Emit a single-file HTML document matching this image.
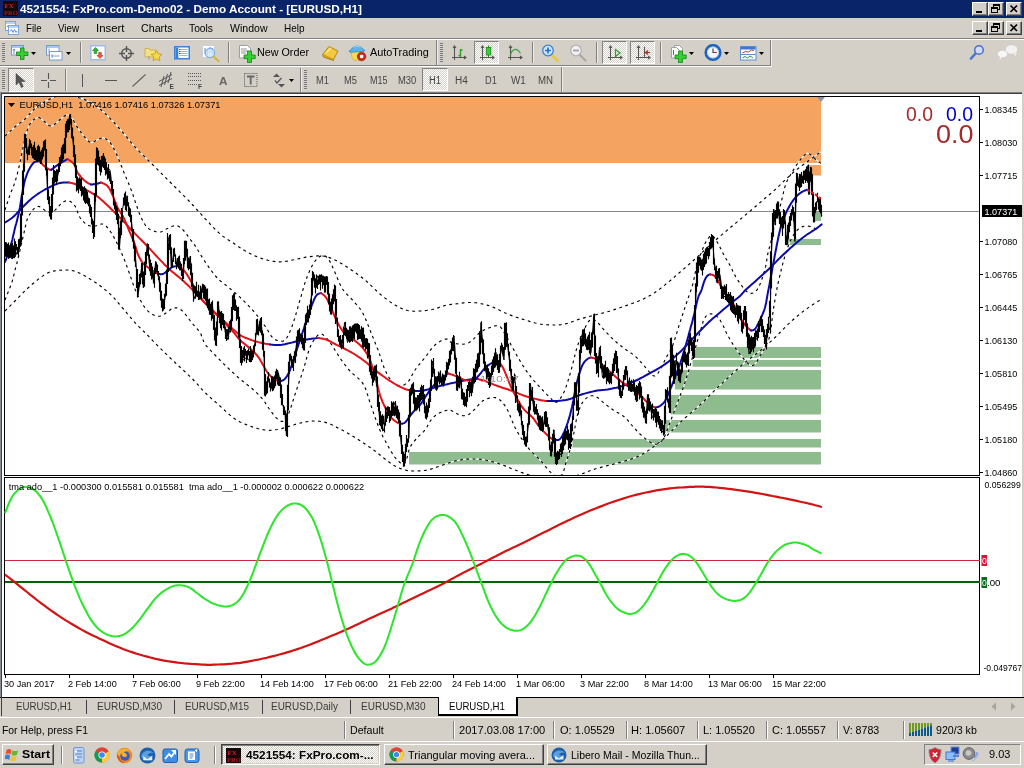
<!DOCTYPE html>
<html><head><meta charset="utf-8"><title>4521554: FxPro.com-Demo02 - Demo Account - [EURUSD,H1]</title>
<style>
html,body{margin:0;padding:0}
body{width:1024px;height:768px;overflow:hidden;background:#D4D0C8;position:relative;font-family:"Liberation Sans",sans-serif;font-size:11px}
.t{position:absolute;white-space:nowrap;line-height:1;transform-origin:0 0;display:block}
.chart{position:absolute;left:0;top:0}
.ax{font-family:"Liberation Sans",sans-serif;font-size:9.6px}
.abs{position:absolute}
#wrap{position:absolute;left:0;top:0;width:1024px;height:768px;will-change:transform}
</style></head>
<body>
<div id="wrap">
<svg class="chart" width="1024" height="768" viewBox="0 0 1024 768">
<defs><pattern id="chk" width="2" height="2" patternUnits="userSpaceOnUse"><rect width="2" height="2" fill="#D4D0C8"/><rect width="1" height="1" fill="#fff"/><rect x="1" y="1" width="1" height="1" fill="#fff"/></pattern></defs>
<rect x="0" y="92" width="1024" height="602" fill="#fff"/>
<rect x="0" y="92" width="1024" height="1" fill="#808080"/>
<rect x="0" y="93" width="1022" height="1" fill="#404040"/>
<rect x="0" y="92" width="1" height="602" fill="#8a8f96"/>
<rect x="1" y="93" width="1" height="601" fill="#404040"/>
<rect x="1022" y="92" width="2" height="602" fill="#d4d0c8"/>
<rect x="5" y="97" width="816" height="66" fill="#F4A460"/>
<rect x="809" y="165" width="12" height="10.5" fill="#F4A460"/>
<rect x="695" y="347" width="126" height="11" fill="#8FBC8F"/>
<rect x="692.5" y="360" width="128.5" height="6.75" fill="#8FBC8F"/>
<rect x="675" y="370" width="146" height="19.5" fill="#8FBC8F"/>
<rect x="671" y="395" width="150" height="19.5" fill="#8FBC8F"/>
<rect x="665" y="420" width="156" height="12.5" fill="#8FBC8F"/>
<rect x="572.5" y="439" width="248.5" height="8.5" fill="#8FBC8F"/>
<rect x="409" y="452" width="412" height="12.5" fill="#8FBC8F"/>
<rect x="787" y="239" width="34" height="6" fill="#8FBC8F"/>
<rect x="813" y="212" width="8" height="9" fill="#8FBC8F"/>
<path d="M817 97 L825 97 L821 102 Z" fill="#8a96a4"/>
<rect x="5" y="211" width="975" height="1" fill="#8a8a8a"/>
<clipPath id="c1"><rect x="5" y="97" width="974" height="378"/></clipPath>
<g clip-path="url(#c1)">
<clipPath id="cz"><rect x="695" y="347" width="126" height="11"/><rect x="692.5" y="360" width="128.5" height="6.75"/><rect x="675" y="370" width="146" height="19.5"/><rect x="671" y="395" width="150" height="19.5"/><rect x="665" y="420" width="156" height="12.5"/><rect x="572.5" y="439" width="248.5" height="8.5"/><rect x="409" y="452" width="412" height="12.5"/><rect x="787" y="239" width="34" height="6"/><rect x="813" y="212" width="8" height="9"/><rect x="5" y="97" width="816" height="66"/></clipPath><g clip-path="url(#cz)">
<polyline points="5.0,136.0 6.2,134.9 7.9,133.3 9.9,131.4 12.1,129.5 14.2,127.6 16.0,126.0 17.6,124.7 19.1,123.6 20.5,122.6 21.9,121.6 23.4,120.4 25.0,119.0 26.7,117.3 28.5,115.4 30.3,113.3 32.2,111.2 34.1,109.2 36.0,107.5 37.9,106.0 39.9,104.6 41.9,103.3 44.0,102.2 46.0,101.1 48.0,100.0 50.0,99.0 52.1,98.0 54.1,97.1 56.1,96.3 58.1,95.6 60.0,95.0 61.8,94.6 63.6,94.2 65.3,94.0 66.9,93.9 68.5,93.9 70.0,94.0 71.4,94.3 72.6,94.7 73.8,95.2 74.9,95.8 76.1,96.4 77.5,97.0 79.0,97.6 80.6,98.1 82.2,98.7 83.9,99.3 85.7,100.1 87.5,101.0 89.4,102.1 91.5,103.2 93.6,104.5 95.7,105.9 97.9,107.4 100.0,109.0 102.1,110.7 104.2,112.6 106.2,114.6 108.3,116.7 110.4,118.8 112.5,121.0 114.6,123.2 116.8,125.6 118.9,128.0 121.0,130.4 123.1,132.8 125.0,135.0 126.8,137.1 128.3,139.0 129.8,140.9 131.4,142.9 133.1,144.8 135.0,147.0 137.2,149.3 139.6,151.8 142.2,154.3 144.8,156.9 147.4,159.5 150.0,162.0 152.5,164.5 155.1,167.1 157.6,169.6 160.1,172.1 162.6,174.6 165.0,177.0 167.3,179.3 169.6,181.6 171.8,183.8 174.0,186.0 176.0,188.0 178.0,190.0 179.8,191.8 181.5,193.5 183.2,195.0 184.7,196.6 186.3,198.2 187.9,199.8 189.5,201.5 191.1,203.2 192.7,205.0 194.3,206.8 196.0,208.6 197.7,210.5 199.5,212.5 201.5,214.6 203.4,216.8 205.4,219.0 207.4,221.1 209.4,223.2 211.3,225.3 213.3,227.3 215.2,229.4 217.2,231.3 219.2,233.2 221.1,234.9 223.0,236.4 225.0,237.8 226.9,239.0 228.9,240.2 230.8,241.4 232.8,242.7 234.7,244.0 236.7,245.4 238.6,246.7 240.6,248.0 242.5,249.3 244.5,250.5 246.5,251.6 248.4,252.7 250.4,253.7 252.3,254.7 254.3,255.6 256.2,256.4 258.2,257.2 260.2,257.9 262.1,258.6 264.1,259.2 266.0,259.8 268.0,260.3 270.0,260.7 271.9,261.1 273.9,261.4 275.8,261.7 277.8,261.8 279.7,261.9 281.6,261.8 283.4,261.7 285.3,261.4 287.2,261.1 289.2,260.7 291.4,260.3 293.8,259.8 296.5,259.2 299.2,258.6 302.1,258.0 304.8,257.4 307.5,257.0 310.1,256.6 312.7,256.3 315.2,256.0 317.7,255.9 320.2,255.9 322.5,256.0 324.7,256.3 326.8,256.8 328.8,257.4 330.7,258.1 332.8,259.0 335.0,260.0 337.4,261.2 339.8,262.6 342.3,264.1 344.9,265.7 347.5,267.3 350.0,269.0 352.5,270.7 355.0,272.4 357.5,274.2 360.0,276.0 362.5,278.0 365.0,280.0 367.5,282.2 370.0,284.6 372.5,287.0 375.0,289.4 377.5,291.8 380.0,294.0 382.5,296.1 385.1,298.1 387.7,300.0 390.2,301.9 392.6,303.5 395.0,305.0 397.2,306.3 399.4,307.4 401.4,308.4 403.4,309.2 405.4,309.9 407.5,310.5 409.6,310.9 411.7,311.1 413.8,311.2 415.8,311.2 417.9,311.1 420.0,311.0 422.1,310.9 424.2,310.7 426.2,310.5 428.3,310.3 430.4,309.9 432.5,309.5 434.6,308.9 436.8,308.3 438.9,307.5 441.0,306.7 443.1,306.1 445.0,305.5 446.7,305.1 448.2,304.8 449.7,304.6 451.2,304.4 452.9,304.2 455.0,304.0 457.5,303.7 460.3,303.3 463.3,302.9 466.4,302.6 469.5,302.5 472.5,302.5 475.4,302.7 478.3,303.1 481.2,303.7 484.2,304.3 487.1,305.1 490.0,306.0 492.9,307.1 495.8,308.4 498.8,309.8 501.7,311.3 504.6,312.7 507.5,314.0 510.4,315.1 513.4,316.2 516.4,317.2 519.4,318.2 522.2,319.1 525.0,320.0 527.7,320.8 530.3,321.6 532.8,322.3 535.3,323.0 537.7,323.5 540.0,324.0 542.2,324.4 544.4,324.6 546.4,324.8 548.4,324.9 550.4,325.0 552.5,325.0 554.6,325.0 556.6,325.0 558.6,324.9 560.6,324.7 562.8,324.4 565.0,324.0 567.4,323.4 569.8,322.6 572.3,321.7 574.9,320.7 577.5,319.8 580.0,319.0 582.5,318.3 585.0,317.6 587.5,316.9 590.0,316.3 592.5,315.7 595.0,315.0 597.5,314.3 600.0,313.7 602.5,313.1 605.0,312.4 607.5,311.7 610.0,311.0 612.5,310.2 615.0,309.4 617.5,308.6 620.0,307.7 622.5,306.9 625.0,306.0 627.5,305.1 630.1,304.2 632.7,303.3 635.2,302.4 637.6,301.5 640.0,300.5 642.3,299.5 644.4,298.4 646.5,297.4 648.6,296.3 650.6,295.2 652.5,294.0 654.3,292.9 655.9,291.8 657.5,290.7 659.2,289.5 661.0,288.1 663.0,286.5 665.3,284.6 667.9,282.5 670.7,280.2 673.5,277.8 676.3,275.3 679.0,273.0 681.7,270.7 684.4,268.4 687.1,266.0 689.7,263.7 692.4,261.3 695.0,259.0 697.6,256.6 700.3,254.1 703.0,251.6 705.6,249.1 707.9,246.9 710.0,245.0 711.6,243.5 712.9,242.4 713.9,241.5 715.0,240.6 716.3,239.5 718.0,238.0 720.2,236.1 722.8,233.9 725.6,231.6 728.4,229.2 731.3,226.8 734.0,224.5 736.6,222.4 739.1,220.2 741.6,218.2 744.1,216.1 746.6,214.0 749.0,212.0 751.4,210.0 753.7,208.0 756.1,206.0 758.4,204.0 760.7,202.0 763.0,200.0 765.3,198.0 767.6,196.1 769.9,194.2 772.3,192.2 774.6,190.1 777.0,188.0 779.4,185.7 781.9,183.2 784.4,180.7 787.0,178.2 789.5,175.8 792.0,173.5 794.5,171.4 797.0,169.4 799.5,167.5 802.0,165.6 804.5,163.8 806.9,162.0 809.5,160.1 812.2,158.1 814.9,156.1 817.4,154.3 819.5,152.8 821.0,151.7" stroke="#fff" stroke-width="1.15" fill="none"/>
<polyline points="5.0,210.0 5.5,208.3 6.3,206.0 7.2,203.3 8.1,200.4 9.1,197.6 10.0,195.0 10.8,192.7 11.7,190.6 12.6,188.5 13.4,186.4 14.2,184.3 15.0,182.0 15.7,179.6 16.4,177.2 17.1,174.8 17.7,172.2 18.4,169.6 19.0,167.0 19.6,164.3 20.2,161.6 20.7,158.8 21.3,155.9 21.9,153.0 22.5,150.0 23.2,146.8 23.9,143.4 24.7,140.0 25.5,136.6 26.3,133.6 27.0,131.0 27.7,128.9 28.3,127.3 28.9,125.9 29.5,124.7 30.2,123.6 31.0,122.5 32.0,121.4 33.0,120.3 34.2,119.3 35.4,118.5 36.5,117.9 37.5,117.5 38.4,117.4 39.2,117.6 39.9,118.1 40.7,118.6 41.5,119.3 42.5,120.0 43.6,120.9 44.9,122.0 46.2,123.3 47.6,124.5 48.9,125.4 50.0,126.0 50.9,126.2 51.8,126.1 52.5,125.8 53.2,125.3 54.1,124.7 55.0,124.0 56.1,123.1 57.4,122.0 58.7,120.8 60.1,119.5 61.3,118.4 62.5,117.5 63.5,116.8 64.5,116.1 65.4,115.6 66.3,115.2 67.2,115.0 68.0,115.0 68.8,115.2 69.6,115.7 70.3,116.3 71.0,117.1 71.7,118.0 72.5,119.0 73.3,120.1 74.0,121.4 74.8,122.9 75.6,124.4 76.5,125.9 77.5,127.5 78.6,129.1 79.9,130.9 81.2,132.7 82.5,134.5 83.8,136.1 85.0,137.5 86.1,138.7 87.0,139.9 88.0,140.8 88.9,141.6 89.9,142.2 91.0,142.5 92.3,142.4 93.6,141.9 95.1,141.1 96.5,140.3 97.8,139.5 99.0,139.0 100.0,138.6 100.9,138.3 101.6,138.0 102.4,137.8 103.1,137.8 104.0,138.0 105.0,138.4 106.0,138.9 107.0,139.7 108.0,140.5 109.0,141.5 110.0,142.5 110.9,143.7 111.7,144.9 112.6,146.3 113.4,147.8 114.2,149.4 115.0,151.0 115.8,152.7 116.7,154.6 117.5,156.5 118.3,158.5 119.2,160.5 120.0,162.5 120.8,164.5 121.6,166.5 122.4,168.5 123.2,170.6 124.1,172.8 125.0,175.0 126.0,177.4 127.1,179.9 128.2,182.5 129.3,185.2 130.3,187.7 131.2,190.0 132.0,192.1 132.7,194.0 133.3,195.8 133.8,197.6 134.5,199.6 135.2,201.7 136.1,204.1 137.0,206.8 138.0,209.6 139.0,212.4 140.0,215.0 141.0,217.3 142.0,219.3 142.9,221.2 143.9,222.9 144.9,224.5 145.9,225.9 146.9,227.1 148.0,228.1 149.1,228.9 150.2,229.6 151.4,230.1 152.6,230.6 153.7,231.0 154.8,231.4 156.0,231.7 157.2,231.9 158.3,232.1 159.4,232.1 160.5,232.0 161.5,231.7 162.5,231.3 163.4,230.8 164.4,230.1 165.4,229.5 166.4,229.0 167.5,228.5 168.7,227.9 169.9,227.3 171.0,226.8 172.2,226.3 173.2,226.0 174.1,225.8 174.9,225.6 175.6,225.5 176.4,225.5 177.2,225.7 178.0,226.0 178.9,226.5 179.9,227.2 180.9,228.0 182.0,228.9 183.0,229.9 184.0,231.0 185.0,232.1 185.9,233.4 186.9,234.7 187.9,236.1 188.8,237.5 189.8,238.8 190.8,240.1 191.8,241.3 192.7,242.6 193.7,243.9 194.7,245.2 195.7,246.6 196.7,248.1 197.6,249.7 198.5,251.3 199.5,252.9 200.5,254.6 201.6,256.4 202.8,258.2 204.1,260.2 205.4,262.2 206.7,264.2 208.1,266.1 209.4,268.0 210.7,269.8 212.0,271.5 213.3,273.3 214.6,274.9 215.9,276.5 217.2,277.9 218.4,279.1 219.6,280.2 220.8,281.2 222.1,282.1 223.4,283.2 225.0,284.5 226.8,286.0 228.7,287.5 230.8,289.2 233.0,291.0 235.2,292.9 237.5,295.0 239.9,297.2 242.4,299.6 245.0,302.2 247.6,304.8 250.1,307.4 252.5,310.0 254.8,312.7 257.0,315.4 259.2,318.2 261.3,321.0 263.2,323.6 265.0,326.0 266.5,328.3 267.9,330.5 269.1,332.5 270.2,334.4 271.3,336.1 272.5,337.5 273.8,338.6 275.1,339.5 276.3,340.1 277.6,340.5 278.8,340.8 280.0,341.0 281.1,341.1 282.1,341.2 283.1,341.1 284.0,340.8 285.0,340.1 286.0,339.0 287.0,337.5 288.1,335.6 289.2,333.4 290.2,330.9 291.4,328.1 292.5,325.0 293.7,321.4 295.0,317.3 296.3,312.9 297.6,308.4 298.8,304.0 300.0,300.0 301.1,296.3 302.0,292.9 303.0,289.5 303.9,286.3 304.9,283.1 306.0,280.0 307.2,276.8 308.5,273.6 309.8,270.4 311.2,267.5 312.6,264.8 314.0,262.5 315.4,260.6 316.9,259.0 318.3,257.6 319.8,256.6 321.2,255.9 322.5,255.5 323.7,255.5 324.8,255.9 325.9,256.5 326.9,257.5 328.0,258.7 329.0,260.0 330.0,261.6 331.0,263.4 331.9,265.5 332.9,267.7 333.9,270.1 335.0,272.5 336.1,275.1 337.3,277.9 338.5,280.8 339.8,283.8 341.1,286.5 342.5,289.0 344.0,291.1 345.6,293.0 347.3,294.8 349.1,296.4 350.8,298.1 352.5,300.0 354.2,301.9 355.9,303.9 357.7,305.8 359.4,307.9 361.0,310.1 362.5,312.5 363.9,315.2 365.2,318.1 366.5,321.1 367.7,324.2 368.9,327.2 370.0,330.0 371.1,332.7 372.2,335.5 373.3,338.1 374.3,340.6 375.2,343.0 376.0,345.0 376.7,346.6 377.1,347.8 377.6,348.8 378.0,349.7 378.4,350.9 379.0,352.5 379.7,354.6 380.5,357.1 381.3,359.8 382.2,362.5 383.1,365.1 384.0,367.5 384.9,369.7 385.9,371.8 386.8,373.8 387.8,375.6 388.9,377.4 390.0,379.0 391.2,380.5 392.5,382.1 393.8,383.4 395.1,384.6 396.6,385.5 398.0,386.0 399.5,386.1 401.1,385.9 402.8,385.5 404.4,384.7 406.0,383.7 407.5,382.5 408.8,380.9 410.1,379.0 411.2,376.8 412.4,374.5 413.6,372.2 415.0,370.0 416.5,367.9 418.1,365.8 419.8,363.8 421.6,361.7 423.3,359.6 425.0,357.5 426.7,355.3 428.3,353.1 429.9,350.8 431.6,348.7 433.3,346.7 435.0,345.0 436.8,343.5 438.8,342.1 440.7,341.0 442.6,340.0 444.4,339.3 446.0,339.0 447.3,339.1 448.3,339.7 449.2,340.6 450.1,341.5 451.1,342.4 452.5,343.0 454.3,343.4 456.4,343.7 458.7,344.0 461.0,344.1 463.1,344.2 465.0,344.0 466.5,343.7 467.9,343.2 469.1,342.5 470.2,341.8 471.3,340.9 472.5,340.0 473.7,338.9 474.9,337.7 476.1,336.3 477.3,334.9 478.6,333.6 480.0,332.5 481.5,331.5 483.2,330.5 484.9,329.6 486.6,328.8 488.4,328.1 490.0,327.5 491.6,326.9 493.2,326.4 494.8,325.9 496.3,325.7 497.7,325.7 499.0,326.0 500.2,326.7 501.2,327.8 502.1,329.1 503.0,330.6 503.9,332.2 505.0,334.0 506.1,335.9 507.3,337.9 508.5,340.2 509.8,342.5 511.1,345.0 512.5,347.5 514.0,350.2 515.6,353.2 517.3,356.2 519.1,359.3 520.8,362.2 522.5,365.0 524.2,367.6 525.8,370.0 527.5,372.4 529.2,374.7 530.8,376.9 532.5,379.0 534.2,381.0 535.9,383.0 537.7,384.9 539.4,386.7 541.0,388.4 542.5,390.0 543.9,391.5 545.2,392.9 546.5,394.1 547.7,395.3 548.9,396.4 550.0,397.5 551.1,398.6 552.1,399.8 553.1,400.9 554.0,401.9 555.0,402.4 556.0,402.5 557.1,402.0 558.2,401.1 559.3,399.8 560.4,398.3 561.5,396.7 562.5,395.0 563.4,393.3 564.3,391.4 565.1,389.4 565.9,387.2 566.7,384.9 567.5,382.5 568.3,379.9 569.2,377.1 570.0,374.2 570.8,371.1 571.7,368.1 572.5,365.0 573.3,361.9 574.1,358.7 574.9,355.4 575.7,352.2 576.6,349.0 577.5,346.0 578.5,343.1 579.6,340.2 580.7,337.4 581.8,334.8 582.9,332.3 584.0,330.0 585.0,327.9 586.0,325.8 587.0,323.9 588.0,322.3 589.0,321.0 590.0,320.0 591.0,319.4 591.9,319.2 592.8,319.2 593.8,319.6 594.8,320.2 596.0,321.0 597.3,322.1 598.7,323.7 600.2,325.4 601.8,327.3 603.4,329.2 605.0,331.0 606.6,332.7 608.3,334.4 609.9,336.1 611.6,337.8 613.3,339.4 615.0,341.0 616.7,342.5 618.3,343.9 620.0,345.2 621.7,346.5 623.3,347.7 625.0,349.0 626.7,350.2 628.4,351.4 630.2,352.5 631.9,353.6 633.5,354.8 635.0,356.0 636.4,357.3 637.7,358.6 638.9,359.9 640.1,361.3 641.3,362.6 642.5,364.0 643.8,365.4 645.1,367.0 646.4,368.5 647.7,370.0 648.9,371.4 650.0,372.5 651.0,373.5 651.9,374.4 652.7,375.2 653.4,375.7 654.2,376.0 655.0,376.0 655.8,375.6 656.6,374.9 657.4,374.0 658.3,372.8 659.1,371.5 660.0,370.0 660.9,368.3 661.9,366.4 662.9,364.4 663.9,362.2 665.0,360.1 666.0,358.0 667.0,356.1 668.1,354.4 669.2,352.7 670.2,350.9 671.4,348.7 672.5,346.0 673.7,342.7 674.9,339.0 676.2,334.9 677.5,330.7 678.7,326.5 680.0,322.5 681.3,318.6 682.6,314.7 683.9,310.8 685.2,306.9 686.4,303.3 687.5,300.0 688.5,297.0 689.5,294.4 690.3,291.9 691.1,289.6 691.9,287.1 692.7,284.5 693.4,281.7 694.0,278.8 694.6,275.9 695.2,272.9 695.8,269.9 696.6,267.0 697.5,264.0 698.5,260.9 699.5,257.7 700.5,254.7 701.6,251.9 702.5,249.4 703.4,247.2 704.2,245.3 705.0,243.6 705.8,242.1 706.6,240.8 707.4,239.6 708.2,238.5 709.0,237.4 709.8,236.5 710.6,235.9 711.4,235.6 712.3,235.7 713.2,236.3 714.1,237.3 715.1,238.6 716.0,240.2 717.0,241.8 718.0,243.5 719.0,245.2 720.0,247.2 721.0,249.2 722.0,251.3 723.0,253.3 724.0,255.2 725.0,256.9 725.9,258.5 726.9,260.1 727.9,261.7 728.8,263.3 729.8,265.0 730.8,266.9 731.8,268.9 732.7,270.9 733.7,272.9 734.7,274.9 735.7,276.7 736.7,278.4 737.7,279.9 738.7,281.4 739.6,282.8 740.6,284.2 741.6,285.5 742.6,286.8 743.6,288.0 744.6,289.2 745.6,290.3 746.5,291.3 747.5,292.0 748.4,292.6 749.3,293.0 750.2,293.3 751.1,293.4 752.1,293.3 753.0,293.0 754.0,292.5 755.0,291.8 756.0,290.9 757.0,289.8 758.0,288.3 759.0,286.5 760.0,284.2 761.1,281.4 762.2,278.3 763.2,275.1 764.2,272.0 765.0,269.0 765.7,266.2 766.2,263.4 766.7,260.6 767.1,257.9 767.5,255.4 768.0,253.0 768.5,250.9 769.0,249.1 769.4,247.3 769.9,245.6 770.5,243.7 771.0,241.5 771.6,239.0 772.1,236.2 772.7,233.2 773.4,230.2 774.0,227.1 774.8,224.0 775.7,220.9 776.6,217.6 777.6,214.4 778.7,211.1 779.7,207.8 780.6,204.5 781.5,201.1 782.3,197.6 783.1,194.2 783.9,190.8 784.7,187.7 785.5,185.0 786.3,182.8 787.1,180.9 787.9,179.4 788.7,178.0 789.5,176.5 790.4,175.0 791.3,173.4 792.3,171.7 793.3,170.1 794.3,168.5 795.3,166.9 796.2,165.4 797.2,164.0 798.2,162.5 799.2,161.2 800.2,159.9 801.2,158.7 802.1,157.6 803.0,156.6 803.8,155.7 804.6,154.8 805.4,154.1 806.2,153.6 807.0,153.3 807.8,153.3 808.7,153.5 809.5,153.9 810.3,154.5 811.1,155.0 811.9,155.6 812.6,156.2 813.2,156.8 813.8,157.4 814.4,158.1 815.1,158.8 815.8,159.5 816.7,160.2 817.6,160.9 818.6,161.7 819.6,162.4 820.4,163.0 821.0,163.4" stroke="#fff" stroke-width="1.15" fill="none"/>
<polyline points="5.0,300.0 5.8,298.0 7.0,295.1 8.3,291.8 9.7,288.2 11.0,284.9 12.0,282.0 12.7,279.6 13.3,277.4 13.8,275.3 14.2,273.4 14.6,271.6 15.0,270.0 15.4,268.6 15.7,267.5 16.0,266.6 16.3,265.6 16.6,264.5 17.0,263.0 17.4,261.2 17.9,259.2 18.4,257.0 18.9,254.7 19.5,252.4 20.0,250.0 20.6,247.6 21.1,245.1 21.7,242.6 22.3,240.1 22.9,237.5 23.5,235.0 24.1,232.4 24.7,229.7 25.3,226.9 25.9,224.3 26.4,222.0 27.0,220.0 27.5,218.5 28.0,217.3 28.5,216.4 28.9,215.6 29.4,214.9 30.0,214.0 30.6,213.0 31.3,212.0 31.9,211.1 32.6,210.1 33.3,209.3 34.0,208.6 34.7,208.0 35.4,207.5 36.1,207.1 36.7,206.8 37.4,206.6 38.0,206.5 38.5,206.4 38.9,206.5 39.3,206.6 39.7,206.8 40.3,207.1 41.0,207.5 41.9,208.1 43.1,208.9 44.3,209.9 45.6,210.8 46.8,211.5 48.0,212.0 49.0,212.2 50.0,212.4 50.9,212.3 51.9,212.1 52.9,211.7 54.0,211.0 55.3,209.9 56.7,208.5 58.2,206.8 59.7,205.1 61.2,203.6 62.5,202.5 63.7,201.8 64.8,201.2 65.9,200.9 66.9,200.8 68.0,200.8 69.0,201.0 70.0,201.4 71.1,201.9 72.1,202.7 73.1,203.6 74.1,204.7 75.0,206.0 75.9,207.6 76.6,209.5 77.4,211.6 78.2,213.7 79.0,215.7 80.0,217.5 81.1,219.1 82.3,220.5 83.6,221.9 84.9,223.1 86.2,224.2 87.5,225.0 88.8,225.6 90.0,225.9 91.2,226.1 92.5,226.1 93.8,226.1 95.0,226.0 96.3,225.8 97.6,225.3 98.9,224.8 100.2,224.3 101.4,224.0 102.5,224.0 103.5,224.3 104.4,224.7 105.2,225.3 106.1,226.1 106.9,227.0 107.8,228.0 108.7,229.2 109.7,230.5 110.7,232.0 111.7,233.5 112.7,235.2 113.7,236.9 114.7,238.7 115.6,240.5 116.6,242.5 117.6,244.4 118.5,246.5 119.5,248.6 120.5,250.8 121.5,253.0 122.5,255.3 123.5,257.7 124.5,260.0 125.4,262.3 126.3,264.6 127.1,266.9 127.9,269.2 128.7,271.4 129.5,273.7 130.3,276.0 131.1,278.3 131.9,280.6 132.7,282.9 133.5,285.2 134.3,287.4 135.2,289.6 136.1,291.7 137.1,293.8 138.0,295.8 139.0,297.7 140.0,299.5 141.0,301.3 142.0,303.0 142.9,304.6 143.9,306.1 144.9,307.5 145.9,308.8 146.9,310.0 148.0,311.1 149.1,312.1 150.2,313.0 151.4,313.8 152.6,314.4 153.7,315.0 154.8,315.5 156.0,315.8 157.1,316.1 158.2,316.2 159.4,316.2 160.5,316.0 161.7,315.6 162.8,315.0 164.0,314.3 165.2,313.5 166.3,312.7 167.4,312.0 168.4,311.3 169.4,310.5 170.3,309.7 171.2,309.0 172.2,308.4 173.2,308.0 174.3,307.8 175.4,307.8 176.6,307.9 177.8,308.1 178.9,308.5 180.0,309.0 181.0,309.7 182.0,310.6 183.0,311.6 184.0,312.7 184.9,313.8 185.9,315.0 186.9,316.2 187.8,317.4 188.7,318.7 189.7,320.0 190.7,321.4 191.8,322.8 193.1,324.3 194.5,325.8 196.0,327.4 197.4,329.1 198.8,330.8 200.0,332.5 201.0,334.3 201.7,336.2 202.4,338.2 203.1,340.1 203.9,342.1 205.0,344.0 206.3,345.8 207.9,347.6 209.5,349.4 211.3,351.2 213.1,353.1 215.0,355.0 216.9,357.0 219.0,359.1 221.1,361.2 223.2,363.4 225.4,365.5 227.5,367.5 229.6,369.5 231.7,371.5 233.8,373.4 235.8,375.3 237.9,377.2 240.0,379.0 242.1,380.8 244.3,382.4 246.4,384.1 248.5,385.7 250.6,387.4 252.5,389.0 254.3,390.7 256.1,392.3 257.8,393.9 259.4,395.6 261.0,397.3 262.5,399.0 263.9,400.8 265.2,402.7 266.4,404.6 267.6,406.4 268.8,408.3 270.0,410.0 271.3,411.7 272.5,413.4 273.8,415.1 275.1,416.6 276.3,417.9 277.5,419.0 278.7,419.9 279.8,420.6 280.9,421.1 282.0,421.4 283.0,421.4 284.0,421.0 284.9,420.3 285.8,419.2 286.6,417.8 287.4,416.2 288.2,414.4 289.0,412.5 289.8,410.4 290.7,408.0 291.5,405.4 292.3,402.7 293.2,400.1 294.0,397.5 294.8,395.0 295.7,392.5 296.5,390.0 297.3,387.5 298.2,385.0 299.0,382.5 299.8,380.0 300.7,377.6 301.5,375.2 302.3,372.7 303.2,370.1 304.0,367.5 304.8,364.6 305.7,361.6 306.5,358.4 307.3,355.4 308.2,352.5 309.0,350.0 309.8,347.9 310.6,346.0 311.4,344.3 312.3,342.8 313.1,341.3 314.0,340.0 314.9,338.7 315.9,337.4 316.9,336.2 318.0,335.1 319.0,334.4 320.0,334.0 321.0,334.0 322.0,334.3 323.0,334.8 324.0,335.6 325.0,336.5 326.0,337.5 327.0,338.6 328.1,339.8 329.2,341.2 330.2,342.7 331.4,344.3 332.5,346.0 333.7,347.8 334.8,349.7 336.0,351.7 337.3,353.8 338.6,355.9 340.0,358.0 341.5,360.2 343.1,362.4 344.8,364.7 346.6,366.9 348.3,369.1 350.0,371.0 351.7,372.7 353.5,374.4 355.3,375.8 357.0,377.3 358.6,378.6 360.0,380.0 361.1,381.2 362.0,382.3 362.8,383.4 363.5,384.5 364.2,385.8 365.0,387.5 365.8,389.5 366.6,391.9 367.4,394.4 368.3,397.0 369.1,399.8 370.0,402.5 371.0,405.3 372.0,408.3 373.0,411.4 374.0,414.4 375.0,417.3 376.0,420.0 376.9,422.4 377.7,424.5 378.5,426.6 379.3,428.5 380.1,430.5 381.0,432.5 382.0,434.6 383.0,436.7 384.1,438.8 385.2,440.8 386.3,442.9 387.5,445.0 388.7,447.2 389.9,449.4 391.2,451.6 392.5,453.8 393.7,455.8 395.0,457.5 396.3,459.0 397.6,460.5 399.0,461.7 400.3,462.8 401.5,463.5 402.5,464.0 403.3,464.2 403.9,464.1 404.5,463.8 404.9,463.1 405.4,462.2 406.0,461.0 406.6,459.3 407.2,457.1 407.8,454.7 408.4,452.1 409.1,449.7 410.0,447.5 411.0,445.6 412.2,443.8 413.5,442.1 414.9,440.5 416.2,439.0 417.5,437.5 418.8,436.1 420.1,434.9 421.3,433.8 422.6,432.6 423.8,431.4 425.0,430.0 426.1,428.4 427.1,426.7 428.1,424.9 429.0,423.1 430.0,421.5 431.0,420.0 432.0,418.7 433.1,417.6 434.1,416.6 435.2,415.7 436.3,414.8 437.5,414.0 438.9,413.2 440.4,412.5 441.9,411.9 443.4,411.4 444.8,410.9 446.0,410.5 446.9,410.2 447.4,409.9 447.9,409.7 448.4,409.6 449.0,409.7 450.0,410.0 451.3,410.6 453.0,411.4 454.8,412.5 456.6,413.5 458.4,414.4 460.0,415.0 461.4,415.4 462.7,415.6 463.9,415.7 465.1,415.6 466.3,415.4 467.5,415.0 468.8,414.4 470.0,413.5 471.2,412.5 472.5,411.4 473.8,410.2 475.0,409.0 476.2,407.7 477.4,406.3 478.6,404.8 479.8,403.4 481.1,402.1 482.5,401.0 484.1,400.1 485.7,399.3 487.5,398.6 489.3,398.1 490.9,397.7 492.5,397.5 493.9,397.5 495.2,397.6 496.4,397.9 497.6,398.4 498.8,399.1 500.0,400.0 501.2,401.1 502.5,402.5 503.8,404.1 505.0,405.8 506.2,407.8 507.5,410.0 508.8,412.5 510.0,415.5 511.2,418.6 512.5,421.8 513.8,424.8 515.0,427.5 516.2,429.9 517.5,432.1 518.8,434.2 520.0,436.2 521.2,438.1 522.5,440.0 523.7,441.8 524.9,443.5 526.1,445.2 527.3,446.8 528.6,448.4 530.0,450.0 531.6,451.7 533.2,453.4 535.0,455.1 536.8,456.7 538.4,458.4 540.0,460.0 541.4,461.6 542.8,463.2 544.1,464.8 545.3,466.3 546.4,467.7 547.5,469.0 548.5,470.1 549.4,471.1 550.2,471.9 551.0,472.7 551.7,473.4 552.5,474.0 553.3,474.6 554.0,475.0 554.7,475.4 555.4,475.7 556.2,475.9 557.0,476.0 557.9,476.0 558.8,476.0 559.8,475.8 560.8,475.5 561.7,474.9 562.5,474.0 563.2,472.6 563.8,470.9 564.3,468.9 564.9,466.8 565.4,464.6 566.0,462.5 566.6,460.5 567.3,458.6 568.0,456.6 568.6,454.6 569.3,452.4 570.0,450.0 570.7,447.4 571.4,444.5 572.0,441.6 572.7,438.5 573.4,435.5 574.0,432.5 574.6,429.5 575.1,426.5 575.7,423.4 576.2,420.5 576.8,417.6 577.5,415.0 578.2,412.6 579.0,410.2 579.8,408.1 580.6,406.0 581.5,404.2 582.5,402.5 583.6,401.0 584.8,399.6 586.1,398.4 587.4,397.4 588.7,396.6 590.0,396.0 591.2,395.7 592.5,395.7 593.8,395.9 595.0,396.3 596.2,396.9 597.5,397.5 598.7,398.3 599.9,399.3 601.1,400.4 602.3,401.6 603.6,402.8 605.0,404.0 606.5,405.1 608.1,406.3 609.8,407.5 611.6,408.7 613.3,409.9 615.0,411.0 616.7,412.1 618.4,413.1 620.2,414.2 621.9,415.2 623.5,416.3 625.0,417.5 626.4,418.8 627.7,420.2 628.9,421.7 630.1,423.1 631.3,424.6 632.5,426.0 633.7,427.4 634.9,428.7 636.1,430.0 637.3,431.4 638.6,432.7 640.0,434.0 641.6,435.4 643.2,436.9 645.0,438.4 646.8,439.8 648.4,441.0 650.0,442.0 651.4,442.8 652.7,443.4 654.0,443.9 655.2,444.2 656.3,444.2 657.5,444.0 658.6,443.5 659.8,442.8 660.8,441.8 661.9,440.6 663.0,439.2 664.0,437.5 665.0,435.5 666.0,433.3 666.9,430.8 667.9,428.2 668.9,425.4 670.0,422.5 671.2,419.5 672.4,416.2 673.7,412.8 674.9,409.4 676.2,405.9 677.5,402.5 678.8,399.2 680.0,396.0 681.2,392.8 682.5,389.5 683.8,386.1 685.0,382.5 686.2,378.6 687.5,374.5 688.8,370.3 690.0,366.0 691.2,361.7 692.5,357.5 693.8,353.2 695.1,348.8 696.4,344.4 697.7,340.1 698.9,336.1 700.0,332.5 700.9,329.3 701.8,326.3 702.5,323.7 703.2,321.3 704.1,319.2 705.0,317.5 706.1,316.1 707.3,315.1 708.6,314.4 709.9,314.0 711.2,313.9 712.5,314.0 713.8,314.3 715.0,315.0 716.2,315.8 717.5,317.0 718.8,318.4 720.0,320.0 721.2,322.0 722.5,324.4 723.8,327.1 725.0,329.9 726.2,332.5 727.5,335.0 728.8,337.3 730.0,339.4 731.2,341.6 732.5,343.6 733.8,345.6 735.0,347.5 736.2,349.3 737.5,351.1 738.8,352.8 740.0,354.4 741.2,356.0 742.5,357.5 743.8,359.0 745.1,360.5 746.4,361.9 747.7,363.2 748.9,364.3 750.0,365.0 751.0,365.4 751.9,365.6 752.7,365.5 753.4,365.2 754.2,364.7 755.0,364.0 755.8,363.1 756.7,361.9 757.5,360.5 758.3,359.0 759.2,357.4 760.0,356.0 760.8,354.7 761.7,353.4 762.5,352.0 763.3,350.6 764.2,349.2 765.0,347.5 765.9,345.8 766.7,344.0 767.6,342.2 768.5,340.1 769.3,337.7 770.0,335.0 770.6,331.8 771.1,328.1 771.6,324.1 772.0,320.0 772.5,315.9 773.0,312.0 773.6,308.2 774.2,304.3 774.9,300.4 775.5,296.7 776.1,293.2 776.7,290.0 777.2,287.3 777.7,285.0 778.1,283.0 778.6,281.0 779.1,279.0 779.6,276.7 780.2,274.2 780.8,271.6 781.4,269.0 782.1,266.3 782.8,263.6 783.5,261.0 784.2,258.4 785.0,255.7 785.8,253.0 786.7,250.4 787.5,247.9 788.4,245.5 789.3,243.3 790.3,241.1 791.3,239.0 792.3,237.1 793.3,235.3 794.3,233.8 795.3,232.4 796.3,231.2 797.3,230.2 798.2,229.3 799.2,228.6 800.2,227.9 801.2,227.3 802.1,226.9 803.1,226.5 804.1,226.3 805.0,226.1 806.0,226.0 807.0,226.0 808.0,226.1 809.0,226.2 810.0,226.4 811.0,226.7 811.9,227.0 812.8,227.4 813.7,227.8 814.6,228.3 815.4,228.9 816.1,229.4 816.8,229.8 817.3,230.2 817.7,230.6 818.0,231.0 818.3,231.3 818.5,231.6 818.7,231.8" stroke="#fff" stroke-width="1.15" fill="none"/>
<polyline points="5.0,311.0 6.1,309.9 7.5,308.5 9.2,306.8 11.1,304.9 13.0,303.0 15.0,301.0 17.0,299.0 19.1,296.8 21.4,294.5 23.6,292.2 25.9,290.0 28.0,288.0 30.1,286.1 32.1,284.3 34.2,282.6 36.2,280.9 38.1,279.4 40.0,278.0 41.7,276.7 43.3,275.6 44.8,274.5 46.4,273.6 48.1,272.7 50.0,272.0 52.2,271.4 54.7,270.9 57.4,270.5 60.0,270.2 62.6,270.1 65.0,270.0 67.2,270.0 69.2,270.2 71.1,270.4 73.0,270.8 75.0,271.3 77.0,272.0 79.1,272.9 81.4,274.0 83.6,275.2 85.9,276.5 88.0,277.8 90.0,279.0 91.8,280.1 93.5,281.1 95.1,282.2 96.7,283.2 98.3,284.4 100.0,285.7 101.9,287.1 103.8,288.6 105.7,290.2 107.7,291.8 109.7,293.6 111.7,295.5 113.6,297.5 115.6,299.7 117.5,302.0 119.5,304.3 121.4,306.7 123.4,309.0 125.4,311.3 127.3,313.7 129.3,316.0 131.3,318.3 133.2,320.6 135.2,322.8 137.1,324.9 139.1,326.8 141.0,328.7 142.9,330.5 144.9,332.5 146.9,334.5 149.0,336.6 151.1,338.8 153.2,341.1 155.4,343.4 157.7,345.7 160.0,348.0 162.4,350.3 164.8,352.7 167.2,355.1 169.7,357.5 172.3,360.0 175.0,362.5 177.8,365.2 180.8,368.0 183.9,370.8 186.9,373.6 189.8,376.4 192.5,379.0 194.8,381.4 196.9,383.7 198.9,385.9 200.8,388.1 202.8,390.3 205.0,392.5 207.4,394.8 209.8,397.0 212.3,399.3 214.9,401.5 217.5,403.8 220.0,406.0 222.5,408.3 225.0,410.6 227.5,412.9 230.0,415.1 232.5,417.2 235.0,419.0 237.5,420.5 240.0,421.9 242.5,423.1 245.0,424.1 247.5,425.1 250.0,426.0 252.5,426.9 255.1,427.7 257.7,428.5 260.2,429.1 262.6,429.6 265.0,430.0 267.2,430.2 269.4,430.3 271.4,430.2 273.4,430.1 275.4,429.8 277.5,429.5 279.6,429.1 281.7,428.6 283.8,427.9 285.8,427.3 287.9,426.6 290.0,426.0 292.1,425.4 294.2,424.8 296.2,424.1 298.3,423.5 300.4,423.0 302.5,422.5 304.6,422.1 306.7,421.7 308.8,421.4 310.8,421.2 312.9,421.0 315.0,421.0 317.1,421.1 319.2,421.3 321.2,421.5 323.3,421.9 325.4,422.4 327.5,423.0 329.6,423.8 331.7,424.7 333.8,425.7 335.8,426.8 337.9,427.9 340.0,429.0 342.1,430.1 344.2,431.2 346.2,432.4 348.3,433.6 350.4,434.8 352.5,436.0 354.6,437.3 356.8,438.6 358.9,440.0 361.0,441.4 363.1,442.7 365.0,444.0 366.8,445.2 368.5,446.4 370.2,447.5 371.8,448.6 373.4,449.8 375.0,451.0 376.7,452.3 378.3,453.6 380.0,455.0 381.7,456.4 383.3,457.7 385.0,459.0 386.7,460.3 388.3,461.5 390.0,462.8 391.7,463.9 393.3,465.0 395.0,466.0 396.7,466.9 398.3,467.7 400.0,468.4 401.7,469.0 403.3,469.5 405.0,470.0 406.6,470.4 408.2,470.6 409.8,470.8 411.5,470.9 413.2,471.0 415.0,471.0 416.9,471.0 419.0,470.9 421.1,470.8 423.2,470.6 425.4,470.4 427.5,470.0 429.6,469.5 431.6,468.9 433.6,468.2 435.6,467.5 437.8,466.8 440.0,466.0 442.4,465.2 444.8,464.3 447.3,463.4 449.9,462.5 452.5,461.7 455.0,461.0 457.5,460.5 460.0,460.0 462.5,459.6 465.0,459.3 467.5,459.1 470.0,459.0 472.5,459.0 475.0,459.0 477.5,459.1 480.0,459.3 482.5,459.6 485.0,460.0 487.5,460.5 490.0,461.0 492.5,461.7 495.0,462.4 497.5,463.2 500.0,464.0 502.5,464.9 505.1,465.9 507.7,467.0 510.2,468.0 512.6,469.1 515.0,470.0 517.2,470.8 519.4,471.6 521.4,472.4 523.4,473.1 525.4,473.8 527.5,474.5 529.6,475.2 531.6,475.8 533.6,476.4 535.6,477.0 537.8,477.5 540.0,478.0 542.4,478.5 544.9,478.9 547.5,479.3 550.1,479.7 552.6,479.9 555.0,480.0 557.3,479.9 559.5,479.7 561.7,479.3 563.8,478.9 565.9,478.5 568.0,478.0 570.0,477.5 572.0,477.0 573.9,476.5 575.8,475.9 577.8,475.2 580.0,474.5 582.3,473.7 584.8,472.8 587.3,471.8 589.9,470.8 592.5,469.9 595.0,469.0 597.5,468.2 600.0,467.6 602.5,466.9 605.0,466.3 607.5,465.6 610.0,465.0 612.5,464.4 615.0,463.7 617.5,463.1 620.0,462.4 622.5,461.8 625.0,461.0 627.5,460.2 630.1,459.4 632.7,458.5 635.2,457.6 637.6,456.6 640.0,455.5 642.2,454.3 644.4,453.1 646.4,451.8 648.4,450.4 650.4,449.0 652.5,447.5 654.6,445.9 656.8,444.3 658.9,442.6 661.0,440.9 663.1,439.2 665.0,437.5 666.8,435.8 668.5,434.1 670.2,432.5 671.8,430.8 673.4,429.1 675.0,427.5 676.6,425.9 678.1,424.4 679.7,422.9 681.3,421.4 683.0,419.8 685.0,418.0 687.2,416.1 689.6,414.0 692.2,411.8 694.8,409.6 697.4,407.3 700.0,405.0 702.5,402.6 705.0,400.1 707.5,397.6 710.0,395.0 712.5,392.5 715.0,390.0 717.5,387.6 720.0,385.2 722.5,382.9 725.0,380.6 727.5,378.3 730.0,376.0 732.5,373.7 735.0,371.4 737.5,369.1 740.0,366.8 742.5,364.6 745.0,362.5 747.5,360.5 750.0,358.6 752.5,356.8 755.0,354.9 757.5,353.0 760.0,351.0 762.5,348.9 765.0,346.7 767.5,344.5 770.0,342.2 772.5,339.9 775.0,337.5 777.5,335.1 780.0,332.5 782.5,329.9 785.0,327.4 787.5,324.9 790.0,322.5 792.5,320.2 795.0,318.1 797.5,315.9 800.0,313.9 802.5,311.9 805.0,310.0 807.7,308.1 810.6,306.1 813.4,304.2 816.1,302.5 818.4,301.1 820.0,300.0" stroke="#fff" stroke-width="1.15" fill="none"/>
</g>
<polyline points="5.0,136.0 6.2,134.9 7.9,133.3 9.9,131.4 12.1,129.5 14.2,127.6 16.0,126.0 17.6,124.7 19.1,123.6 20.5,122.6 21.9,121.6 23.4,120.4 25.0,119.0 26.7,117.3 28.5,115.4 30.3,113.3 32.2,111.2 34.1,109.2 36.0,107.5 37.9,106.0 39.9,104.6 41.9,103.3 44.0,102.2 46.0,101.1 48.0,100.0 50.0,99.0 52.1,98.0 54.1,97.1 56.1,96.3 58.1,95.6 60.0,95.0 61.8,94.6 63.6,94.2 65.3,94.0 66.9,93.9 68.5,93.9 70.0,94.0 71.4,94.3 72.6,94.7 73.8,95.2 74.9,95.8 76.1,96.4 77.5,97.0 79.0,97.6 80.6,98.1 82.2,98.7 83.9,99.3 85.7,100.1 87.5,101.0 89.4,102.1 91.5,103.2 93.6,104.5 95.7,105.9 97.9,107.4 100.0,109.0 102.1,110.7 104.2,112.6 106.2,114.6 108.3,116.7 110.4,118.8 112.5,121.0 114.6,123.2 116.8,125.6 118.9,128.0 121.0,130.4 123.1,132.8 125.0,135.0 126.8,137.1 128.3,139.0 129.8,140.9 131.4,142.9 133.1,144.8 135.0,147.0 137.2,149.3 139.6,151.8 142.2,154.3 144.8,156.9 147.4,159.5 150.0,162.0 152.5,164.5 155.1,167.1 157.6,169.6 160.1,172.1 162.6,174.6 165.0,177.0 167.3,179.3 169.6,181.6 171.8,183.8 174.0,186.0 176.0,188.0 178.0,190.0 179.8,191.8 181.5,193.5 183.2,195.0 184.7,196.6 186.3,198.2 187.9,199.8 189.5,201.5 191.1,203.2 192.7,205.0 194.3,206.8 196.0,208.6 197.7,210.5 199.5,212.5 201.5,214.6 203.4,216.8 205.4,219.0 207.4,221.1 209.4,223.2 211.3,225.3 213.3,227.3 215.2,229.4 217.2,231.3 219.2,233.2 221.1,234.9 223.0,236.4 225.0,237.8 226.9,239.0 228.9,240.2 230.8,241.4 232.8,242.7 234.7,244.0 236.7,245.4 238.6,246.7 240.6,248.0 242.5,249.3 244.5,250.5 246.5,251.6 248.4,252.7 250.4,253.7 252.3,254.7 254.3,255.6 256.2,256.4 258.2,257.2 260.2,257.9 262.1,258.6 264.1,259.2 266.0,259.8 268.0,260.3 270.0,260.7 271.9,261.1 273.9,261.4 275.8,261.7 277.8,261.8 279.7,261.9 281.6,261.8 283.4,261.7 285.3,261.4 287.2,261.1 289.2,260.7 291.4,260.3 293.8,259.8 296.5,259.2 299.2,258.6 302.1,258.0 304.8,257.4 307.5,257.0 310.1,256.6 312.7,256.3 315.2,256.0 317.7,255.9 320.2,255.9 322.5,256.0 324.7,256.3 326.8,256.8 328.8,257.4 330.7,258.1 332.8,259.0 335.0,260.0 337.4,261.2 339.8,262.6 342.3,264.1 344.9,265.7 347.5,267.3 350.0,269.0 352.5,270.7 355.0,272.4 357.5,274.2 360.0,276.0 362.5,278.0 365.0,280.0 367.5,282.2 370.0,284.6 372.5,287.0 375.0,289.4 377.5,291.8 380.0,294.0 382.5,296.1 385.1,298.1 387.7,300.0 390.2,301.9 392.6,303.5 395.0,305.0 397.2,306.3 399.4,307.4 401.4,308.4 403.4,309.2 405.4,309.9 407.5,310.5 409.6,310.9 411.7,311.1 413.8,311.2 415.8,311.2 417.9,311.1 420.0,311.0 422.1,310.9 424.2,310.7 426.2,310.5 428.3,310.3 430.4,309.9 432.5,309.5 434.6,308.9 436.8,308.3 438.9,307.5 441.0,306.7 443.1,306.1 445.0,305.5 446.7,305.1 448.2,304.8 449.7,304.6 451.2,304.4 452.9,304.2 455.0,304.0 457.5,303.7 460.3,303.3 463.3,302.9 466.4,302.6 469.5,302.5 472.5,302.5 475.4,302.7 478.3,303.1 481.2,303.7 484.2,304.3 487.1,305.1 490.0,306.0 492.9,307.1 495.8,308.4 498.8,309.8 501.7,311.3 504.6,312.7 507.5,314.0 510.4,315.1 513.4,316.2 516.4,317.2 519.4,318.2 522.2,319.1 525.0,320.0 527.7,320.8 530.3,321.6 532.8,322.3 535.3,323.0 537.7,323.5 540.0,324.0 542.2,324.4 544.4,324.6 546.4,324.8 548.4,324.9 550.4,325.0 552.5,325.0 554.6,325.0 556.6,325.0 558.6,324.9 560.6,324.7 562.8,324.4 565.0,324.0 567.4,323.4 569.8,322.6 572.3,321.7 574.9,320.7 577.5,319.8 580.0,319.0 582.5,318.3 585.0,317.6 587.5,316.9 590.0,316.3 592.5,315.7 595.0,315.0 597.5,314.3 600.0,313.7 602.5,313.1 605.0,312.4 607.5,311.7 610.0,311.0 612.5,310.2 615.0,309.4 617.5,308.6 620.0,307.7 622.5,306.9 625.0,306.0 627.5,305.1 630.1,304.2 632.7,303.3 635.2,302.4 637.6,301.5 640.0,300.5 642.3,299.5 644.4,298.4 646.5,297.4 648.6,296.3 650.6,295.2 652.5,294.0 654.3,292.9 655.9,291.8 657.5,290.7 659.2,289.5 661.0,288.1 663.0,286.5 665.3,284.6 667.9,282.5 670.7,280.2 673.5,277.8 676.3,275.3 679.0,273.0 681.7,270.7 684.4,268.4 687.1,266.0 689.7,263.7 692.4,261.3 695.0,259.0 697.6,256.6 700.3,254.1 703.0,251.6 705.6,249.1 707.9,246.9 710.0,245.0 711.6,243.5 712.9,242.4 713.9,241.5 715.0,240.6 716.3,239.5 718.0,238.0 720.2,236.1 722.8,233.9 725.6,231.6 728.4,229.2 731.3,226.8 734.0,224.5 736.6,222.4 739.1,220.2 741.6,218.2 744.1,216.1 746.6,214.0 749.0,212.0 751.4,210.0 753.7,208.0 756.1,206.0 758.4,204.0 760.7,202.0 763.0,200.0 765.3,198.0 767.6,196.1 769.9,194.2 772.3,192.2 774.6,190.1 777.0,188.0 779.4,185.7 781.9,183.2 784.4,180.7 787.0,178.2 789.5,175.8 792.0,173.5 794.5,171.4 797.0,169.4 799.5,167.5 802.0,165.6 804.5,163.8 806.9,162.0 809.5,160.1 812.2,158.1 814.9,156.1 817.4,154.3 819.5,152.8 821.0,151.7" stroke="#000" stroke-width="1.15" fill="none" stroke-dasharray="2.8 3.5"/>
<polyline points="5.0,210.0 5.5,208.3 6.3,206.0 7.2,203.3 8.1,200.4 9.1,197.6 10.0,195.0 10.8,192.7 11.7,190.6 12.6,188.5 13.4,186.4 14.2,184.3 15.0,182.0 15.7,179.6 16.4,177.2 17.1,174.8 17.7,172.2 18.4,169.6 19.0,167.0 19.6,164.3 20.2,161.6 20.7,158.8 21.3,155.9 21.9,153.0 22.5,150.0 23.2,146.8 23.9,143.4 24.7,140.0 25.5,136.6 26.3,133.6 27.0,131.0 27.7,128.9 28.3,127.3 28.9,125.9 29.5,124.7 30.2,123.6 31.0,122.5 32.0,121.4 33.0,120.3 34.2,119.3 35.4,118.5 36.5,117.9 37.5,117.5 38.4,117.4 39.2,117.6 39.9,118.1 40.7,118.6 41.5,119.3 42.5,120.0 43.6,120.9 44.9,122.0 46.2,123.3 47.6,124.5 48.9,125.4 50.0,126.0 50.9,126.2 51.8,126.1 52.5,125.8 53.2,125.3 54.1,124.7 55.0,124.0 56.1,123.1 57.4,122.0 58.7,120.8 60.1,119.5 61.3,118.4 62.5,117.5 63.5,116.8 64.5,116.1 65.4,115.6 66.3,115.2 67.2,115.0 68.0,115.0 68.8,115.2 69.6,115.7 70.3,116.3 71.0,117.1 71.7,118.0 72.5,119.0 73.3,120.1 74.0,121.4 74.8,122.9 75.6,124.4 76.5,125.9 77.5,127.5 78.6,129.1 79.9,130.9 81.2,132.7 82.5,134.5 83.8,136.1 85.0,137.5 86.1,138.7 87.0,139.9 88.0,140.8 88.9,141.6 89.9,142.2 91.0,142.5 92.3,142.4 93.6,141.9 95.1,141.1 96.5,140.3 97.8,139.5 99.0,139.0 100.0,138.6 100.9,138.3 101.6,138.0 102.4,137.8 103.1,137.8 104.0,138.0 105.0,138.4 106.0,138.9 107.0,139.7 108.0,140.5 109.0,141.5 110.0,142.5 110.9,143.7 111.7,144.9 112.6,146.3 113.4,147.8 114.2,149.4 115.0,151.0 115.8,152.7 116.7,154.6 117.5,156.5 118.3,158.5 119.2,160.5 120.0,162.5 120.8,164.5 121.6,166.5 122.4,168.5 123.2,170.6 124.1,172.8 125.0,175.0 126.0,177.4 127.1,179.9 128.2,182.5 129.3,185.2 130.3,187.7 131.2,190.0 132.0,192.1 132.7,194.0 133.3,195.8 133.8,197.6 134.5,199.6 135.2,201.7 136.1,204.1 137.0,206.8 138.0,209.6 139.0,212.4 140.0,215.0 141.0,217.3 142.0,219.3 142.9,221.2 143.9,222.9 144.9,224.5 145.9,225.9 146.9,227.1 148.0,228.1 149.1,228.9 150.2,229.6 151.4,230.1 152.6,230.6 153.7,231.0 154.8,231.4 156.0,231.7 157.2,231.9 158.3,232.1 159.4,232.1 160.5,232.0 161.5,231.7 162.5,231.3 163.4,230.8 164.4,230.1 165.4,229.5 166.4,229.0 167.5,228.5 168.7,227.9 169.9,227.3 171.0,226.8 172.2,226.3 173.2,226.0 174.1,225.8 174.9,225.6 175.6,225.5 176.4,225.5 177.2,225.7 178.0,226.0 178.9,226.5 179.9,227.2 180.9,228.0 182.0,228.9 183.0,229.9 184.0,231.0 185.0,232.1 185.9,233.4 186.9,234.7 187.9,236.1 188.8,237.5 189.8,238.8 190.8,240.1 191.8,241.3 192.7,242.6 193.7,243.9 194.7,245.2 195.7,246.6 196.7,248.1 197.6,249.7 198.5,251.3 199.5,252.9 200.5,254.6 201.6,256.4 202.8,258.2 204.1,260.2 205.4,262.2 206.7,264.2 208.1,266.1 209.4,268.0 210.7,269.8 212.0,271.5 213.3,273.3 214.6,274.9 215.9,276.5 217.2,277.9 218.4,279.1 219.6,280.2 220.8,281.2 222.1,282.1 223.4,283.2 225.0,284.5 226.8,286.0 228.7,287.5 230.8,289.2 233.0,291.0 235.2,292.9 237.5,295.0 239.9,297.2 242.4,299.6 245.0,302.2 247.6,304.8 250.1,307.4 252.5,310.0 254.8,312.7 257.0,315.4 259.2,318.2 261.3,321.0 263.2,323.6 265.0,326.0 266.5,328.3 267.9,330.5 269.1,332.5 270.2,334.4 271.3,336.1 272.5,337.5 273.8,338.6 275.1,339.5 276.3,340.1 277.6,340.5 278.8,340.8 280.0,341.0 281.1,341.1 282.1,341.2 283.1,341.1 284.0,340.8 285.0,340.1 286.0,339.0 287.0,337.5 288.1,335.6 289.2,333.4 290.2,330.9 291.4,328.1 292.5,325.0 293.7,321.4 295.0,317.3 296.3,312.9 297.6,308.4 298.8,304.0 300.0,300.0 301.1,296.3 302.0,292.9 303.0,289.5 303.9,286.3 304.9,283.1 306.0,280.0 307.2,276.8 308.5,273.6 309.8,270.4 311.2,267.5 312.6,264.8 314.0,262.5 315.4,260.6 316.9,259.0 318.3,257.6 319.8,256.6 321.2,255.9 322.5,255.5 323.7,255.5 324.8,255.9 325.9,256.5 326.9,257.5 328.0,258.7 329.0,260.0 330.0,261.6 331.0,263.4 331.9,265.5 332.9,267.7 333.9,270.1 335.0,272.5 336.1,275.1 337.3,277.9 338.5,280.8 339.8,283.8 341.1,286.5 342.5,289.0 344.0,291.1 345.6,293.0 347.3,294.8 349.1,296.4 350.8,298.1 352.5,300.0 354.2,301.9 355.9,303.9 357.7,305.8 359.4,307.9 361.0,310.1 362.5,312.5 363.9,315.2 365.2,318.1 366.5,321.1 367.7,324.2 368.9,327.2 370.0,330.0 371.1,332.7 372.2,335.5 373.3,338.1 374.3,340.6 375.2,343.0 376.0,345.0 376.7,346.6 377.1,347.8 377.6,348.8 378.0,349.7 378.4,350.9 379.0,352.5 379.7,354.6 380.5,357.1 381.3,359.8 382.2,362.5 383.1,365.1 384.0,367.5 384.9,369.7 385.9,371.8 386.8,373.8 387.8,375.6 388.9,377.4 390.0,379.0 391.2,380.5 392.5,382.1 393.8,383.4 395.1,384.6 396.6,385.5 398.0,386.0 399.5,386.1 401.1,385.9 402.8,385.5 404.4,384.7 406.0,383.7 407.5,382.5 408.8,380.9 410.1,379.0 411.2,376.8 412.4,374.5 413.6,372.2 415.0,370.0 416.5,367.9 418.1,365.8 419.8,363.8 421.6,361.7 423.3,359.6 425.0,357.5 426.7,355.3 428.3,353.1 429.9,350.8 431.6,348.7 433.3,346.7 435.0,345.0 436.8,343.5 438.8,342.1 440.7,341.0 442.6,340.0 444.4,339.3 446.0,339.0 447.3,339.1 448.3,339.7 449.2,340.6 450.1,341.5 451.1,342.4 452.5,343.0 454.3,343.4 456.4,343.7 458.7,344.0 461.0,344.1 463.1,344.2 465.0,344.0 466.5,343.7 467.9,343.2 469.1,342.5 470.2,341.8 471.3,340.9 472.5,340.0 473.7,338.9 474.9,337.7 476.1,336.3 477.3,334.9 478.6,333.6 480.0,332.5 481.5,331.5 483.2,330.5 484.9,329.6 486.6,328.8 488.4,328.1 490.0,327.5 491.6,326.9 493.2,326.4 494.8,325.9 496.3,325.7 497.7,325.7 499.0,326.0 500.2,326.7 501.2,327.8 502.1,329.1 503.0,330.6 503.9,332.2 505.0,334.0 506.1,335.9 507.3,337.9 508.5,340.2 509.8,342.5 511.1,345.0 512.5,347.5 514.0,350.2 515.6,353.2 517.3,356.2 519.1,359.3 520.8,362.2 522.5,365.0 524.2,367.6 525.8,370.0 527.5,372.4 529.2,374.7 530.8,376.9 532.5,379.0 534.2,381.0 535.9,383.0 537.7,384.9 539.4,386.7 541.0,388.4 542.5,390.0 543.9,391.5 545.2,392.9 546.5,394.1 547.7,395.3 548.9,396.4 550.0,397.5 551.1,398.6 552.1,399.8 553.1,400.9 554.0,401.9 555.0,402.4 556.0,402.5 557.1,402.0 558.2,401.1 559.3,399.8 560.4,398.3 561.5,396.7 562.5,395.0 563.4,393.3 564.3,391.4 565.1,389.4 565.9,387.2 566.7,384.9 567.5,382.5 568.3,379.9 569.2,377.1 570.0,374.2 570.8,371.1 571.7,368.1 572.5,365.0 573.3,361.9 574.1,358.7 574.9,355.4 575.7,352.2 576.6,349.0 577.5,346.0 578.5,343.1 579.6,340.2 580.7,337.4 581.8,334.8 582.9,332.3 584.0,330.0 585.0,327.9 586.0,325.8 587.0,323.9 588.0,322.3 589.0,321.0 590.0,320.0 591.0,319.4 591.9,319.2 592.8,319.2 593.8,319.6 594.8,320.2 596.0,321.0 597.3,322.1 598.7,323.7 600.2,325.4 601.8,327.3 603.4,329.2 605.0,331.0 606.6,332.7 608.3,334.4 609.9,336.1 611.6,337.8 613.3,339.4 615.0,341.0 616.7,342.5 618.3,343.9 620.0,345.2 621.7,346.5 623.3,347.7 625.0,349.0 626.7,350.2 628.4,351.4 630.2,352.5 631.9,353.6 633.5,354.8 635.0,356.0 636.4,357.3 637.7,358.6 638.9,359.9 640.1,361.3 641.3,362.6 642.5,364.0 643.8,365.4 645.1,367.0 646.4,368.5 647.7,370.0 648.9,371.4 650.0,372.5 651.0,373.5 651.9,374.4 652.7,375.2 653.4,375.7 654.2,376.0 655.0,376.0 655.8,375.6 656.6,374.9 657.4,374.0 658.3,372.8 659.1,371.5 660.0,370.0 660.9,368.3 661.9,366.4 662.9,364.4 663.9,362.2 665.0,360.1 666.0,358.0 667.0,356.1 668.1,354.4 669.2,352.7 670.2,350.9 671.4,348.7 672.5,346.0 673.7,342.7 674.9,339.0 676.2,334.9 677.5,330.7 678.7,326.5 680.0,322.5 681.3,318.6 682.6,314.7 683.9,310.8 685.2,306.9 686.4,303.3 687.5,300.0 688.5,297.0 689.5,294.4 690.3,291.9 691.1,289.6 691.9,287.1 692.7,284.5 693.4,281.7 694.0,278.8 694.6,275.9 695.2,272.9 695.8,269.9 696.6,267.0 697.5,264.0 698.5,260.9 699.5,257.7 700.5,254.7 701.6,251.9 702.5,249.4 703.4,247.2 704.2,245.3 705.0,243.6 705.8,242.1 706.6,240.8 707.4,239.6 708.2,238.5 709.0,237.4 709.8,236.5 710.6,235.9 711.4,235.6 712.3,235.7 713.2,236.3 714.1,237.3 715.1,238.6 716.0,240.2 717.0,241.8 718.0,243.5 719.0,245.2 720.0,247.2 721.0,249.2 722.0,251.3 723.0,253.3 724.0,255.2 725.0,256.9 725.9,258.5 726.9,260.1 727.9,261.7 728.8,263.3 729.8,265.0 730.8,266.9 731.8,268.9 732.7,270.9 733.7,272.9 734.7,274.9 735.7,276.7 736.7,278.4 737.7,279.9 738.7,281.4 739.6,282.8 740.6,284.2 741.6,285.5 742.6,286.8 743.6,288.0 744.6,289.2 745.6,290.3 746.5,291.3 747.5,292.0 748.4,292.6 749.3,293.0 750.2,293.3 751.1,293.4 752.1,293.3 753.0,293.0 754.0,292.5 755.0,291.8 756.0,290.9 757.0,289.8 758.0,288.3 759.0,286.5 760.0,284.2 761.1,281.4 762.2,278.3 763.2,275.1 764.2,272.0 765.0,269.0 765.7,266.2 766.2,263.4 766.7,260.6 767.1,257.9 767.5,255.4 768.0,253.0 768.5,250.9 769.0,249.1 769.4,247.3 769.9,245.6 770.5,243.7 771.0,241.5 771.6,239.0 772.1,236.2 772.7,233.2 773.4,230.2 774.0,227.1 774.8,224.0 775.7,220.9 776.6,217.6 777.6,214.4 778.7,211.1 779.7,207.8 780.6,204.5 781.5,201.1 782.3,197.6 783.1,194.2 783.9,190.8 784.7,187.7 785.5,185.0 786.3,182.8 787.1,180.9 787.9,179.4 788.7,178.0 789.5,176.5 790.4,175.0 791.3,173.4 792.3,171.7 793.3,170.1 794.3,168.5 795.3,166.9 796.2,165.4 797.2,164.0 798.2,162.5 799.2,161.2 800.2,159.9 801.2,158.7 802.1,157.6 803.0,156.6 803.8,155.7 804.6,154.8 805.4,154.1 806.2,153.6 807.0,153.3 807.8,153.3 808.7,153.5 809.5,153.9 810.3,154.5 811.1,155.0 811.9,155.6 812.6,156.2 813.2,156.8 813.8,157.4 814.4,158.1 815.1,158.8 815.8,159.5 816.7,160.2 817.6,160.9 818.6,161.7 819.6,162.4 820.4,163.0 821.0,163.4" stroke="#000" stroke-width="1.15" fill="none" stroke-dasharray="2.8 3.5"/>
<polyline points="5.0,300.0 5.8,298.0 7.0,295.1 8.3,291.8 9.7,288.2 11.0,284.9 12.0,282.0 12.7,279.6 13.3,277.4 13.8,275.3 14.2,273.4 14.6,271.6 15.0,270.0 15.4,268.6 15.7,267.5 16.0,266.6 16.3,265.6 16.6,264.5 17.0,263.0 17.4,261.2 17.9,259.2 18.4,257.0 18.9,254.7 19.5,252.4 20.0,250.0 20.6,247.6 21.1,245.1 21.7,242.6 22.3,240.1 22.9,237.5 23.5,235.0 24.1,232.4 24.7,229.7 25.3,226.9 25.9,224.3 26.4,222.0 27.0,220.0 27.5,218.5 28.0,217.3 28.5,216.4 28.9,215.6 29.4,214.9 30.0,214.0 30.6,213.0 31.3,212.0 31.9,211.1 32.6,210.1 33.3,209.3 34.0,208.6 34.7,208.0 35.4,207.5 36.1,207.1 36.7,206.8 37.4,206.6 38.0,206.5 38.5,206.4 38.9,206.5 39.3,206.6 39.7,206.8 40.3,207.1 41.0,207.5 41.9,208.1 43.1,208.9 44.3,209.9 45.6,210.8 46.8,211.5 48.0,212.0 49.0,212.2 50.0,212.4 50.9,212.3 51.9,212.1 52.9,211.7 54.0,211.0 55.3,209.9 56.7,208.5 58.2,206.8 59.7,205.1 61.2,203.6 62.5,202.5 63.7,201.8 64.8,201.2 65.9,200.9 66.9,200.8 68.0,200.8 69.0,201.0 70.0,201.4 71.1,201.9 72.1,202.7 73.1,203.6 74.1,204.7 75.0,206.0 75.9,207.6 76.6,209.5 77.4,211.6 78.2,213.7 79.0,215.7 80.0,217.5 81.1,219.1 82.3,220.5 83.6,221.9 84.9,223.1 86.2,224.2 87.5,225.0 88.8,225.6 90.0,225.9 91.2,226.1 92.5,226.1 93.8,226.1 95.0,226.0 96.3,225.8 97.6,225.3 98.9,224.8 100.2,224.3 101.4,224.0 102.5,224.0 103.5,224.3 104.4,224.7 105.2,225.3 106.1,226.1 106.9,227.0 107.8,228.0 108.7,229.2 109.7,230.5 110.7,232.0 111.7,233.5 112.7,235.2 113.7,236.9 114.7,238.7 115.6,240.5 116.6,242.5 117.6,244.4 118.5,246.5 119.5,248.6 120.5,250.8 121.5,253.0 122.5,255.3 123.5,257.7 124.5,260.0 125.4,262.3 126.3,264.6 127.1,266.9 127.9,269.2 128.7,271.4 129.5,273.7 130.3,276.0 131.1,278.3 131.9,280.6 132.7,282.9 133.5,285.2 134.3,287.4 135.2,289.6 136.1,291.7 137.1,293.8 138.0,295.8 139.0,297.7 140.0,299.5 141.0,301.3 142.0,303.0 142.9,304.6 143.9,306.1 144.9,307.5 145.9,308.8 146.9,310.0 148.0,311.1 149.1,312.1 150.2,313.0 151.4,313.8 152.6,314.4 153.7,315.0 154.8,315.5 156.0,315.8 157.1,316.1 158.2,316.2 159.4,316.2 160.5,316.0 161.7,315.6 162.8,315.0 164.0,314.3 165.2,313.5 166.3,312.7 167.4,312.0 168.4,311.3 169.4,310.5 170.3,309.7 171.2,309.0 172.2,308.4 173.2,308.0 174.3,307.8 175.4,307.8 176.6,307.9 177.8,308.1 178.9,308.5 180.0,309.0 181.0,309.7 182.0,310.6 183.0,311.6 184.0,312.7 184.9,313.8 185.9,315.0 186.9,316.2 187.8,317.4 188.7,318.7 189.7,320.0 190.7,321.4 191.8,322.8 193.1,324.3 194.5,325.8 196.0,327.4 197.4,329.1 198.8,330.8 200.0,332.5 201.0,334.3 201.7,336.2 202.4,338.2 203.1,340.1 203.9,342.1 205.0,344.0 206.3,345.8 207.9,347.6 209.5,349.4 211.3,351.2 213.1,353.1 215.0,355.0 216.9,357.0 219.0,359.1 221.1,361.2 223.2,363.4 225.4,365.5 227.5,367.5 229.6,369.5 231.7,371.5 233.8,373.4 235.8,375.3 237.9,377.2 240.0,379.0 242.1,380.8 244.3,382.4 246.4,384.1 248.5,385.7 250.6,387.4 252.5,389.0 254.3,390.7 256.1,392.3 257.8,393.9 259.4,395.6 261.0,397.3 262.5,399.0 263.9,400.8 265.2,402.7 266.4,404.6 267.6,406.4 268.8,408.3 270.0,410.0 271.3,411.7 272.5,413.4 273.8,415.1 275.1,416.6 276.3,417.9 277.5,419.0 278.7,419.9 279.8,420.6 280.9,421.1 282.0,421.4 283.0,421.4 284.0,421.0 284.9,420.3 285.8,419.2 286.6,417.8 287.4,416.2 288.2,414.4 289.0,412.5 289.8,410.4 290.7,408.0 291.5,405.4 292.3,402.7 293.2,400.1 294.0,397.5 294.8,395.0 295.7,392.5 296.5,390.0 297.3,387.5 298.2,385.0 299.0,382.5 299.8,380.0 300.7,377.6 301.5,375.2 302.3,372.7 303.2,370.1 304.0,367.5 304.8,364.6 305.7,361.6 306.5,358.4 307.3,355.4 308.2,352.5 309.0,350.0 309.8,347.9 310.6,346.0 311.4,344.3 312.3,342.8 313.1,341.3 314.0,340.0 314.9,338.7 315.9,337.4 316.9,336.2 318.0,335.1 319.0,334.4 320.0,334.0 321.0,334.0 322.0,334.3 323.0,334.8 324.0,335.6 325.0,336.5 326.0,337.5 327.0,338.6 328.1,339.8 329.2,341.2 330.2,342.7 331.4,344.3 332.5,346.0 333.7,347.8 334.8,349.7 336.0,351.7 337.3,353.8 338.6,355.9 340.0,358.0 341.5,360.2 343.1,362.4 344.8,364.7 346.6,366.9 348.3,369.1 350.0,371.0 351.7,372.7 353.5,374.4 355.3,375.8 357.0,377.3 358.6,378.6 360.0,380.0 361.1,381.2 362.0,382.3 362.8,383.4 363.5,384.5 364.2,385.8 365.0,387.5 365.8,389.5 366.6,391.9 367.4,394.4 368.3,397.0 369.1,399.8 370.0,402.5 371.0,405.3 372.0,408.3 373.0,411.4 374.0,414.4 375.0,417.3 376.0,420.0 376.9,422.4 377.7,424.5 378.5,426.6 379.3,428.5 380.1,430.5 381.0,432.5 382.0,434.6 383.0,436.7 384.1,438.8 385.2,440.8 386.3,442.9 387.5,445.0 388.7,447.2 389.9,449.4 391.2,451.6 392.5,453.8 393.7,455.8 395.0,457.5 396.3,459.0 397.6,460.5 399.0,461.7 400.3,462.8 401.5,463.5 402.5,464.0 403.3,464.2 403.9,464.1 404.5,463.8 404.9,463.1 405.4,462.2 406.0,461.0 406.6,459.3 407.2,457.1 407.8,454.7 408.4,452.1 409.1,449.7 410.0,447.5 411.0,445.6 412.2,443.8 413.5,442.1 414.9,440.5 416.2,439.0 417.5,437.5 418.8,436.1 420.1,434.9 421.3,433.8 422.6,432.6 423.8,431.4 425.0,430.0 426.1,428.4 427.1,426.7 428.1,424.9 429.0,423.1 430.0,421.5 431.0,420.0 432.0,418.7 433.1,417.6 434.1,416.6 435.2,415.7 436.3,414.8 437.5,414.0 438.9,413.2 440.4,412.5 441.9,411.9 443.4,411.4 444.8,410.9 446.0,410.5 446.9,410.2 447.4,409.9 447.9,409.7 448.4,409.6 449.0,409.7 450.0,410.0 451.3,410.6 453.0,411.4 454.8,412.5 456.6,413.5 458.4,414.4 460.0,415.0 461.4,415.4 462.7,415.6 463.9,415.7 465.1,415.6 466.3,415.4 467.5,415.0 468.8,414.4 470.0,413.5 471.2,412.5 472.5,411.4 473.8,410.2 475.0,409.0 476.2,407.7 477.4,406.3 478.6,404.8 479.8,403.4 481.1,402.1 482.5,401.0 484.1,400.1 485.7,399.3 487.5,398.6 489.3,398.1 490.9,397.7 492.5,397.5 493.9,397.5 495.2,397.6 496.4,397.9 497.6,398.4 498.8,399.1 500.0,400.0 501.2,401.1 502.5,402.5 503.8,404.1 505.0,405.8 506.2,407.8 507.5,410.0 508.8,412.5 510.0,415.5 511.2,418.6 512.5,421.8 513.8,424.8 515.0,427.5 516.2,429.9 517.5,432.1 518.8,434.2 520.0,436.2 521.2,438.1 522.5,440.0 523.7,441.8 524.9,443.5 526.1,445.2 527.3,446.8 528.6,448.4 530.0,450.0 531.6,451.7 533.2,453.4 535.0,455.1 536.8,456.7 538.4,458.4 540.0,460.0 541.4,461.6 542.8,463.2 544.1,464.8 545.3,466.3 546.4,467.7 547.5,469.0 548.5,470.1 549.4,471.1 550.2,471.9 551.0,472.7 551.7,473.4 552.5,474.0 553.3,474.6 554.0,475.0 554.7,475.4 555.4,475.7 556.2,475.9 557.0,476.0 557.9,476.0 558.8,476.0 559.8,475.8 560.8,475.5 561.7,474.9 562.5,474.0 563.2,472.6 563.8,470.9 564.3,468.9 564.9,466.8 565.4,464.6 566.0,462.5 566.6,460.5 567.3,458.6 568.0,456.6 568.6,454.6 569.3,452.4 570.0,450.0 570.7,447.4 571.4,444.5 572.0,441.6 572.7,438.5 573.4,435.5 574.0,432.5 574.6,429.5 575.1,426.5 575.7,423.4 576.2,420.5 576.8,417.6 577.5,415.0 578.2,412.6 579.0,410.2 579.8,408.1 580.6,406.0 581.5,404.2 582.5,402.5 583.6,401.0 584.8,399.6 586.1,398.4 587.4,397.4 588.7,396.6 590.0,396.0 591.2,395.7 592.5,395.7 593.8,395.9 595.0,396.3 596.2,396.9 597.5,397.5 598.7,398.3 599.9,399.3 601.1,400.4 602.3,401.6 603.6,402.8 605.0,404.0 606.5,405.1 608.1,406.3 609.8,407.5 611.6,408.7 613.3,409.9 615.0,411.0 616.7,412.1 618.4,413.1 620.2,414.2 621.9,415.2 623.5,416.3 625.0,417.5 626.4,418.8 627.7,420.2 628.9,421.7 630.1,423.1 631.3,424.6 632.5,426.0 633.7,427.4 634.9,428.7 636.1,430.0 637.3,431.4 638.6,432.7 640.0,434.0 641.6,435.4 643.2,436.9 645.0,438.4 646.8,439.8 648.4,441.0 650.0,442.0 651.4,442.8 652.7,443.4 654.0,443.9 655.2,444.2 656.3,444.2 657.5,444.0 658.6,443.5 659.8,442.8 660.8,441.8 661.9,440.6 663.0,439.2 664.0,437.5 665.0,435.5 666.0,433.3 666.9,430.8 667.9,428.2 668.9,425.4 670.0,422.5 671.2,419.5 672.4,416.2 673.7,412.8 674.9,409.4 676.2,405.9 677.5,402.5 678.8,399.2 680.0,396.0 681.2,392.8 682.5,389.5 683.8,386.1 685.0,382.5 686.2,378.6 687.5,374.5 688.8,370.3 690.0,366.0 691.2,361.7 692.5,357.5 693.8,353.2 695.1,348.8 696.4,344.4 697.7,340.1 698.9,336.1 700.0,332.5 700.9,329.3 701.8,326.3 702.5,323.7 703.2,321.3 704.1,319.2 705.0,317.5 706.1,316.1 707.3,315.1 708.6,314.4 709.9,314.0 711.2,313.9 712.5,314.0 713.8,314.3 715.0,315.0 716.2,315.8 717.5,317.0 718.8,318.4 720.0,320.0 721.2,322.0 722.5,324.4 723.8,327.1 725.0,329.9 726.2,332.5 727.5,335.0 728.8,337.3 730.0,339.4 731.2,341.6 732.5,343.6 733.8,345.6 735.0,347.5 736.2,349.3 737.5,351.1 738.8,352.8 740.0,354.4 741.2,356.0 742.5,357.5 743.8,359.0 745.1,360.5 746.4,361.9 747.7,363.2 748.9,364.3 750.0,365.0 751.0,365.4 751.9,365.6 752.7,365.5 753.4,365.2 754.2,364.7 755.0,364.0 755.8,363.1 756.7,361.9 757.5,360.5 758.3,359.0 759.2,357.4 760.0,356.0 760.8,354.7 761.7,353.4 762.5,352.0 763.3,350.6 764.2,349.2 765.0,347.5 765.9,345.8 766.7,344.0 767.6,342.2 768.5,340.1 769.3,337.7 770.0,335.0 770.6,331.8 771.1,328.1 771.6,324.1 772.0,320.0 772.5,315.9 773.0,312.0 773.6,308.2 774.2,304.3 774.9,300.4 775.5,296.7 776.1,293.2 776.7,290.0 777.2,287.3 777.7,285.0 778.1,283.0 778.6,281.0 779.1,279.0 779.6,276.7 780.2,274.2 780.8,271.6 781.4,269.0 782.1,266.3 782.8,263.6 783.5,261.0 784.2,258.4 785.0,255.7 785.8,253.0 786.7,250.4 787.5,247.9 788.4,245.5 789.3,243.3 790.3,241.1 791.3,239.0 792.3,237.1 793.3,235.3 794.3,233.8 795.3,232.4 796.3,231.2 797.3,230.2 798.2,229.3 799.2,228.6 800.2,227.9 801.2,227.3 802.1,226.9 803.1,226.5 804.1,226.3 805.0,226.1 806.0,226.0 807.0,226.0 808.0,226.1 809.0,226.2 810.0,226.4 811.0,226.7 811.9,227.0 812.8,227.4 813.7,227.8 814.6,228.3 815.4,228.9 816.1,229.4 816.8,229.8 817.3,230.2 817.7,230.6 818.0,231.0 818.3,231.3 818.5,231.6 818.7,231.8" stroke="#000" stroke-width="1.15" fill="none" stroke-dasharray="2.8 3.5"/>
<polyline points="5.0,311.0 6.1,309.9 7.5,308.5 9.2,306.8 11.1,304.9 13.0,303.0 15.0,301.0 17.0,299.0 19.1,296.8 21.4,294.5 23.6,292.2 25.9,290.0 28.0,288.0 30.1,286.1 32.1,284.3 34.2,282.6 36.2,280.9 38.1,279.4 40.0,278.0 41.7,276.7 43.3,275.6 44.8,274.5 46.4,273.6 48.1,272.7 50.0,272.0 52.2,271.4 54.7,270.9 57.4,270.5 60.0,270.2 62.6,270.1 65.0,270.0 67.2,270.0 69.2,270.2 71.1,270.4 73.0,270.8 75.0,271.3 77.0,272.0 79.1,272.9 81.4,274.0 83.6,275.2 85.9,276.5 88.0,277.8 90.0,279.0 91.8,280.1 93.5,281.1 95.1,282.2 96.7,283.2 98.3,284.4 100.0,285.7 101.9,287.1 103.8,288.6 105.7,290.2 107.7,291.8 109.7,293.6 111.7,295.5 113.6,297.5 115.6,299.7 117.5,302.0 119.5,304.3 121.4,306.7 123.4,309.0 125.4,311.3 127.3,313.7 129.3,316.0 131.3,318.3 133.2,320.6 135.2,322.8 137.1,324.9 139.1,326.8 141.0,328.7 142.9,330.5 144.9,332.5 146.9,334.5 149.0,336.6 151.1,338.8 153.2,341.1 155.4,343.4 157.7,345.7 160.0,348.0 162.4,350.3 164.8,352.7 167.2,355.1 169.7,357.5 172.3,360.0 175.0,362.5 177.8,365.2 180.8,368.0 183.9,370.8 186.9,373.6 189.8,376.4 192.5,379.0 194.8,381.4 196.9,383.7 198.9,385.9 200.8,388.1 202.8,390.3 205.0,392.5 207.4,394.8 209.8,397.0 212.3,399.3 214.9,401.5 217.5,403.8 220.0,406.0 222.5,408.3 225.0,410.6 227.5,412.9 230.0,415.1 232.5,417.2 235.0,419.0 237.5,420.5 240.0,421.9 242.5,423.1 245.0,424.1 247.5,425.1 250.0,426.0 252.5,426.9 255.1,427.7 257.7,428.5 260.2,429.1 262.6,429.6 265.0,430.0 267.2,430.2 269.4,430.3 271.4,430.2 273.4,430.1 275.4,429.8 277.5,429.5 279.6,429.1 281.7,428.6 283.8,427.9 285.8,427.3 287.9,426.6 290.0,426.0 292.1,425.4 294.2,424.8 296.2,424.1 298.3,423.5 300.4,423.0 302.5,422.5 304.6,422.1 306.7,421.7 308.8,421.4 310.8,421.2 312.9,421.0 315.0,421.0 317.1,421.1 319.2,421.3 321.2,421.5 323.3,421.9 325.4,422.4 327.5,423.0 329.6,423.8 331.7,424.7 333.8,425.7 335.8,426.8 337.9,427.9 340.0,429.0 342.1,430.1 344.2,431.2 346.2,432.4 348.3,433.6 350.4,434.8 352.5,436.0 354.6,437.3 356.8,438.6 358.9,440.0 361.0,441.4 363.1,442.7 365.0,444.0 366.8,445.2 368.5,446.4 370.2,447.5 371.8,448.6 373.4,449.8 375.0,451.0 376.7,452.3 378.3,453.6 380.0,455.0 381.7,456.4 383.3,457.7 385.0,459.0 386.7,460.3 388.3,461.5 390.0,462.8 391.7,463.9 393.3,465.0 395.0,466.0 396.7,466.9 398.3,467.7 400.0,468.4 401.7,469.0 403.3,469.5 405.0,470.0 406.6,470.4 408.2,470.6 409.8,470.8 411.5,470.9 413.2,471.0 415.0,471.0 416.9,471.0 419.0,470.9 421.1,470.8 423.2,470.6 425.4,470.4 427.5,470.0 429.6,469.5 431.6,468.9 433.6,468.2 435.6,467.5 437.8,466.8 440.0,466.0 442.4,465.2 444.8,464.3 447.3,463.4 449.9,462.5 452.5,461.7 455.0,461.0 457.5,460.5 460.0,460.0 462.5,459.6 465.0,459.3 467.5,459.1 470.0,459.0 472.5,459.0 475.0,459.0 477.5,459.1 480.0,459.3 482.5,459.6 485.0,460.0 487.5,460.5 490.0,461.0 492.5,461.7 495.0,462.4 497.5,463.2 500.0,464.0 502.5,464.9 505.1,465.9 507.7,467.0 510.2,468.0 512.6,469.1 515.0,470.0 517.2,470.8 519.4,471.6 521.4,472.4 523.4,473.1 525.4,473.8 527.5,474.5 529.6,475.2 531.6,475.8 533.6,476.4 535.6,477.0 537.8,477.5 540.0,478.0 542.4,478.5 544.9,478.9 547.5,479.3 550.1,479.7 552.6,479.9 555.0,480.0 557.3,479.9 559.5,479.7 561.7,479.3 563.8,478.9 565.9,478.5 568.0,478.0 570.0,477.5 572.0,477.0 573.9,476.5 575.8,475.9 577.8,475.2 580.0,474.5 582.3,473.7 584.8,472.8 587.3,471.8 589.9,470.8 592.5,469.9 595.0,469.0 597.5,468.2 600.0,467.6 602.5,466.9 605.0,466.3 607.5,465.6 610.0,465.0 612.5,464.4 615.0,463.7 617.5,463.1 620.0,462.4 622.5,461.8 625.0,461.0 627.5,460.2 630.1,459.4 632.7,458.5 635.2,457.6 637.6,456.6 640.0,455.5 642.2,454.3 644.4,453.1 646.4,451.8 648.4,450.4 650.4,449.0 652.5,447.5 654.6,445.9 656.8,444.3 658.9,442.6 661.0,440.9 663.1,439.2 665.0,437.5 666.8,435.8 668.5,434.1 670.2,432.5 671.8,430.8 673.4,429.1 675.0,427.5 676.6,425.9 678.1,424.4 679.7,422.9 681.3,421.4 683.0,419.8 685.0,418.0 687.2,416.1 689.6,414.0 692.2,411.8 694.8,409.6 697.4,407.3 700.0,405.0 702.5,402.6 705.0,400.1 707.5,397.6 710.0,395.0 712.5,392.5 715.0,390.0 717.5,387.6 720.0,385.2 722.5,382.9 725.0,380.6 727.5,378.3 730.0,376.0 732.5,373.7 735.0,371.4 737.5,369.1 740.0,366.8 742.5,364.6 745.0,362.5 747.5,360.5 750.0,358.6 752.5,356.8 755.0,354.9 757.5,353.0 760.0,351.0 762.5,348.9 765.0,346.7 767.5,344.5 770.0,342.2 772.5,339.9 775.0,337.5 777.5,335.1 780.0,332.5 782.5,329.9 785.0,327.4 787.5,324.9 790.0,322.5 792.5,320.2 795.0,318.1 797.5,315.9 800.0,313.9 802.5,311.9 805.0,310.0 807.7,308.1 810.6,306.1 813.4,304.2 816.1,302.5 818.4,301.1 820.0,300.0" stroke="#000" stroke-width="1.15" fill="none" stroke-dasharray="2.8 3.5"/>
<polyline points="5.0,222.5 5.8,222.0 6.9,221.3 8.3,220.5 9.7,219.5 11.2,218.5 12.5,217.5 13.7,216.4 14.9,215.3 16.1,214.1 17.3,212.8 18.6,211.4 20.0,210.0 21.5,208.4 23.1,206.8 24.8,205.0 26.6,203.2 28.3,201.6 30.0,200.0 31.7,198.6 33.3,197.2 35.0,196.0 36.7,194.8 38.3,193.6 40.0,192.5 41.7,191.5 43.3,190.5 45.0,189.5 46.7,188.6 48.3,187.8 50.0,187.0 51.7,186.2 53.4,185.4 55.1,184.7 56.7,184.0 58.4,183.4 60.0,183.0 61.7,182.7 63.4,182.6 65.1,182.5 66.7,182.5 68.0,182.5 69.0,182.5" stroke="#0A0AA8" stroke-width="2.0" fill="none" stroke-linejoin="round" stroke-linecap="round"/>
<polyline points="69.0,182.5 69.6,182.6 70.4,182.8 71.4,182.9 72.5,183.2 73.7,183.5 75.0,184.0 76.4,184.6 78.0,185.4 79.8,186.2 81.5,187.1 83.3,188.1 85.0,189.0 86.7,190.0 88.5,191.0 90.3,192.1 92.0,193.1 93.6,194.1 95.0,195.0 96.0,195.6 96.8,196.1 97.4,196.4 98.0,196.9 98.8,197.5 100.0,198.5 101.6,199.9 103.4,201.6 105.4,203.5 107.6,205.5 109.7,207.5 111.7,209.5 113.6,211.4 115.6,213.3 117.5,215.3 119.5,217.2 121.4,219.2 123.4,221.2 125.4,223.3 127.3,225.4 129.3,227.6 131.3,229.7 133.2,231.8 135.2,233.9 137.2,235.9 139.1,237.9 141.1,239.8 143.0,241.7 145.0,243.7 146.9,245.7 148.8,247.8 150.8,249.9 152.8,252.1 154.7,254.2 156.7,256.3 158.6,258.4 160.5,260.4 162.5,262.4 164.4,264.4 166.4,266.3 168.3,268.2 170.3,270.0 172.2,271.7 174.2,273.3 176.1,274.9 178.1,276.5 180.0,278.1 182.0,279.8 184.0,281.6 185.9,283.4 187.9,285.2 189.8,287.1 191.8,289.0 193.8,291.0 195.7,293.0 197.7,295.1 199.6,297.2 201.6,299.4 203.5,301.5 205.5,303.5 207.5,305.5 209.4,307.4 211.4,309.4 213.3,311.3 215.3,313.2 217.2,315.0 219.2,316.8 221.1,318.6 223.1,320.4 225.0,322.1 227.0,323.8 228.9,325.5 230.8,327.2 232.7,328.9 234.6,330.6 236.4,332.2 238.2,333.7 240.0,335.0 241.7,336.1 243.4,336.9 245.1,337.7 246.7,338.3 248.3,338.9 250.0,339.5 251.7,340.1 253.3,340.6 255.0,341.2 256.7,341.6 258.3,342.1 260.0,342.5 261.8,342.9 263.7,343.3 265.6,343.7 267.4,344.0 268.9,344.3 270.0,344.5" stroke="#E3121A" stroke-width="2.0" fill="none" stroke-linejoin="round" stroke-linecap="round"/>
<polyline points="270.0,344.5 271.1,344.6 272.6,344.7 274.4,344.9 276.3,345.0 278.2,345.1 280.0,345.0 281.7,344.8 283.3,344.5 285.0,344.2 286.7,343.8 288.3,343.4 290.0,343.0 291.7,342.6 293.3,342.2 295.0,341.7 296.7,341.3 298.3,340.9 300.0,340.5 301.7,340.2 303.4,339.9 305.1,339.7 306.8,339.4 308.4,339.2 310.0,339.0 311.5,338.8 313.1,338.6 314.6,338.4 316.0,338.2 317.2,338.1 318.0,338.0" stroke="#0A0AA8" stroke-width="2.0" fill="none" stroke-linejoin="round" stroke-linecap="round"/>
<polyline points="318.0,338.0 318.9,338.1 320.0,338.3 321.4,338.5 323.0,338.7 324.5,339.1 326.0,339.5 327.4,340.1 328.9,340.8 330.4,341.5 331.9,342.4 333.4,343.2 335.0,344.0 336.6,344.8 338.3,345.6 339.9,346.4 341.6,347.3 343.3,348.1 345.0,349.0 346.7,349.9 348.3,350.7 350.0,351.6 351.7,352.5 353.3,353.5 355.0,354.5 356.7,355.6 358.3,356.7 360.0,357.8 361.7,359.0 363.3,360.2 365.0,361.5 366.7,362.8 368.3,364.3 370.0,365.7 371.7,367.2 373.3,368.6 375.0,370.0 376.7,371.3 378.3,372.6 380.0,373.9 381.7,375.1 383.3,376.3 385.0,377.5 386.7,378.7 388.3,379.8 390.0,380.9 391.7,382.0 393.3,383.0 395.0,384.0 396.7,385.0 398.5,385.9 400.2,386.8 402.0,387.6 403.6,388.4 405.0,389.0 406.3,389.5 407.5,389.8 408.6,390.1 409.6,390.2 410.4,390.4 411.0,390.5" stroke="#E3121A" stroke-width="2.0" fill="none" stroke-linejoin="round" stroke-linecap="round"/>
<polyline points="411.0,390.5 412.0,390.6 413.3,390.7 414.9,390.9 416.6,391.0 418.3,391.1 420.0,391.0 421.6,390.8 423.3,390.6 424.9,390.2 426.6,389.8 428.3,389.4 430.0,389.0 431.6,388.6 433.1,388.1 434.7,387.6 436.3,387.1 438.0,386.5 440.0,386.0 442.2,385.4 444.6,384.9 447.2,384.2 449.8,383.6 452.4,383.1 455.0,382.5 457.6,381.9 460.3,381.4 462.9,380.8 465.5,380.3 467.9,379.8 470.0,379.5 471.8,379.3 473.5,379.1 474.9,379.1 476.2,379.0 477.2,379.0 478.0,379.0" stroke="#0A0AA8" stroke-width="2.0" fill="none" stroke-linejoin="round" stroke-linecap="round"/>
<polyline points="478.0,379.0 478.7,379.2 479.6,379.4 480.7,379.7 482.0,380.0 483.4,380.5 485.0,381.0 486.7,381.7 488.7,382.4 490.8,383.3 492.9,384.2 495.2,385.1 497.5,386.0 499.9,386.8 502.4,387.7 505.0,388.5 507.6,389.3 510.1,390.2 512.5,391.0 514.7,391.8 516.8,392.7 518.8,393.6 520.7,394.4 522.8,395.2 525.0,396.0 527.4,396.8 530.1,397.5 532.8,398.2 535.5,398.9 537.9,399.5 540.0,400.0 541.8,400.4 543.3,400.6 544.7,400.8 545.8,400.9 546.8,400.9 547.5,401.0" stroke="#E3121A" stroke-width="2.0" fill="none" stroke-linejoin="round" stroke-linecap="round"/>
<polyline points="547.5,401.0 548.6,401.0 550.0,401.1 551.7,401.1 553.6,401.1 555.6,401.1 557.5,401.0 559.5,400.8 561.6,400.6 563.8,400.2 565.9,399.9 568.0,399.5 570.0,399.0 571.8,398.4 573.3,397.8 574.8,397.1 576.4,396.4 578.1,395.7 580.0,395.0 582.2,394.3 584.6,393.6 587.2,392.9 589.8,392.2 592.4,391.6 595.0,391.0 597.5,390.6 600.1,390.2 602.7,389.9 605.2,389.7 607.6,389.4 610.0,389.0 612.2,388.6 614.4,388.1 616.4,387.7 618.4,387.2 620.4,386.6 622.5,386.0 624.6,385.3 626.7,384.5 628.8,383.7 630.8,382.9 632.9,381.9 635.0,381.0 637.1,380.0 639.2,379.0 641.2,377.9 643.3,376.8 645.4,375.6 647.5,374.5 649.6,373.4 651.8,372.2 653.9,371.0 656.0,369.9 658.1,368.7 660.0,367.5 661.8,366.4 663.5,365.2 665.2,364.1 666.8,362.9 668.4,361.8 670.0,360.5 671.7,359.2 673.3,357.9 675.0,356.5 676.7,355.0 678.3,353.5 680.0,352.0 681.7,350.4 683.3,348.6 685.0,346.9 686.7,345.1 688.3,343.3 690.0,341.5 691.7,339.7 693.3,338.0 695.0,336.2 696.7,334.5 698.3,332.7 700.0,331.0 701.7,329.3 703.3,327.6 705.0,325.9 706.7,324.2 708.3,322.6 710.0,321.0 711.7,319.5 713.3,318.1 715.0,316.7 716.7,315.3 718.3,313.9 720.0,312.5 721.7,311.1 723.3,309.6 725.0,308.2 726.7,306.8 728.3,305.4 730.0,304.0 731.7,302.6 733.5,301.2 735.3,299.8 737.0,298.5 738.6,297.2 740.0,296.0 741.1,294.9 741.9,294.0 742.6,293.2 743.4,292.3 744.3,291.2 745.5,290.0 747.1,288.5 748.9,286.9 751.0,285.1 753.1,283.3 755.2,281.4 757.2,279.6 759.2,277.8 761.1,276.1 763.1,274.3 765.0,272.6 767.0,270.7 768.9,268.9 770.9,267.0 772.8,265.0 774.8,263.1 776.7,261.1 778.6,259.1 780.6,257.2 782.6,255.3 784.5,253.5 786.5,251.7 788.4,249.9 790.4,248.1 792.3,246.4 794.2,244.7 796.2,243.0 798.1,241.4 800.1,239.8 802.0,238.2 804.0,236.7 806.0,235.3 808.1,233.8 810.3,232.5 812.3,231.2 814.2,230.0 815.8,228.9 817.2,227.9 818.4,227.0 819.4,226.2 820.3,225.4 821.0,224.9 821.6,224.4" stroke="#0A0AA8" stroke-width="2.0" fill="none" stroke-linejoin="round" stroke-linecap="round"/>
<polyline points="5.0,262.0 5.3,261.1 5.8,260.0 6.3,258.6 6.9,257.0 7.5,255.5 8.0,254.0 8.5,252.7 9.0,251.4 9.4,250.1 9.9,248.6 10.4,247.0 11.0,245.0 11.6,242.6 12.3,239.9 12.9,236.9 13.6,233.9 14.3,230.9 15.0,228.0 15.6,225.5 16.3,223.2 16.9,220.9 17.5,218.5 18.2,215.6 19.0,212.0 19.9,207.4 20.8,201.9 21.8,196.0 22.8,190.1 23.9,184.6 25.0,180.0 26.2,176.3 27.4,173.0 28.7,170.2 30.0,167.8 31.3,165.7 32.5,164.0 33.7,162.7 35.0,161.9 36.2,161.5 37.4,161.3 38.3,161.2 39.0,161.0" stroke="#0A0AA8" stroke-width="2.0" fill="none" stroke-linejoin="round" stroke-linecap="round"/>
<polyline points="39.0,161.0 39.8,161.8 40.9,162.8 42.2,164.1 43.6,165.4 44.9,166.6 46.0,167.5 47.0,168.2 48.0,168.7 48.9,169.2 49.8,169.5 50.5,169.8 51.0,170.0" stroke="#E3121A" stroke-width="2.0" fill="none" stroke-linejoin="round" stroke-linecap="round"/>
<polyline points="51.0,170.0 51.9,169.3 53.1,168.4 54.5,167.3 56.0,166.1 57.5,165.0 59.0,164.0 60.5,163.1 62.1,162.1 63.8,161.1 65.3,160.3 66.6,159.5 67.5,159.0" stroke="#0A0AA8" stroke-width="2.0" fill="none" stroke-linejoin="round" stroke-linecap="round"/>
<polyline points="67.5,159.0 68.2,159.5 69.3,160.2 70.5,161.0 71.8,161.9 73.0,162.9 74.0,164.0 74.7,165.2 75.2,166.6 75.7,168.0 76.1,169.5 76.7,171.0 77.5,172.5 78.5,174.0 79.8,175.5 81.1,177.1 82.5,178.5 83.8,179.9 85.0,181.0 86.2,181.9 87.3,182.7 88.5,183.3 89.5,183.8 90.4,184.2 91.0,184.5" stroke="#E3121A" stroke-width="2.0" fill="none" stroke-linejoin="round" stroke-linecap="round"/>
<polyline points="91.0,184.5 91.5,184.5 92.3,184.4 93.2,184.3 94.1,184.3 95.1,184.1 96.0,184.0 96.9,183.8 97.9,183.5 98.8,183.2 99.7,182.9 100.5,182.7 101.0,182.5" stroke="#0A0AA8" stroke-width="2.0" fill="none" stroke-linejoin="round" stroke-linecap="round"/>
<polyline points="101.0,182.5 101.7,182.8 102.7,183.2 103.9,183.7 105.2,184.3 106.4,185.1 107.5,186.0 108.4,187.1 109.3,188.5 110.1,189.9 110.9,191.5 111.7,193.2 112.5,195.0 113.3,196.9 114.1,199.0 114.9,201.2 115.8,203.4 116.6,205.5 117.5,207.5 118.4,209.2 119.4,210.8 120.4,212.3 121.4,213.8 122.4,215.5 123.4,217.3 124.4,219.4 125.4,221.7 126.4,224.0 127.4,226.4 128.4,228.8 129.3,231.0 130.2,233.1 131.0,235.0 131.9,237.0 132.7,238.9 133.5,240.8 134.2,242.7 134.9,244.7 135.5,246.7 136.1,248.8 136.7,250.8 137.3,252.7 138.0,254.5 138.8,256.2 139.5,257.8 140.4,259.3 141.2,260.7 142.1,262.0 143.0,263.2 143.9,264.2 144.9,265.1 145.8,265.9 146.8,266.6 147.8,267.3 148.8,268.0 149.8,268.7 150.8,269.5 151.9,270.2 152.9,270.8 153.8,271.5 154.7,272.0 155.5,272.5 156.3,272.9 157.0,273.2 157.7,273.6 158.2,273.8 158.6,274.0" stroke="#E3121A" stroke-width="2.0" fill="none" stroke-linejoin="round" stroke-linecap="round"/>
<polyline points="158.6,274.0 159.0,274.0 159.6,274.1 160.2,274.2 161.0,274.2 161.7,274.2 162.5,274.0 163.3,273.7 164.1,273.3 164.9,272.8 165.7,272.2 166.6,271.6 167.4,271.0 168.2,270.4 169.1,269.6 169.9,268.9 170.7,268.1 171.5,267.5 172.3,267.0 173.1,266.7 173.8,266.5 174.6,266.4 175.2,266.3 175.8,266.3 176.2,266.2" stroke="#0A0AA8" stroke-width="2.0" fill="none" stroke-linejoin="round" stroke-linecap="round"/>
<polyline points="176.2,266.2 176.6,266.2 177.1,266.2 177.7,266.2 178.4,266.3 179.2,266.6 180.0,267.0 180.9,267.7 181.8,268.5 182.8,269.4 183.9,270.5 184.9,271.7 185.9,273.0 186.9,274.4 187.9,276.0 188.9,277.6 189.8,279.3 190.8,281.1 191.8,282.8 192.8,284.6 193.8,286.4 194.8,288.3 195.7,290.1 196.7,291.9 197.7,293.5 198.7,295.0 199.6,296.4 200.6,297.7 201.6,298.9 202.5,300.1 203.5,301.3 204.5,302.4 205.4,303.3 206.3,304.3 207.3,305.2 208.3,306.1 209.4,307.2 210.6,308.4 211.9,309.6 213.2,310.9 214.5,312.3 215.9,313.6 217.2,315.0 218.5,316.4 219.8,317.8 221.1,319.3 222.4,320.7 223.7,322.1 225.0,323.5 226.3,324.8 227.5,326.0 228.8,327.2 230.0,328.4 231.3,329.7 232.5,331.0 233.7,332.4 234.9,333.9 236.1,335.4 237.3,337.0 238.6,338.5 240.0,340.0 241.6,341.5 243.2,342.9 245.0,344.3 246.8,345.8 248.4,347.1 250.0,348.5 251.4,349.8 252.8,351.1 254.1,352.3 255.3,353.5 256.4,354.7 257.5,356.0 258.5,357.3 259.4,358.6 260.2,359.9 260.9,361.3 261.7,362.6 262.5,364.0 263.3,365.4 264.1,366.9 264.9,368.3 265.7,369.8 266.6,371.2 267.5,372.5 268.5,373.8 269.6,375.0 270.8,376.2 271.9,377.2 273.0,378.2 274.0,379.0 275.0,379.6 276.0,380.1 276.9,380.4 277.8,380.6 278.5,380.8 279.0,381.0" stroke="#E3121A" stroke-width="2.0" fill="none" stroke-linejoin="round" stroke-linecap="round"/>
<polyline points="279.0,381.0 279.4,381.0 279.9,381.0 280.5,380.9 281.2,380.9 281.9,380.7 282.5,380.5 283.1,380.2 283.6,379.9 284.2,379.4 284.8,378.9 285.4,378.3 286.0,377.5 286.6,376.6 287.3,375.6 287.9,374.5 288.6,373.2 289.3,371.7 290.0,370.0 290.7,368.0 291.5,365.8 292.3,363.4 293.1,360.8 294.0,358.0 295.0,355.0 296.1,351.7 297.3,348.1 298.6,344.2 299.9,340.3 301.2,336.3 302.5,332.5 303.8,328.7 305.1,324.7 306.3,320.7 307.6,316.9 308.8,313.3 310.0,310.0 311.1,307.0 312.1,304.3 313.2,301.8 314.1,299.5 315.1,297.6 316.0,296.0 316.9,294.8 317.9,294.1 318.9,293.6 319.7,293.4 320.5,293.2 321.0,293.0" stroke="#0A0AA8" stroke-width="2.0" fill="none" stroke-linejoin="round" stroke-linecap="round"/>
<polyline points="321.0,293.0 321.5,293.4 322.3,294.0 323.2,294.6 324.1,295.4 325.1,296.4 326.0,297.5 326.8,298.8 327.6,300.2 328.4,301.8 329.2,303.6 330.1,305.5 331.0,307.5 332.0,309.8 333.0,312.3 334.1,314.9 335.2,317.6 336.3,320.1 337.5,322.5 338.7,324.7 339.9,326.8 341.2,328.9 342.5,330.8 343.7,332.5 345.0,334.0 346.2,335.2 347.5,336.1 348.8,336.8 350.0,337.5 351.2,338.2 352.5,339.0 353.8,339.9 355.1,340.9 356.4,341.9 357.7,343.0 358.9,344.0 360.0,345.0 361.0,346.0 361.9,347.0 362.7,348.0 363.5,349.0 364.3,350.0 365.0,351.0 365.7,352.0 366.4,353.0 367.1,354.0 367.7,355.1 368.4,356.2 369.0,357.5 369.6,358.9 370.2,360.5 370.8,362.1 371.4,363.9 371.9,365.6 372.5,367.5 373.1,369.4 373.6,371.4 374.2,373.4 374.8,375.6 375.4,377.7 376.0,380.0 376.6,382.4 377.3,385.0 378.0,387.7 378.6,390.3 379.3,392.8 380.0,395.0 380.6,396.9 381.3,398.7 381.9,400.2 382.5,401.8 383.2,403.3 384.0,405.0 384.9,406.8 385.9,408.8 386.9,410.8 388.0,412.7 389.0,414.5 390.0,416.0 390.9,417.2 391.7,418.2 392.6,419.0 393.4,419.7 394.2,420.4 395.0,421.0 395.9,421.7 396.9,422.3 397.8,422.8 398.7,423.3 399.5,423.7 400.0,424.0" stroke="#E3121A" stroke-width="2.0" fill="none" stroke-linejoin="round" stroke-linecap="round"/>
<polyline points="400.0,424.0 400.5,423.9 401.3,423.8 402.2,423.7 403.1,423.4 404.1,423.1 405.0,422.5 405.8,421.7 406.7,420.7 407.5,419.5 408.3,418.3 409.2,417.1 410.0,416.0 410.8,415.0 411.7,413.9 412.5,412.9 413.3,411.9 414.2,410.9 415.0,410.0 415.8,409.1 416.7,408.4 417.5,407.6 418.3,406.8 419.2,406.0 420.0,405.0 420.8,403.9 421.7,402.7 422.5,401.4 423.3,400.1 424.2,398.8 425.0,397.5 425.8,396.2 426.7,394.9 427.5,393.7 428.3,392.4 429.2,391.2 430.0,390.0 430.8,388.9 431.7,387.9 432.5,386.8 433.3,385.9 434.2,384.9 435.0,384.0 435.8,383.1 436.6,382.2 437.4,381.4 438.3,380.6 439.1,379.8 440.0,379.0 441.0,378.2 442.1,377.5 443.2,376.8 444.3,376.1 445.2,375.5 446.0,375.0 446.6,374.6 447.0,374.3 447.4,374.0 447.6,373.8 447.8,373.6 448.0,373.5" stroke="#0A0AA8" stroke-width="2.0" fill="none" stroke-linejoin="round" stroke-linecap="round"/>
<polyline points="448.0,373.5 448.1,373.5 448.3,373.5 448.5,373.6 448.8,373.6 449.3,373.8 450.0,374.0 451.0,374.4 452.3,374.8 453.7,375.3 455.2,375.9 456.7,376.5 458.0,377.0 459.2,377.5 460.4,378.1 461.6,378.7 462.7,379.2 463.8,379.6 465.0,380.0 466.2,380.2 467.6,380.4 468.9,380.4 470.2,380.5 471.2,380.5 472.0,380.5" stroke="#E3121A" stroke-width="2.0" fill="none" stroke-linejoin="round" stroke-linecap="round"/>
<polyline points="472.0,380.5 472.4,380.3 473.0,380.1 473.8,379.8 474.5,379.4 475.3,379.0 476.0,378.5 476.7,377.9 477.3,377.2 477.9,376.5 478.6,375.7 479.3,374.9 480.0,374.0 480.8,373.1 481.6,372.0 482.4,371.0 483.3,369.9 484.2,368.9 485.0,368.0 485.9,367.2 486.7,366.4 487.6,365.7 488.5,365.1 489.3,364.5 490.0,364.0 490.7,363.6 491.3,363.3 491.8,363.0 492.3,362.8 492.7,362.6 493.0,362.5" stroke="#0A0AA8" stroke-width="2.0" fill="none" stroke-linejoin="round" stroke-linecap="round"/>
<polyline points="493.0,362.5 493.5,362.5 494.2,362.4 495.0,362.3 495.8,362.2 496.7,362.3 497.5,362.5 498.2,362.8 499.0,363.1 499.7,363.6 500.5,364.1 501.2,364.9 502.0,366.0 502.8,367.4 503.6,369.0 504.4,370.9 505.3,372.9 506.1,375.0 507.0,377.0 507.8,379.0 508.6,381.0 509.4,383.1 510.3,385.3 511.3,387.5 512.5,390.0 513.9,392.7 515.5,395.8 517.2,398.9 519.0,402.1 520.8,405.0 522.5,407.5 524.2,409.6 525.9,411.4 527.7,413.0 529.4,414.4 531.0,415.9 532.5,417.5 533.9,419.2 535.1,420.8 536.2,422.5 537.4,424.2 538.6,425.8 540.0,427.5 541.6,429.3 543.3,431.1 545.2,433.0 546.9,434.7 548.6,436.3 550.0,437.5 551.2,438.4 552.2,439.0 553.1,439.4 553.9,439.6 554.5,439.8 555.0,440.0" stroke="#E3121A" stroke-width="2.0" fill="none" stroke-linejoin="round" stroke-linecap="round"/>
<polyline points="555.0,440.0 555.5,440.0 556.3,440.0 557.2,440.1 558.1,440.0 559.1,439.6 560.0,439.0 560.8,438.0 561.7,436.8 562.5,435.4 563.3,433.7 564.2,431.9 565.0,430.0 565.8,427.9 566.7,425.5 567.6,423.0 568.4,420.4 569.2,417.7 570.0,415.0 570.7,412.2 571.4,409.4 572.1,406.4 572.7,403.4 573.4,400.4 574.0,397.5 574.6,394.6 575.1,391.6 575.7,388.6 576.2,385.6 576.8,382.8 577.5,380.0 578.2,377.3 579.1,374.5 579.9,371.8 580.8,369.2 581.6,367.0 582.5,365.0 583.4,363.4 584.2,362.2 585.1,361.2 585.9,360.3 586.8,359.6 587.5,359.0 588.2,358.5 588.9,358.1 589.6,357.9 590.1,357.7 590.6,357.6 591.0,357.5" stroke="#0A0AA8" stroke-width="2.0" fill="none" stroke-linejoin="round" stroke-linecap="round"/>
<polyline points="591.0,357.5 591.5,357.6 592.2,357.7 593.1,357.9 594.0,358.1 595.0,358.5 596.0,359.0 597.0,359.7 597.9,360.6 598.9,361.5 600.0,362.6 601.2,363.8 602.5,365.0 604.0,366.3 605.6,367.8 607.3,369.3 609.0,370.9 610.8,372.5 612.5,374.0 614.2,375.5 615.8,376.9 617.5,378.4 619.2,379.8 620.8,381.2 622.5,382.5 624.2,383.7 625.9,384.8 627.7,385.9 629.4,386.9 631.0,388.0 632.5,389.0 633.9,390.0 635.2,391.0 636.4,391.9 637.6,392.9 638.8,393.9 640.0,395.0 641.3,396.2 642.6,397.5 643.9,398.9 645.1,400.2 646.4,401.4 647.5,402.5 648.6,403.4 649.6,404.2 650.5,404.9 651.4,405.5 652.3,406.0 653.0,406.5 653.7,406.9 654.3,407.1 654.8,407.2 655.3,407.4 655.7,407.4 656.0,407.5" stroke="#E3121A" stroke-width="2.0" fill="none" stroke-linejoin="round" stroke-linecap="round"/>
<polyline points="656.0,407.5 656.4,407.4 657.0,407.2 657.7,407.1 658.4,406.8 659.2,406.5 660.0,406.0 660.8,405.4 661.6,404.8 662.4,404.1 663.3,403.2 664.2,402.2 665.0,401.0 665.8,399.5 666.7,397.8 667.5,396.0 668.3,394.0 669.2,392.0 670.0,390.0 670.8,388.0 671.7,386.0 672.5,383.9 673.3,381.8 674.2,379.7 675.0,377.5 675.8,375.3 676.7,373.2 677.5,371.0 678.3,368.7 679.2,366.4 680.0,364.0 680.8,361.5 681.7,358.9 682.5,356.3 683.3,353.6 684.2,350.8 685.0,348.0 685.8,345.1 686.7,342.0 687.6,338.9 688.4,335.9 689.2,332.8 690.0,330.0 690.7,327.3 691.4,324.9 692.1,322.4 692.7,320.0 693.3,317.6 694.0,315.0 694.7,312.2 695.4,309.1 696.0,306.1 696.7,303.1 697.4,300.3 698.0,298.0 698.6,296.2 699.2,294.7 699.8,293.5 700.4,292.4 701.0,291.3 701.5,290.0 702.0,288.5 702.5,286.8 703.0,285.1 703.5,283.5 704.0,281.9 704.5,280.6 705.0,279.5 705.5,278.5 706.0,277.6 706.4,276.9 706.9,276.3 707.4,275.7 707.9,275.3 708.5,275.0 709.0,274.7 709.5,274.6 710.0,274.5 710.3,274.4" stroke="#0A0AA8" stroke-width="2.0" fill="none" stroke-linejoin="round" stroke-linecap="round"/>
<polyline points="710.3,274.4 710.7,274.5 711.3,274.6 712.0,274.7 712.8,275.0 713.5,275.3 714.2,275.7 714.8,276.3 715.4,276.9 716.0,277.6 716.6,278.5 717.3,279.5 718.0,280.6 718.7,281.9 719.4,283.3 720.1,284.8 721.0,286.5 721.9,288.2 723.0,290.0 724.3,291.9 725.9,293.8 727.6,295.9 729.3,298.0 731.0,300.2 732.5,302.5 733.9,304.9 735.2,307.6 736.5,310.2 737.7,312.9 738.9,315.3 740.0,317.5 741.1,319.3 742.1,321.0 743.2,322.4 744.1,323.7 745.1,324.9 746.0,326.0 746.9,327.0 747.9,328.0 748.9,328.8 749.7,329.5 750.5,330.1 751.0,330.5" stroke="#E3121A" stroke-width="2.0" fill="none" stroke-linejoin="round" stroke-linecap="round"/>
<polyline points="751.0,330.5 751.4,330.4 752.0,330.4 752.7,330.3 753.4,330.1 754.2,329.7 755.0,329.0 755.8,328.0 756.6,326.7 757.4,325.2 758.3,323.5 759.2,321.8 760.0,320.0 760.9,318.2 761.7,316.2 762.6,314.2 763.5,312.0 764.3,309.8 765.0,307.5 765.6,305.1 766.2,302.5 766.6,299.9 767.1,297.3 767.5,294.6 768.0,292.0 768.5,289.4 769.0,286.9 769.5,284.4 769.9,281.8 770.4,279.3 770.9,276.7 771.4,274.1 771.9,271.5 772.3,268.9 772.8,266.2 773.3,263.6 773.8,261.0 774.3,258.4 774.7,255.9 775.2,253.4 775.7,250.8 776.2,248.2 776.7,245.5 777.3,242.6 777.9,239.6 778.5,236.6 779.2,233.6 779.9,230.6 780.6,227.9 781.4,225.3 782.2,222.9 783.0,220.6 783.8,218.3 784.7,216.2 785.5,214.2 786.3,212.3 787.1,210.6 787.9,209.0 788.7,207.5 789.5,206.0 790.4,204.5 791.3,203.0 792.3,201.6 793.3,200.2 794.3,198.9 795.3,197.7 796.2,196.6 797.2,195.6 798.2,194.7 799.2,193.8 800.2,193.1 801.2,192.4 802.1,191.8 803.0,191.3 804.0,190.9 804.9,190.5 805.8,190.2 806.5,190.0 807.0,189.8" stroke="#0A0AA8" stroke-width="2.0" fill="none" stroke-linejoin="round" stroke-linecap="round"/>
<path d="M5.5 242.0V256.7M6.5 242.4V256.9M7.5 243.8V256.2M8.5 242.6V258.8M9.5 246.7V258.2M10.5 243.6V257.8M11.5 243.4V258.8M12.5 242.9V259.1M13.5 245.5V257.9M14.5 238.6V258.2M15.5 241.2V255.1M16.5 244.1V250.5M17.5 247.1V254.3M18.5 239.3V256.9M19.5 238.4V249.4M20.5 213.4V246.8M21.5 194.2V242.7M22.5 170.6V215.5M23.5 163.7V195.1M24.5 133.8V171.7M25.5 134.0V148.1M26.5 138.1V153.8M27.5 151.7V160.3M28.5 148.5V154.9M29.5 138.7V154.8M30.5 140.2V148.2M31.5 143.4V155.6M32.5 146.9V158.1M33.5 145.0V158.8M34.5 141.8V159.9M35.5 147.8V159.9M36.5 150.0V161.2M37.5 146.0V161.5M38.5 144.7V161.2M39.5 146.5V161.4M40.5 151.6V164.0M41.5 149.8V163.7M42.5 147.4V159.2M43.5 141.3V156.8M44.5 141.3V150.5M45.5 139.6V170.3M46.5 149.1V175.4M47.5 169.1V199.9M48.5 189.2V204.1M49.5 196.6V216.6M50.5 206.0V219.3M51.5 194.1V219.8M52.5 177.5V212.5M53.5 165.0V194.6M54.5 170.6V183.5M55.5 171.0V182.0M56.5 169.2V184.5M57.5 169.4V181.6M58.5 163.0V173.5M59.5 157.1V171.9M60.5 159.3V166.2M61.5 147.6V162.7M62.5 145.0V161.0M63.5 143.7V159.3M64.5 138.1V153.6M65.5 123.7V153.4M66.5 121.1V137.6M67.5 119.2V132.6M68.5 119.6V132.3M69.5 114.5V130.0M70.5 114.1V123.9M71.5 118.7V138.3M72.5 127.5V138.2M73.5 136.6V157.1M74.5 145.1V166.4M75.5 154.2V178.1M76.5 165.2V191.6M77.5 176.6V190.1M78.5 178.5V193.2M79.5 177.3V188.5M80.5 178.6V191.0M81.5 177.9V196.6M82.5 186.4V195.2M83.5 189.0V200.4M84.5 186.3V202.6M85.5 188.0V204.1M86.5 189.9V203.0M87.5 191.6V204.3M88.5 197.7V206.3M89.5 198.2V213.6M90.5 204.5V217.0M91.5 207.0V224.4M92.5 218.9V233.1M93.5 220.7V239.0M94.5 193.1V236.9M95.5 158.6V201.8M96.5 147.3V195.4M97.5 148.1V164.7M98.5 150.4V165.4M99.5 156.8V171.3M100.5 159.8V175.5M101.5 156.0V172.4M102.5 155.4V166.8M103.5 152.9V168.1M104.5 156.3V170.0M105.5 158.4V175.4M106.5 162.2V174.3M107.5 167.7V179.5M108.5 164.0V178.5M109.5 171.0V181.3M110.5 174.0V183.9M111.5 181.8V191.2M112.5 180.9V194.2M113.5 188.9V205.4M114.5 202.3V209.5M115.5 202.3V214.5M116.5 205.8V220.0M117.5 207.5V224.2M118.5 213.8V249.6M119.5 228.0V249.6M120.5 220.5V238.0M121.5 207.9V235.3M122.5 211.8V222.3M123.5 197.6V205.3M124.5 193.2V205.4M125.5 191.4V210.2M126.5 198.7V211.1M127.5 195.8V206.2M128.5 202.6V215.7M129.5 207.5V216.9M130.5 208.4V222.2M131.5 214.7V231.2M132.5 229.2V241.7M133.5 228.9V248.7M134.5 245.2V261.4M135.5 246.3V267.0M136.5 269.1V288.0M137.5 269.0V297.4M138.5 282.1V292.1M139.5 274.1V287.1M140.5 273.3V284.5M141.5 263.1V277.6M142.5 262.7V284.2M143.5 271.5V287.7M144.5 261.5V286.7M145.5 251.9V275.0M146.5 252.4V264.4M147.5 243.7V255.8M148.5 244.1V255.2M149.5 254.4V271.2M150.5 259.6V275.7M151.5 263.1V279.5M152.5 266.4V277.7M153.5 272.6V283.4M154.5 268.0V287.8M155.5 264.4V274.0M156.5 262.6V272.3M157.5 264.4V275.4M158.5 271.1V280.0M159.5 276.3V291.7M160.5 282.5V300.5M161.5 290.7V307.8M162.5 298.6V311.4M163.5 299.1V309.8M164.5 293.7V308.9M165.5 283.4V297.1M166.5 269.4V295.7M167.5 232.9V284.0M168.5 243.5V272.1M169.5 235.1V250.0M170.5 234.1V253.9M171.5 247.3V267.0M172.5 259.9V267.8M173.5 248.5V262.1M174.5 247.8V256.4M175.5 254.4V264.3M176.5 262.0V269.2M177.5 258.1V267.0M178.5 256.6V268.6M179.5 255.4V270.3M180.5 262.9V270.6M181.5 263.7V275.9M182.5 269.4V280.9M183.5 257.9V278.9M184.5 240.7V264.0M185.5 240.8V260.7M186.5 240.9V256.8M187.5 248.7V268.3M188.5 257.4V270.2M189.5 260.3V269.0M190.5 256.0V275.3M191.5 263.6V286.9M192.5 272.7V286.0M193.5 284.7V301.7M194.5 285.7V293.6M195.5 286.2V298.8M196.5 281.7V296.6M197.5 290.8V296.9M198.5 284.7V300.1M199.5 291.4V299.7M200.5 285.8V298.7M201.5 290.2V299.5M202.5 283.8V292.8M203.5 284.2V298.6M204.5 285.1V299.2M205.5 286.5V300.7M206.5 288.7V305.2M207.5 288.4V308.2M208.5 299.3V310.3M209.5 298.6V314.6M210.5 303.7V312.9M211.5 302.1V320.7M212.5 300.4V318.8M213.5 316.6V329.9M214.5 314.8V340.4M215.5 327.5V345.6M216.5 321.5V345.9M217.5 301.7V335.5M218.5 301.7V316.4M219.5 310.6V323.3M220.5 311.8V328.3M221.5 311.0V330.6M222.5 314.9V324.9M223.5 313.8V328.3M224.5 320.3V327.2M225.5 326.6V339.0M226.5 328.9V341.1M227.5 329.2V336.5M228.5 326.7V339.6M229.5 321.2V329.5M230.5 319.5V332.6M231.5 307.1V329.6M232.5 295.2V321.2M233.5 299.6V309.9M234.5 293.2V310.7M235.5 299.5V307.5M236.5 305.2V320.8M237.5 307.0V319.1M238.5 306.7V337.4M239.5 316.8V348.1M240.5 339.3V363.1M241.5 345.9V365.5M242.5 349.9V362.7M243.5 347.5V358.3M244.5 345.8V361.6M245.5 349.1V355.7M246.5 351.0V362.9M247.5 350.3V358.9M248.5 348.6V355.6M249.5 351.0V362.1M250.5 345.9V362.3M251.5 350.3V361.9M252.5 350.9V359.9M253.5 345.4V357.5M254.5 343.9V352.6M255.5 332.9V346.3M256.5 319.3V334.4M257.5 318.8V334.7M258.5 328.1V335.6M259.5 320.7V331.2M260.5 321.7V332.8M261.5 316.9V335.3M262.5 330.5V349.7M263.5 333.6V356.7M264.5 351.1V395.7M265.5 373.9V396.6M266.5 381.3V394.4M267.5 376.4V393.3M268.5 372.0V381.4M269.5 378.5V387.4M270.5 382.5V391.6M271.5 376.3V388.6M272.5 376.3V391.3M273.5 376.8V390.6M274.5 375.4V388.3M275.5 371.3V386.2M276.5 368.7V379.3M277.5 371.5V384.8M278.5 372.9V386.1M279.5 377.2V386.1M280.5 377.5V397.9M281.5 384.4V405.3M282.5 394.0V403.9M283.5 404.9V415.1M284.5 406.4V415.0M285.5 410.4V431.0M286.5 413.6V436.1M287.5 384.8V436.9M288.5 361.7V410.4M289.5 354.0V373.5M290.5 353.6V360.6M291.5 355.8V363.6M292.5 359.5V367.2M293.5 356.1V371.0M294.5 351.3V360.3M295.5 349.8V363.0M296.5 336.4V356.4M297.5 330.5V345.4M298.5 329.8V341.3M299.5 328.3V342.2M300.5 334.6V341.3M301.5 335.3V344.2M302.5 335.1V348.2M303.5 337.9V350.2M304.5 323.6V350.4M305.5 314.6V343.0M306.5 312.7V325.0M307.5 305.7V322.4M308.5 309.4V322.5M309.5 304.5V318.3M310.5 299.4V315.0M311.5 278.0V309.5M312.5 270.9V295.4M313.5 272.3V280.4M314.5 274.4V287.5M315.5 278.2V293.5M316.5 274.4V287.8M317.5 279.6V288.9M318.5 275.8V284.9M319.5 274.6V283.9M320.5 274.7V290.5M321.5 274.2V282.0M322.5 275.5V288.7M323.5 275.8V285.3M324.5 276.4V292.7M325.5 276.4V292.6M326.5 276.1V285.0M327.5 276.5V294.4M328.5 281.9V304.3M329.5 293.4V311.4M330.5 301.7V314.6M331.5 298.6V314.8M332.5 294.3V310.8M333.5 289.2V304.3M334.5 284.4V301.4M335.5 285.6V323.9M336.5 298.9V315.8M337.5 317.6V336.9M338.5 329.6V341.8M339.5 336.0V345.0M340.5 335.0V347.3M341.5 339.6V349.3M342.5 335.0V343.3M343.5 326.7V348.9M344.5 328.1V335.3M345.5 321.8V336.2M346.5 327.7V338.7M347.5 329.4V340.5M348.5 330.1V340.1M349.5 326.5V342.8M350.5 326.2V341.9M351.5 327.6V341.0M352.5 325.6V342.0M353.5 324.8V338.5M354.5 323.7V339.6M355.5 323.6V331.8M356.5 323.5V333.4M357.5 323.2V340.0M358.5 323.9V339.2M359.5 325.0V339.0M360.5 329.2V339.1M361.5 326.3V341.5M362.5 327.7V347.2M363.5 327.6V347.7M364.5 334.4V346.9M365.5 338.3V350.4M366.5 337.9V348.9M367.5 338.7V358.4M368.5 342.8V356.9M369.5 343.2V371.7M370.5 355.0V375.3M371.5 366.7V378.6M372.5 371.2V385.7M373.5 368.7V382.4M374.5 365.7V380.6M375.5 365.6V377.0M376.5 364.5V386.7M377.5 376.5V407.1M378.5 394.6V411.3M379.5 401.9V425.1M380.5 411.3V426.2M381.5 415.5V429.0M382.5 414.2V431.2M383.5 415.8V424.6M384.5 422.5V432.4M385.5 406.8V425.8M386.5 412.0V421.9M387.5 406.3V418.4M388.5 406.5V416.1M389.5 406.9V422.8M390.5 410.6V421.0M391.5 401.2V417.4M392.5 402.5V416.0M393.5 401.6V415.6M394.5 406.2V416.3M395.5 401.1V415.6M396.5 407.8V418.0M397.5 405.8V419.6M398.5 409.5V423.0M399.5 412.3V436.6M400.5 420.5V436.1M401.5 435.1V453.9M402.5 444.8V462.1M403.5 451.8V466.8M404.5 453.9V466.5M405.5 443.7V461.4M406.5 435.1V451.9M407.5 438.4V447.1M408.5 414.8V442.8M409.5 389.2V415.6M410.5 387.7V416.7M411.5 384.6V395.6M412.5 383.6V393.7M413.5 382.3V403.8M414.5 389.3V411.1M415.5 397.2V410.3M416.5 397.6V410.8M417.5 394.9V409.5M418.5 394.9V407.4M419.5 393.0V411.4M420.5 387.2V401.7M421.5 384.8V400.2M422.5 389.8V399.5M423.5 385.0V404.4M424.5 394.0V413.2M425.5 406.3V418.6M426.5 402.5V419.4M427.5 405.2V417.3M428.5 398.6V412.5M429.5 387.4V408.1M430.5 379.6V401.9M431.5 359.6V391.0M432.5 366.9V377.0M433.5 358.0V373.2M434.5 368.8V387.0M435.5 376.2V384.2M436.5 376.4V390.8M437.5 376.1V389.4M438.5 371.5V381.1M439.5 376.1V384.6M440.5 370.5V382.8M441.5 378.5V385.8M442.5 373.5V382.5M443.5 374.6V386.6M444.5 376.9V383.8M445.5 370.5V380.5M446.5 361.8V377.2M447.5 362.4V372.9M448.5 359.1V369.3M449.5 350.7V365.4M450.5 349.7V362.6M451.5 341.6V354.5M452.5 337.6V351.0M453.5 335.0V351.2M454.5 344.8V359.7M455.5 355.6V373.7M456.5 357.7V390.4M457.5 375.0V390.9M458.5 376.5V386.8M459.5 371.8V388.2M460.5 376.4V383.8M461.5 379.6V399.2M462.5 388.5V399.5M463.5 392.3V405.1M464.5 392.7V406.4M465.5 396.7V406.1M466.5 388.9V407.3M467.5 384.9V401.8M468.5 382.1V390.7M469.5 380.6V397.3M470.5 382.0V393.3M471.5 379.4V396.3M472.5 376.7V392.8M473.5 368.3V382.0M474.5 368.7V383.6M475.5 363.8V382.1M476.5 359.7V372.6M477.5 353.6V371.7M478.5 352.8V368.4M479.5 331.2V366.9M480.5 335.8V354.4M481.5 321.2V342.8M482.5 338.0V354.3M483.5 339.4V363.8M484.5 353.2V371.3M485.5 361.6V370.4M486.5 364.9V379.6M487.5 364.5V377.6M488.5 368.2V384.9M489.5 371.4V388.0M490.5 373.1V386.5M491.5 365.6V377.3M492.5 359.6V374.9M493.5 356.4V372.0M494.5 352.7V368.3M495.5 348.2V367.3M496.5 355.7V365.6M497.5 354.3V370.0M498.5 360.0V372.9M499.5 353.7V372.5M500.5 345.8V367.2M501.5 342.8V350.2M502.5 344.7V354.1M503.5 347.1V356.5M504.5 322.8V344.8M505.5 323.1V349.8M506.5 322.2V347.0M507.5 333.2V345.9M508.5 343.7V355.3M509.5 351.5V371.1M510.5 359.6V371.5M511.5 368.8V379.7M512.5 376.0V390.9M513.5 377.2V391.2M514.5 373.5V382.6M515.5 386.2V402.9M516.5 386.0V398.2M517.5 395.3V410.4M518.5 403.5V412.5M519.5 401.4V416.2M520.5 405.0V414.8M521.5 410.3V425.1M522.5 421.0V435.0M523.5 424.7V440.2M524.5 431.1V444.4M525.5 436.8V446.6M526.5 436.5V446.8M527.5 423.3V442.5M528.5 406.4V423.2M529.5 383.1V424.8M530.5 383.3V410.2M531.5 391.8V400.7M532.5 386.9V400.9M533.5 399.2V411.7M534.5 400.8V414.5M535.5 406.6V414.2M536.5 403.9V414.5M537.5 409.3V419.6M538.5 413.1V426.6M539.5 415.5V429.8M540.5 415.6V430.7M541.5 417.2V431.1M542.5 416.2V432.1M543.5 423.6V430.6M544.5 411.9V424.5M545.5 411.1V426.8M546.5 411.4V427.1M547.5 417.3V424.7M548.5 424.3V440.6M549.5 427.2V450.2M550.5 445.1V456.3M551.5 441.6V456.5M552.5 433.8V451.8M553.5 429.6V443.4M554.5 435.2V456.8M555.5 438.1V464.1M556.5 452.6V465.1M557.5 450.7V463.9M558.5 451.6V459.9M559.5 448.9V459.0M560.5 443.7V452.0M561.5 442.4V456.9M562.5 437.1V453.9M563.5 434.0V450.2M564.5 431.7V445.7M565.5 428.6V444.6M566.5 430.9V439.6M567.5 425.8V440.3M568.5 429.5V449.8M569.5 433.6V447.9M570.5 424.2V449.0M571.5 423.3V442.3M572.5 416.3V431.2M573.5 396.2V420.1M574.5 382.3V405.4M575.5 382.2V396.4M576.5 382.5V410.8M577.5 400.4V410.7M578.5 373.2V414.6M579.5 349.8V392.7M580.5 336.2V358.7M581.5 338.3V353.1M582.5 329.6V346.5M583.5 329.2V346.0M584.5 328.2V344.4M585.5 333.6V346.6M586.5 339.3V349.7M587.5 336.5V350.3M588.5 334.8V349.4M589.5 331.7V353.5M590.5 339.9V355.5M591.5 332.4V347.8M592.5 331.3V347.5M593.5 317.0V334.5M594.5 313.6V356.0M595.5 335.5V363.6M596.5 352.9V373.9M597.5 356.3V372.7M598.5 356.0V377.2M599.5 351.6V360.7M600.5 345.7V368.6M601.5 356.1V369.6M602.5 363.4V372.6M603.5 366.1V378.7M604.5 364.8V378.3M605.5 360.8V377.4M606.5 367.6V384.3M607.5 367.1V381.2M608.5 368.5V382.4M609.5 372.7V384.3M610.5 372.3V383.0M611.5 374.2V384.2M612.5 363.7V375.9M613.5 358.2V373.2M614.5 353.2V371.1M615.5 350.6V364.2M616.5 350.9V373.0M617.5 356.0V372.6M618.5 368.4V389.6M619.5 378.7V395.8M620.5 384.9V397.8M621.5 391.2V398.3M622.5 382.2V395.9M623.5 375.0V389.7M624.5 369.7V379.7M625.5 366.2V379.9M626.5 366.1V375.1M627.5 370.6V386.5M628.5 380.7V390.8M629.5 377.4V390.7M630.5 380.9V391.7M631.5 379.8V392.0M632.5 384.1V391.4M633.5 379.2V391.8M634.5 381.7V395.5M635.5 387.3V400.2M636.5 384.9V401.9M637.5 386.1V401.3M638.5 383.3V393.2M639.5 381.1V399.6M640.5 382.4V397.8M641.5 386.6V408.4M642.5 395.9V412.4M643.5 402.2V417.7M644.5 406.5V416.8M645.5 410.8V423.2M646.5 408.7V423.7M647.5 394.2V413.7M648.5 394.3V410.4M649.5 398.3V411.4M650.5 401.4V410.0M651.5 404.9V419.2M652.5 403.4V413.5M653.5 409.0V420.4M654.5 408.7V417.5M655.5 407.8V422.7M656.5 408.9V427.2M657.5 411.4V422.3M658.5 411.5V424.8M659.5 416.0V428.6M660.5 419.1V431.1M661.5 420.2V433.2M662.5 420.3V429.8M663.5 425.1V435.6M664.5 406.0V434.5M665.5 388.9V423.8M666.5 390.0V398.4M667.5 387.3V402.2M668.5 398.4V407.5M669.5 375.7V412.7M670.5 338.0V413.2M671.5 337.4V377.4M672.5 344.9V376.2M673.5 354.7V384.1M674.5 360.5V383.7M675.5 366.0V378.8M676.5 352.8V364.2M677.5 361.3V375.8M678.5 362.5V381.1M679.5 368.5V380.2M680.5 369.4V382.7M681.5 362.4V374.1M682.5 355.4V372.4M683.5 350.7V361.9M684.5 348.8V362.5M685.5 351.5V364.6M686.5 354.3V367.6M687.5 352.5V365.2M688.5 339.6V365.9M689.5 334.0V353.5M690.5 332.7V345.4M691.5 337.4V351.0M692.5 341.8V356.4M693.5 339.9V359.0M694.5 304.9V357.6M695.5 283.2V342.0M696.5 262.4V292.1M697.5 256.7V286.6M698.5 256.5V272.8M699.5 256.6V265.8M700.5 257.4V269.5M701.5 259.4V270.8M702.5 258.8V275.4M703.5 253.8V269.9M704.5 251.7V266.9M705.5 248.5V264.6M706.5 247.5V263.4M707.5 247.3V256.1M708.5 247.7V259.2M709.5 242.1V256.3M710.5 237.2V249.6M711.5 234.1V248.6M712.5 234.9V247.6M713.5 236.8V264.5M714.5 258.4V270.2M715.5 267.2V278.7M716.5 265.7V282.6M717.5 270.9V283.3M718.5 268.5V277.8M719.5 267.9V281.5M720.5 278.8V288.9M721.5 288.0V299.1M722.5 286.3V298.4M723.5 286.5V299.1M724.5 284.8V294.7M725.5 286.2V300.0M726.5 284.0V300.8M727.5 293.9V302.1M728.5 292.0V303.6M729.5 294.1V303.5M730.5 292.0V310.3M731.5 295.6V311.7M732.5 296.4V313.0M733.5 296.0V313.9M734.5 305.1V314.7M735.5 307.6V317.8M736.5 303.1V314.9M737.5 304.8V321.6M738.5 305.5V323.7M739.5 305.8V318.4M740.5 305.7V320.3M741.5 313.0V331.7M742.5 322.0V333.5M743.5 310.3V328.8M744.5 305.9V320.1M745.5 306.1V325.6M746.5 311.3V336.7M747.5 323.3V347.8M748.5 333.0V344.8M749.5 334.4V349.7M750.5 337.2V353.8M751.5 335.7V351.8M752.5 337.3V349.6M753.5 337.1V352.3M754.5 333.0V348.0M755.5 330.2V346.4M756.5 330.4V337.6M757.5 328.4V340.7M758.5 321.1V337.9M759.5 323.4V332.1M760.5 316.2V326.3M761.5 316.0V332.3M762.5 319.3V331.9M763.5 325.9V336.9M764.5 329.5V344.0M765.5 334.7V341.7M766.5 329.0V349.5M767.5 323.8V337.6M768.5 316.7V333.1M769.5 300.7V317.4M770.5 251.3V331.2M771.5 232.4V288.5M772.5 213.1V239.8M773.5 209.3V236.8M774.5 213.7V222.3M775.5 210.1V225.2M776.5 203.5V218.5M777.5 201.5V218.4M778.5 201.5V215.5M779.5 209.3V224.1M780.5 211.9V228.7M781.5 217.2V226.6M782.5 215.9V235.9M783.5 208.9V228.6M784.5 210.0V224.2M785.5 221.5V244.9M786.5 235.8V245.2M787.5 224.8V244.8M788.5 222.4V239.3M789.5 216.2V232.2M790.5 212.7V226.1M791.5 209.2V220.6M792.5 205.3V214.8M793.5 207.1V221.2M794.5 211.9V239.0M795.5 183.6V239.0M796.5 172.7V202.7M797.5 173.3V186.1M798.5 180.5V187.3M799.5 173.7V190.9M800.5 174.2V187.7M801.5 171.9V186.9M802.5 175.7V183.3M803.5 170.7V184.0M804.5 170.5V179.9M805.5 169.3V183.0M806.5 166.4V180.9M807.5 169.5V182.8M808.5 164.5V193.6M809.5 171.5V194.2M810.5 167.1V181.7M811.5 167.8V194.7M812.5 174.2V216.4M813.5 193.4V222.5M814.5 206.9V222.2M815.5 202.4V212.8M816.5 201.6V210.2M817.5 192.8V201.9M818.5 197.2V209.7M819.5 198.4V212.1M820.5 197.7V213.4M821.5 204.7V216.8" stroke="#000" stroke-width="1.15" fill="none"/>
<polyline points="5.0,255.0 10.0,245.0 15.0,257.0 20.0,245.0 22.5,195.0 25.0,135.0 27.5,152.0 30.0,142.0 32.5,155.0 37.5,157.0 41.0,160.0 45.0,140.0 47.5,190.0 51.0,219.0 54.0,170.0 57.5,177.0 61.0,155.0 65.0,152.0 66.0,127.0 70.0,116.0 72.5,137.0 75.0,160.0 77.5,190.0 82.5,187.0 87.5,195.0 91.0,212.0 94.0,236.0 95.5,195.0 97.0,149.0 100.0,167.0 103.0,157.0 106.0,167.0 110.0,170.0 112.5,190.0 114.6,205.6 118.5,219.3 119.5,246.6 122.5,209.5 125.4,194.0 128.3,203.7 131.2,219.3 134.2,244.7 136.1,264.2 138.0,295.5 140.0,279.8 142.0,264.2 143.4,287.7 145.9,258.4 147.3,243.7 149.8,268.0 151.8,274.0 153.7,281.8 155.7,261.3 157.6,272.0 159.6,283.8 161.5,299.4 162.9,311.0 165.4,295.5 167.4,274.0 168.4,238.8 169.9,234.9 171.3,268.0 174.2,250.5 177.1,266.2 180.0,261.3 183.0,277.9 185.9,240.8 187.9,268.0 190.2,256.4 191.8,277.9 193.8,299.4 196.7,291.6 199.6,297.4 202.5,285.7 206.4,291.6 208.4,307.2 210.4,315.0 212.3,303.3 214.2,326.7 215.2,336.5 216.0,345.0 218.2,301.3 220.1,322.8 222.1,313.0 225.0,330.6 227.0,340.0 230.9,326.7 233.8,293.5 235.7,311.0 237.7,307.2 239.6,332.6 240.5,347.0 241.0,362.5 245.0,358.0 251.0,361.0 254.0,350.0 256.0,335.0 257.2,320.9 259.2,330.6 260.5,318.0 262.5,335.0 264.0,355.0 265.0,395.0 267.0,385.0 269.0,380.0 272.5,390.0 275.0,380.0 277.5,370.0 280.0,380.0 282.0,402.5 285.0,412.5 286.5,436.0 288.0,395.0 290.0,355.0 292.5,367.5 294.0,362.5 297.5,337.0 298.0,330.6 301.0,335.0 304.0,350.0 306.0,315.0 310.0,315.0 313.0,272.5 315.0,287.5 317.5,276.0 322.5,280.0 327.0,277.5 329.0,300.0 331.0,312.5 335.0,286.0 336.0,315.0 339.0,340.0 342.5,347.5 344.5,322.5 347.5,342.5 352.5,332.5 355.0,325.0 360.0,330.0 365.0,340.0 369.0,345.0 370.0,365.0 371.0,375.0 374.0,375.0 376.0,367.5 377.5,395.0 380.0,422.5 384.0,431.0 386.0,407.5 390.0,416.0 395.0,402.5 399.0,415.0 401.0,442.5 404.0,465.0 406.0,445.0 409.0,437.5 410.0,392.5 413.0,384.0 415.0,410.0 419.0,401.0 422.5,386.0 426.0,417.5 429.0,405.0 431.0,385.0 432.5,361.0 436.0,390.0 440.0,372.5 442.5,385.0 447.5,367.5 450.0,355.0 454.0,336.0 456.0,365.0 457.5,390.0 460.0,377.5 462.5,397.5 465.0,405.0 467.5,390.0 472.5,390.0 475.0,370.0 479.0,365.0 481.0,322.5 484.0,360.0 486.0,372.5 490.0,385.0 492.5,367.5 496.0,352.5 499.0,372.5 501.0,347.5 504.0,360.0 505.5,324.0 507.5,345.0 510.0,365.0 512.5,390.0 515.0,375.0 516.0,400.0 520.0,407.5 522.5,430.0 526.0,445.0 529.0,420.0 530.5,385.0 534.0,410.0 536.0,407.5 539.0,425.0 542.5,430.0 545.5,412.5 549.0,435.0 551.0,455.0 554.0,430.0 556.0,464.0 559.0,452.5 561.0,455.0 564.0,437.5 567.5,430.0 570.0,447.5 572.5,420.0 575.0,382.5 577.5,410.0 580.0,365.0 581.0,337.5 584.0,330.0 587.5,347.5 591.0,352.5 594.0,314.0 595.0,350.0 597.5,372.5 599.5,347.5 602.5,377.5 606.0,370.0 610.0,382.5 614.0,362.5 616.0,352.5 619.0,385.0 621.0,397.5 626.0,367.5 629.0,390.0 634.0,385.0 637.5,395.0 640.0,382.5 642.5,407.5 646.0,422.5 647.5,395.0 652.5,417.5 657.5,412.5 661.0,429.0 664.0,434.0 666.0,390.0 670.0,412.5 671.0,339.0 674.0,382.5 676.0,360.0 680.0,382.5 684.0,352.5 687.5,365.0 690.0,335.0 694.0,357.5 695.5,305.0 697.0,275.0 698.6,257.0 702.5,267.0 706.4,257.0 709.3,249.4 712.3,235.7 714.2,261.0 717.0,280.6 720.0,274.8 722.0,290.0 722.5,297.5 727.5,295.0 732.5,302.5 736.0,315.0 740.0,307.5 742.5,327.5 745.0,307.5 747.5,335.0 749.0,354.0 752.5,344.0 757.5,337.5 761.0,317.5 764.0,332.5 766.0,347.5 768.0,325.0 770.0,330.0 771.2,257.0 772.8,227.9 773.8,209.3 775.7,218.0 777.7,202.5 779.6,222.0 782.6,227.9 784.5,210.3 786.5,243.5 788.4,226.0 791.4,218.0 793.3,208.4 794.9,241.6 796.2,188.8 797.2,174.2 799.2,183.0 801.1,174.2 803.1,179.0 806.0,175.0 808.0,165.4 808.9,194.7 810.9,167.3 811.9,182.0 812.9,202.5 813.8,222.0 815.8,204.5 818.7,198.6 819.7,210.3 821.2,207.4 821.6,216.0" stroke="#000" stroke-width="1.0" fill="none" stroke-linejoin="round"/>
<polyline points="807.0,189.8 810.9,191.8 815.8,194.7 820.7,198.6" stroke="#E3121A" stroke-width="2.2" fill="none" stroke-dasharray="3 1.6"/>
</g>
<text x="480" y="382" class="ax" fill="#9a9a9a" style="font-size:9.5px" textLength="39" lengthAdjust="spacingAndGlyphs">1:10:47</text>
<rect x="4.5" y="96.5" width="975" height="379" fill="none" stroke="#000" stroke-width="1"/>
<rect x="4.5" y="477.5" width="975" height="197" fill="none" stroke="#000" stroke-width="1"/>
<rect x="5" y="560" width="975" height="1" fill="#C8283C"/>
<rect x="5" y="581" width="975" height="2" fill="#006400"/>
<polyline points="5.0,574.5 6.6,575.8 8.8,577.5 11.5,579.6 14.4,581.9 17.4,584.4 20.5,586.8 23.6,589.3 27.0,592.0 30.4,594.9 34.0,597.7 37.5,600.5 41.0,603.2 44.4,605.7 47.8,608.2 51.2,610.7 54.7,613.0 58.1,615.3 61.5,617.6 64.9,619.8 68.3,621.9 71.8,624.0 75.2,626.0 78.6,628.0 82.0,629.9 85.4,631.7 88.8,633.5 92.2,635.2 95.7,636.8 99.1,638.4 102.5,640.0 105.9,641.6 109.3,643.2 112.7,644.7 116.2,646.2 119.6,647.6 123.0,649.0 126.4,650.3 129.9,651.5 133.3,652.6 136.7,653.7 140.2,654.7 143.6,655.7 147.0,656.6 150.4,657.5 153.8,658.4 157.2,659.2 160.6,659.9 164.0,660.6 167.4,661.2 170.9,661.7 174.3,662.2 177.7,662.7 181.2,663.0 184.6,663.4 188.2,663.7 191.9,664.0 195.6,664.2 199.1,664.4 202.3,664.6 205.0,664.7 207.0,664.8 208.4,664.8 209.4,664.8 210.4,664.8 211.6,664.8 213.3,664.7 215.6,664.6 218.2,664.5 221.0,664.4 223.9,664.3 226.9,664.1 229.7,663.9 232.4,663.7 235.0,663.4 237.6,663.1 240.3,662.8 243.0,662.4 246.0,661.9 249.2,661.3 252.6,660.7 256.0,660.0 259.6,659.3 263.1,658.5 266.6,657.8 270.0,656.9 273.4,656.1 276.9,655.2 280.3,654.3 283.7,653.4 287.1,652.4 290.5,651.4 293.9,650.3 297.4,649.1 300.8,648.0 304.2,646.7 307.6,645.5 311.0,644.2 314.4,642.9 317.9,641.5 321.3,640.1 324.7,638.7 328.1,637.2 331.5,635.8 334.9,634.4 338.4,633.0 341.8,631.5 345.2,630.0 348.6,628.5 352.0,626.9 355.4,625.3 358.9,623.7 362.3,622.0 365.7,620.4 369.1,618.8 372.6,617.2 376.3,615.5 380.0,613.8 383.5,612.2 386.8,610.7 389.6,609.4 391.8,608.4 393.4,607.6 394.8,606.9 396.2,606.3 397.8,605.5 400.0,604.4 402.8,603.0 406.1,601.5 409.6,599.7 413.3,598.0 417.0,596.2 420.5,594.5 423.9,592.9 427.3,591.3 430.8,589.7 434.2,588.1 437.6,586.4 441.0,584.8 444.4,583.0 447.8,581.1 451.2,579.3 454.7,577.4 458.1,575.5 461.5,573.7 464.9,571.9 468.3,570.2 471.8,568.5 475.2,566.8 478.6,565.1 482.0,563.4 485.4,561.6 488.8,559.8 492.2,558.0 495.7,556.3 499.1,554.5 502.5,552.8 505.9,551.1 509.3,549.4 512.7,547.8 516.2,546.2 519.6,544.6 523.0,542.9 526.4,541.2 529.9,539.5 533.3,537.8 536.7,536.0 540.2,534.3 543.6,532.6 547.0,530.9 550.4,529.2 553.8,527.4 557.2,525.7 560.6,524.1 564.0,522.4 567.4,520.8 570.9,519.2 574.3,517.6 577.7,516.0 581.2,514.5 584.6,513.0 588.0,511.6 591.4,510.1 594.8,508.8 598.2,507.4 601.6,506.1 605.0,504.8 608.4,503.5 611.9,502.3 615.3,501.1 618.7,500.0 622.2,498.9 625.6,497.8 629.0,496.8 632.4,495.8 635.8,494.9 639.2,494.1 642.6,493.3 646.0,492.5 649.4,491.8 652.9,491.1 656.3,490.4 659.7,489.8 663.2,489.3 666.6,488.8 670.1,488.4 673.7,488.0 677.4,487.7 680.9,487.5 684.2,487.3 687.1,487.1 689.6,486.9 691.8,486.8 693.8,486.8 695.6,486.7 697.4,486.7 699.4,486.7 701.4,486.7 703.3,486.7 705.3,486.8 707.3,486.8 709.4,486.9 711.7,487.1 714.1,487.3 716.7,487.5 719.4,487.8 722.2,488.1 725.1,488.4 728.1,488.8 731.3,489.2 734.6,489.6 738.1,490.1 741.6,490.6 745.1,491.1 748.6,491.6 752.0,492.2 755.4,492.8 758.9,493.4 762.3,494.0 765.7,494.6 769.1,495.3 772.5,496.0 775.9,496.6 779.3,497.3 782.8,498.0 786.2,498.7 789.6,499.4 793.1,500.1 796.8,500.9 800.4,501.7 804.0,502.5 807.3,503.2 810.2,503.9 812.8,504.5 815.2,505.2 817.4,505.7 819.3,506.2 820.8,506.7 822.0,507.0" stroke="#D21414" stroke-width="2.2" fill="none" stroke-linejoin="round"/>
<polyline points="5.0,513.0 5.8,511.1 6.9,508.4 8.1,505.3 9.5,502.0 10.9,499.0 12.3,496.5 13.6,494.6 15.0,492.9 16.5,491.5 17.9,490.3 19.2,489.3 20.5,488.4 21.6,487.7 22.6,487.3 23.6,487.0 24.6,486.9 25.6,486.9 26.7,487.0 28.0,487.2 29.3,487.5 30.7,488.0 32.1,488.6 33.5,489.4 34.9,490.4 36.3,491.6 37.6,493.0 38.9,494.6 40.3,496.4 41.6,498.4 43.0,500.7 44.4,503.2 45.8,506.0 47.1,509.1 48.5,512.3 49.9,515.6 51.3,519.0 52.7,522.5 54.0,526.2 55.4,530.0 56.8,533.8 58.1,537.8 59.5,541.7 60.9,545.7 62.2,549.8 63.6,554.0 65.0,558.2 66.3,562.3 67.7,566.3 69.1,570.2 70.4,574.1 71.8,577.9 73.2,581.7 74.5,585.3 75.9,588.8 77.3,592.2 78.6,595.4 79.9,598.6 81.3,601.6 82.6,604.5 84.0,607.3 85.4,610.0 86.8,612.6 88.1,615.1 89.5,617.5 90.9,619.7 92.3,621.7 93.7,623.6 95.0,625.3 96.4,626.8 97.8,628.2 99.1,629.5 100.5,630.7 101.9,631.7 103.3,632.7 104.7,633.4 106.1,634.1 107.4,634.7 108.7,635.2 109.9,635.6 111.1,635.9 112.3,636.2 113.4,636.3 114.5,636.4 115.7,636.4 116.9,636.3 118.1,636.2 119.3,636.0 120.5,635.7 121.7,635.3 123.0,634.8 124.3,634.1 125.7,633.3 127.1,632.4 128.5,631.4 129.9,630.2 131.2,629.0 132.6,627.7 134.0,626.2 135.4,624.6 136.8,623.0 138.1,621.3 139.5,619.6 140.9,617.8 142.2,616.0 143.6,614.1 145.0,612.2 146.3,610.3 147.7,608.5 149.1,606.7 150.4,604.8 151.8,602.9 153.2,601.1 154.5,599.5 155.9,597.9 157.3,596.5 158.6,595.2 159.9,594.0 161.3,592.9 162.6,591.9 164.0,590.9 165.4,590.0 166.8,589.1 168.2,588.3 169.6,587.6 171.0,586.9 172.3,586.4 173.6,586.0 174.8,585.6 176.0,585.4 177.1,585.2 178.4,585.2 179.7,585.2 181.1,585.3 182.6,585.5 184.1,585.8 185.7,586.1 187.2,586.6 188.7,587.2 190.1,587.9 191.5,588.8 192.9,589.9 194.2,590.9 195.5,592.0 196.9,593.0 198.3,594.0 199.6,595.0 200.9,596.1 202.3,597.1 203.6,598.1 205.0,599.0 206.4,599.9 207.8,600.7 209.1,601.5 210.5,602.3 211.9,603.0 213.3,603.6 214.7,604.1 216.1,604.6 217.5,605.1 218.9,605.4 220.3,605.7 221.5,606.0 222.6,606.2 223.7,606.4 224.7,606.5 225.6,606.6 226.6,606.6 227.6,606.5 228.6,606.3 229.7,606.1 230.7,605.8 231.7,605.4 232.8,605.0 233.8,604.4 234.8,603.7 235.9,603.0 236.9,602.2 237.9,601.3 239.0,600.2 240.0,599.0 241.0,597.6 242.0,596.1 243.0,594.5 244.0,592.7 245.0,590.8 246.0,588.8 247.0,586.7 248.1,584.4 249.1,582.0 250.2,579.6 251.2,577.1 252.2,574.5 253.3,571.9 254.3,569.2 255.3,566.4 256.3,563.6 257.4,560.8 258.4,558.0 259.4,555.2 260.5,552.5 261.5,549.7 262.5,547.0 263.6,544.3 264.6,541.7 265.6,539.2 266.6,536.6 267.6,534.2 268.7,531.8 269.7,529.5 270.7,527.3 271.7,525.2 272.8,523.2 273.8,521.3 274.8,519.5 275.9,517.8 276.9,516.2 277.9,514.8 278.9,513.4 279.9,512.1 281.0,511.0 282.0,509.9 283.0,508.9 284.0,508.0 285.1,507.2 286.1,506.5 287.1,505.8 288.2,505.3 289.2,504.8 290.2,504.4 291.2,504.0 292.2,503.8 293.3,503.6 294.3,503.5 295.3,503.5 296.3,503.6 297.4,503.7 298.4,503.9 299.4,504.2 300.5,504.7 301.5,505.2 302.5,505.9 303.5,506.6 304.6,507.5 305.6,508.5 306.6,509.6 307.6,510.9 308.6,512.3 309.7,513.8 310.7,515.4 311.7,517.1 312.8,519.1 313.8,521.2 314.8,523.5 315.9,526.1 316.9,528.8 317.9,531.6 319.0,534.6 320.0,537.6 321.0,540.7 322.0,543.9 323.0,547.3 324.0,550.7 325.0,554.3 326.0,558.0 327.0,561.9 328.1,565.9 329.1,570.1 330.2,574.3 331.2,578.5 332.2,582.7 333.3,586.9 334.3,591.1 335.3,595.3 336.4,599.4 337.4,603.4 338.4,607.3 339.4,611.0 340.4,614.6 341.4,618.1 342.5,621.4 343.5,624.7 344.5,627.8 345.5,630.8 346.6,633.8 347.6,636.6 348.6,639.2 349.7,641.8 350.7,644.2 351.7,646.5 352.8,648.6 353.8,650.5 354.8,652.4 355.9,654.1 356.9,655.7 357.9,657.2 359.0,658.6 360.0,659.8 361.0,660.9 362.0,661.9 363.0,662.7 363.9,663.4 364.8,663.9 365.7,664.3 366.5,664.5 367.4,664.7 368.3,664.7 369.2,664.6 370.2,664.5 371.1,664.2 372.1,663.8 373.1,663.3 374.0,662.7 374.9,662.0 375.8,661.2 376.7,660.2 377.6,659.2 378.5,657.9 379.4,656.5 380.4,654.9 381.4,653.1 382.5,651.1 383.5,649.0 384.6,646.7 385.6,644.2 386.6,641.5 387.6,638.6 388.6,635.5 389.7,632.3 390.7,629.1 391.7,625.8 392.7,622.5 393.8,619.1 394.8,615.7 395.8,612.2 396.9,608.7 397.9,605.2 398.9,601.8 399.9,598.4 400.8,595.0 401.8,591.6 402.9,588.2 404.0,584.8 405.3,581.3 406.7,577.8 408.1,574.3 409.6,570.9 411.0,567.5 412.3,564.2 413.5,561.0 414.5,557.8 415.5,554.6 416.5,551.6 417.5,548.6 418.5,545.8 419.5,543.1 420.5,540.5 421.5,538.1 422.6,535.7 423.6,533.5 424.6,531.4 425.6,529.4 426.7,527.5 427.7,525.7 428.7,524.1 429.8,522.5 430.8,521.2 431.8,520.0 432.8,519.0 433.8,518.2 434.8,517.4 435.8,516.8 436.9,516.2 438.0,515.8 439.2,515.4 440.3,515.1 441.5,514.9 442.7,514.9 443.9,515.0 445.1,515.2 446.4,515.6 447.7,516.1 448.9,516.8 450.1,517.5 451.3,518.3 452.4,519.2 453.4,520.2 454.4,521.2 455.4,522.4 456.4,523.8 457.4,525.3 458.4,527.0 459.5,528.9 460.5,531.0 461.5,533.2 462.6,535.4 463.6,537.6 464.6,539.8 465.6,542.1 466.6,544.5 467.7,546.9 468.7,549.4 469.7,551.9 470.7,554.5 471.8,557.2 472.8,560.0 473.8,562.8 474.9,565.5 475.9,568.3 476.9,571.0 477.9,573.8 478.9,576.5 480.0,579.3 481.0,582.0 482.0,584.8 483.0,587.5 484.1,590.4 485.1,593.2 486.1,596.0 487.2,598.7 488.2,601.2 489.2,603.5 490.2,605.7 491.2,607.8 492.3,609.8 493.3,611.7 494.3,613.5 495.3,615.2 496.4,616.9 497.4,618.4 498.4,619.9 499.5,621.3 500.5,622.5 501.5,623.6 502.5,624.6 503.6,625.6 504.6,626.4 505.6,627.1 506.6,627.8 507.6,628.4 508.7,628.9 509.8,629.4 510.8,629.7 511.8,630.0 512.8,630.3 513.7,630.5 514.5,630.7 515.3,630.8 516.1,630.8 516.9,630.8 517.7,630.7 518.5,630.6 519.4,630.4 520.3,630.2 521.2,629.9 522.1,629.5 523.0,629.0 524.0,628.4 525.0,627.6 526.0,626.8 527.1,625.9 528.2,624.8 529.2,623.7 530.2,622.4 531.3,621.1 532.3,619.6 533.3,618.0 534.4,616.4 535.4,614.7 536.4,612.9 537.4,611.1 538.4,609.2 539.5,607.3 540.5,605.2 541.5,603.2 542.5,601.1 543.6,598.9 544.6,596.6 545.6,594.4 546.7,592.2 547.7,590.0 548.7,587.9 549.7,585.8 550.8,583.7 551.8,581.7 552.8,579.7 553.8,577.8 554.8,575.9 555.9,574.1 556.9,572.4 557.9,570.7 559.0,569.0 560.0,567.5 561.0,566.0 562.0,564.6 563.0,563.3 564.0,562.1 565.0,561.0 566.0,560.0 567.0,559.1 568.1,558.4 569.2,557.8 570.3,557.2 571.3,556.8 572.3,556.4 573.2,556.1 574.0,555.8 574.8,555.7 575.6,555.6 576.4,555.6 577.2,555.6 578.0,555.7 578.9,555.8 579.8,556.0 580.7,556.3 581.6,556.7 582.5,557.3 583.5,558.0 584.5,558.9 585.6,559.8 586.6,560.9 587.7,562.1 588.7,563.4 589.7,564.9 590.7,566.5 591.8,568.2 592.8,570.1 593.8,571.9 594.8,573.7 595.8,575.5 596.9,577.3 597.9,579.2 598.9,581.0 600.0,582.9 601.0,584.8 602.0,586.6 603.0,588.5 604.0,590.4 605.0,592.3 606.0,594.1 607.0,595.8 608.0,597.4 609.1,599.0 610.1,600.4 611.2,601.8 612.3,603.2 613.3,604.4 614.3,605.6 615.3,606.7 616.4,607.7 617.4,608.6 618.4,609.4 619.4,610.2 620.5,610.9 621.5,611.4 622.6,611.9 623.7,612.3 624.7,612.7 625.6,613.0 626.4,613.3 627.0,613.5 627.7,613.7 628.3,613.8 628.9,613.9 629.7,613.9 630.6,613.9 631.6,613.8 632.6,613.6 633.7,613.4 634.8,613.1 635.8,612.6 636.8,612.0 637.9,611.2 638.9,610.4 639.9,609.4 641.0,608.4 642.0,607.3 643.0,606.1 644.0,604.9 645.0,603.5 646.0,602.1 647.0,600.6 648.0,599.0 649.0,597.3 650.1,595.6 651.1,593.7 652.2,591.8 653.3,589.9 654.3,588.0 655.3,586.1 656.4,584.2 657.4,582.2 658.4,580.3 659.5,578.3 660.5,576.5 661.5,574.7 662.5,572.9 663.5,571.1 664.6,569.4 665.6,567.8 666.6,566.3 667.6,564.9 668.7,563.5 669.7,562.2 670.7,561.0 671.8,559.9 672.8,558.9 673.8,558.0 674.9,557.2 675.9,556.4 677.0,555.8 678.0,555.3 678.9,554.8 679.8,554.4 680.6,554.2 681.4,554.0 682.2,554.0 683.0,554.0 683.8,554.0 684.7,554.1 685.5,554.2 686.4,554.4 687.3,554.7 688.3,555.1 689.2,555.6 690.2,556.2 691.2,557.0 692.2,557.8 693.2,558.8 694.3,559.8 695.3,561.0 696.3,562.3 697.4,563.8 698.4,565.4 699.4,567.1 700.5,568.7 701.5,570.4 702.5,572.1 703.5,573.8 704.5,575.5 705.6,577.3 706.6,579.0 707.6,580.6 708.6,582.2 709.7,583.8 710.7,585.4 711.7,586.9 712.8,588.4 713.8,589.7 714.8,590.9 715.9,592.1 716.9,593.1 717.9,594.1 719.0,595.0 720.0,595.8 721.0,596.5 722.0,597.1 723.0,597.7 724.0,598.2 725.0,598.6 726.0,599.0 727.1,599.4 728.1,599.7 729.2,600.0 730.3,600.3 731.3,600.5 732.2,600.7 733.0,600.8 733.7,600.9 734.3,600.9 734.9,600.9 735.5,600.8 736.3,600.7 737.2,600.6 738.2,600.4 739.3,600.2 740.4,599.9 741.4,599.5 742.5,599.0 743.5,598.4 744.5,597.7 745.5,596.9 746.6,595.9 747.6,594.9 748.6,593.8 749.6,592.5 750.7,591.1 751.7,589.6 752.7,588.0 753.8,586.4 754.8,584.8 755.8,583.1 756.8,581.5 757.9,579.8 758.9,578.0 759.9,576.3 760.9,574.5 761.9,572.7 763.0,570.8 764.0,568.8 765.0,566.9 766.1,565.1 767.1,563.4 768.1,561.8 769.2,560.3 770.2,558.8 771.2,557.4 772.2,556.1 773.2,554.8 774.3,553.6 775.3,552.5 776.3,551.4 777.3,550.4 778.4,549.5 779.4,548.6 780.4,547.8 781.5,547.0 782.5,546.3 783.5,545.6 784.6,545.0 785.6,544.5 786.6,544.1 787.7,543.7 788.8,543.5 789.8,543.3 790.8,543.1 791.7,542.9 792.5,542.7 793.1,542.6 793.7,542.5 794.4,542.5 795.0,542.5 795.8,542.5 796.7,542.6 797.7,542.7 798.8,542.9 799.9,543.1 800.9,543.4 802.0,543.7 803.0,544.0 804.0,544.4 805.0,544.8 806.1,545.2 807.1,545.7 808.1,546.2 809.1,546.7 810.1,547.3 811.1,548.0 812.2,548.6 813.2,549.3 814.3,549.9 815.5,550.5 816.9,551.2 818.3,551.9 819.6,552.6 820.7,553.1 821.5,553.5" stroke="#2EE62E" stroke-width="2.05" fill="none" stroke-linejoin="round"/>
<rect x="980" y="109" width="3" height="1" fill="#000"/>
<text x="984.5" y="112.5" class="ax" textLength="32.8" lengthAdjust="spacingAndGlyphs">1.08345</text>
<rect x="980" y="142" width="3" height="1" fill="#000"/>
<text x="984.5" y="145.5" class="ax" textLength="32.8" lengthAdjust="spacingAndGlyphs">1.08030</text>
<rect x="980" y="175" width="3" height="1" fill="#000"/>
<text x="984.5" y="178.5" class="ax" textLength="32.8" lengthAdjust="spacingAndGlyphs">1.07715</text>
<rect x="980" y="241" width="3" height="1" fill="#000"/>
<text x="984.5" y="244.5" class="ax" textLength="32.8" lengthAdjust="spacingAndGlyphs">1.07080</text>
<rect x="980" y="274" width="3" height="1" fill="#000"/>
<text x="984.5" y="277.5" class="ax" textLength="32.8" lengthAdjust="spacingAndGlyphs">1.06765</text>
<rect x="980" y="307" width="3" height="1" fill="#000"/>
<text x="984.5" y="310.5" class="ax" textLength="32.8" lengthAdjust="spacingAndGlyphs">1.06445</text>
<rect x="980" y="340" width="3" height="1" fill="#000"/>
<text x="984.5" y="343.5" class="ax" textLength="32.8" lengthAdjust="spacingAndGlyphs">1.06130</text>
<rect x="980" y="373" width="3" height="1" fill="#000"/>
<text x="984.5" y="376.5" class="ax" textLength="32.8" lengthAdjust="spacingAndGlyphs">1.05810</text>
<rect x="980" y="406" width="3" height="1" fill="#000"/>
<text x="984.5" y="409.5" class="ax" textLength="32.8" lengthAdjust="spacingAndGlyphs">1.05495</text>
<rect x="980" y="439" width="3" height="1" fill="#000"/>
<text x="984.5" y="442.5" class="ax" textLength="32.8" lengthAdjust="spacingAndGlyphs">1.05180</text>
<rect x="980" y="472" width="3" height="1" fill="#000"/>
<text x="984.5" y="475.5" class="ax" textLength="32.8" lengthAdjust="spacingAndGlyphs">1.04860</text>
<rect x="982" y="205" width="40" height="12" fill="#000"/>
<text x="984.5" y="214.5" class="ax" fill="#fff" textLength="32.8" lengthAdjust="spacingAndGlyphs">1.07371</text>
<text x="984.5" y="488" class="ax" textLength="36.3" lengthAdjust="spacingAndGlyphs">0.056299</text>
<text x="983.5" y="671" class="ax" textLength="38.5" lengthAdjust="spacingAndGlyphs">-0.049767</text>
<text x="987" y="585.5" class="ax" textLength="13.5" lengthAdjust="spacingAndGlyphs">.00</text>
<rect x="981.5" y="555" width="5.5" height="11" fill="#DC143C"/>
<text x="982" y="564" class="ax" fill="#fff" style="font-size:8.5px">0</text>
<rect x="981.5" y="577" width="5.5" height="11" fill="#0A6B1E"/>
<text x="982" y="585.5" class="ax" fill="#fff" style="font-size:8.5px">0</text>
<text x="906" y="120.5" style="font-size:20.5px" fill="#A52A2A" textLength="27" lengthAdjust="spacingAndGlyphs">0.0</text>
<text x="946" y="120.5" style="font-size:20.5px" fill="#0000CD" textLength="27" lengthAdjust="spacingAndGlyphs">0.0</text>
<text x="936" y="142.5" style="font-size:26.5px" fill="#A52A2A" textLength="37.5" lengthAdjust="spacingAndGlyphs">0.0</text>
<path d="M8 103 L15 103 L11.5 107 Z" fill="#000"/>
<text x="19.5" y="108" class="ax" textLength="201" lengthAdjust="spacingAndGlyphs">EURUSD,H1&#160; 1.07416 1.07416 1.07326 1.07371</text>
<text x="8.7" y="489.6" class="ax" textLength="355.5" lengthAdjust="spacingAndGlyphs">tma ado__1 -0.000300 0.015581 0.015581&#160; tma ado__1 -0.000002 0.000622 0.000622</text>
<rect x="5" y="675" width="1" height="3" fill="#000"/>
<text x="4" y="686.6" class="ax" textLength="50.3" lengthAdjust="spacingAndGlyphs">30 Jan 2017</text>
<rect x="69" y="675" width="1" height="3" fill="#000"/>
<text x="68" y="686.6" class="ax" textLength="48.8" lengthAdjust="spacingAndGlyphs">2 Feb 14:00</text>
<rect x="133" y="675" width="1" height="3" fill="#000"/>
<text x="132" y="686.6" class="ax" textLength="48.8" lengthAdjust="spacingAndGlyphs">7 Feb 06:00</text>
<rect x="197" y="675" width="1" height="3" fill="#000"/>
<text x="196" y="686.6" class="ax" textLength="48.8" lengthAdjust="spacingAndGlyphs">9 Feb 22:00</text>
<rect x="261" y="675" width="1" height="3" fill="#000"/>
<text x="260" y="686.6" class="ax" textLength="53.9" lengthAdjust="spacingAndGlyphs">14 Feb 14:00</text>
<rect x="325" y="675" width="1" height="3" fill="#000"/>
<text x="324" y="686.6" class="ax" textLength="53.9" lengthAdjust="spacingAndGlyphs">17 Feb 06:00</text>
<rect x="389" y="675" width="1" height="3" fill="#000"/>
<text x="388" y="686.6" class="ax" textLength="53.9" lengthAdjust="spacingAndGlyphs">21 Feb 22:00</text>
<rect x="453" y="675" width="1" height="3" fill="#000"/>
<text x="452" y="686.6" class="ax" textLength="53.9" lengthAdjust="spacingAndGlyphs">24 Feb 14:00</text>
<rect x="517" y="675" width="1" height="3" fill="#000"/>
<text x="516" y="686.6" class="ax" textLength="48.8" lengthAdjust="spacingAndGlyphs">1 Mar 06:00</text>
<rect x="581" y="675" width="1" height="3" fill="#000"/>
<text x="580" y="686.6" class="ax" textLength="48.8" lengthAdjust="spacingAndGlyphs">3 Mar 22:00</text>
<rect x="645" y="675" width="1" height="3" fill="#000"/>
<text x="644" y="686.6" class="ax" textLength="48.8" lengthAdjust="spacingAndGlyphs">8 Mar 14:00</text>
<rect x="709" y="675" width="1" height="3" fill="#000"/>
<text x="708" y="686.6" class="ax" textLength="53.9" lengthAdjust="spacingAndGlyphs">13 Mar 06:00</text>
<rect x="773" y="675" width="1" height="3" fill="#000"/>
<text x="772" y="686.6" class="ax" textLength="53.9" lengthAdjust="spacingAndGlyphs">15 Mar 22:00</text>
</svg>
<div class="abs" style="left:0;top:0;width:1024px;height:18px;background:#0A246A"></div>
<svg class="abs" style="left:3px;top:1px" width="15" height="15" viewBox="0 0 15 15"><rect width="15" height="15" fill="#140A0A"/><text x="1.5" y="7" font-size="7" font-weight="bold" fill="#D21E28" font-family="Liberation Serif,serif">FX</text><text x="1" y="13.5" font-size="6.5" font-weight="bold" fill="#B4141E" font-family="Liberation Serif,serif">PRO</text></svg>
<div class="abs" style="left:972px;top:2px;width:16px;height:14px;box-sizing:border-box;background:#D4D0C8;border:1px solid;border-color:#fff #404040 #404040 #fff;box-shadow:inset -1px -1px 0 #808080;"></div><div class="abs" style="left:988px;top:2px;width:16px;height:14px;box-sizing:border-box;background:#D4D0C8;border:1px solid;border-color:#fff #404040 #404040 #fff;box-shadow:inset -1px -1px 0 #808080;"></div><div class="abs" style="left:1006px;top:2px;width:16px;height:14px;box-sizing:border-box;background:#D4D0C8;border:1px solid;border-color:#fff #404040 #404040 #fff;box-shadow:inset -1px -1px 0 #808080;"></div><div class="abs" style="left:976px;top:11px;width:6px;height:2px;background:#000;"></div><svg class="abs" style="left:988px;top:2px" width="16" height="14" viewBox="0 0 16 14"><rect x="5.5" y="2.5" width="6" height="5" fill="none" stroke="#000"/><rect x="5" y="2" width="7" height="2" fill="#000"/><rect x="3.5" y="5.5" width="6" height="5" fill="#D4D0C8" stroke="#000"/><rect x="3" y="5" width="7" height="2" fill="#000"/></svg><svg class="abs" style="left:1006px;top:2px" width="16" height="14" viewBox="0 0 16 14"><path d="M4.5 3.5L11 10M11 3.5L4.5 10" stroke="#000" stroke-width="1.7"/></svg>
<div class="abs" style="left:972px;top:21px;width:16px;height:14px;box-sizing:border-box;background:#D4D0C8;border:1px solid;border-color:#fff #404040 #404040 #fff;box-shadow:inset -1px -1px 0 #808080;"></div><div class="abs" style="left:988px;top:21px;width:16px;height:14px;box-sizing:border-box;background:#D4D0C8;border:1px solid;border-color:#fff #404040 #404040 #fff;box-shadow:inset -1px -1px 0 #808080;"></div><div class="abs" style="left:1006px;top:21px;width:16px;height:14px;box-sizing:border-box;background:#D4D0C8;border:1px solid;border-color:#fff #404040 #404040 #fff;box-shadow:inset -1px -1px 0 #808080;"></div><div class="abs" style="left:976px;top:30px;width:6px;height:2px;background:#000;"></div><svg class="abs" style="left:988px;top:21px" width="16" height="14" viewBox="0 0 16 14"><rect x="5.5" y="2.5" width="6" height="5" fill="none" stroke="#000"/><rect x="5" y="2" width="7" height="2" fill="#000"/><rect x="3.5" y="5.5" width="6" height="5" fill="#D4D0C8" stroke="#000"/><rect x="3" y="5" width="7" height="2" fill="#000"/></svg><svg class="abs" style="left:1006px;top:21px" width="16" height="14" viewBox="0 0 16 14"><path d="M4.5 3.5L11 10M11 3.5L4.5 10" stroke="#000" stroke-width="1.7"/></svg>
<svg class="abs" style="left:5px;top:21px" width="15" height="14" viewBox="0 0 15 14"><rect x="0.5" y="0.5" width="10" height="9" fill="#fff" stroke="#7AA6DC"/><rect x="1" y="1" width="9" height="2" fill="#B9D3F0"/><path d="M2 6l1.5-2 1.5 3 1.5-3 1.5 2" stroke="#3C78C8" fill="none" stroke-width="0.8"/><rect x="3.5" y="4.5" width="10" height="9" fill="#fff" stroke="#7AA6DC"/><rect x="4" y="5" width="9" height="2" fill="#B9D3F0"/><path d="M5 10.5l1.5-2 1.5 3 1.5-3 1.5 3 1-1.5" stroke="#3C78C8" fill="none" stroke-width="0.8"/></svg>
<div class="abs" style="left:2px;top:43px;width:3px;height:1px;background:#7a7a7a;"></div><div class="abs" style="left:2px;top:45px;width:3px;height:1px;background:#7a7a7a;"></div><div class="abs" style="left:2px;top:47px;width:3px;height:1px;background:#7a7a7a;"></div><div class="abs" style="left:2px;top:49px;width:3px;height:1px;background:#7a7a7a;"></div><div class="abs" style="left:2px;top:51px;width:3px;height:1px;background:#7a7a7a;"></div><div class="abs" style="left:2px;top:53px;width:3px;height:1px;background:#7a7a7a;"></div><div class="abs" style="left:2px;top:55px;width:3px;height:1px;background:#7a7a7a;"></div><div class="abs" style="left:2px;top:57px;width:3px;height:1px;background:#7a7a7a;"></div><div class="abs" style="left:2px;top:59px;width:3px;height:1px;background:#7a7a7a;"></div><div class="abs" style="left:2px;top:61px;width:3px;height:1px;background:#7a7a7a;"></div>
<svg class="abs" style="left:11px;top:45px" width="18" height="16" viewBox="0 0 18 16"><rect x="0.5" y="0.5" width="12" height="9.5" fill="#fff" stroke="#6F9BD0"/><rect x="1" y="1" width="11" height="2" fill="#A9C8EC"/><path d="M3 4v5M2 5.5l1-1.5 1 1.5" stroke="#3C6EB4" fill="none" stroke-width="0.8"/><path d="M9.5 3h3.5v4h4v3.5h-4v4h-3.5v-4h-4V7h4z" fill="#33D033" stroke="#1C8C1C" stroke-width="0.9"/></svg>
<svg class="abs" style="left:31px;top:52px" width="5" height="3" viewBox="0 0 5 3"><path d="M0 0H5L2.5 3Z" fill="#000"/></svg>
<svg class="abs" style="left:46px;top:45px" width="18" height="16" viewBox="0 0 18 16"><rect x="0.5" y="0.5" width="12.5" height="9.5" fill="#fff" stroke="#6F9BD0"/><rect x="1" y="1" width="12" height="2" fill="#A9C8EC"/><path d="M3 3.5v5M3 6.5h8" stroke="#5A8CCB" stroke-width="0.8" fill="none"/><rect x="3.5" y="6.5" width="12.5" height="8.5" fill="#fff" stroke="#6F9BD0"/><path d="M5.5 11h8M6 9v4" stroke="#5A8CCB" stroke-width="0.8" fill="none"/></svg>
<svg class="abs" style="left:66px;top:52px" width="5" height="3" viewBox="0 0 5 3"><path d="M0 0H5L2.5 3Z" fill="#000"/></svg>
<div class="abs" style="left:80px;top:42px;width:1px;height:21px;background:#808080;"></div><div class="abs" style="left:81px;top:42px;width:1px;height:21px;background:#EEECE6;"></div>
<svg class="abs" style="left:90px;top:45px" width="17" height="16" viewBox="0 0 17 16"><rect x="0.75" y="0.75" width="14.5" height="14" fill="#fff" stroke="#9DBDE6" stroke-width="1.5"/><path d="M5.5 2.5l3 3h-1.7v3h-2.6v-3h-1.7z" fill="#2DB82D" stroke="#1A7A1A" stroke-width="0.6"/><path d="M10 13.5l-3-3h1.7v-3h2.6v3h1.7z" fill="#F05A46" stroke="#B42814" stroke-width="0.6"/></svg>
<svg class="abs" style="left:118px;top:45px" width="17" height="17" viewBox="0 0 17 17"><circle cx="8.5" cy="8.5" r="4.8" fill="none" stroke="#555" stroke-width="1.4"/><path d="M8.5 1v6M8.5 10v6M1 8.5h6M10 8.5h6" stroke="#555" stroke-width="1.4"/></svg>
<svg class="abs" style="left:144px;top:45px" width="19" height="17" viewBox="0 0 19 17"><path d="M1 3.5h4l1.2 1.5h5.5v7H1z" fill="#F4E27E" stroke="#C9A93A" stroke-width="0.8"/><path d="M5 13.5v2M5 11.5v1" stroke="#777" stroke-width="1" stroke-dasharray="1 1"/><path d="M12.5 5.5l1.7 3.4 3.8.5-2.8 2.6.7 3.8-3.4-1.9-3.4 1.9.7-3.8-2.8-2.6 3.8-.5z" fill="#F7D94A" stroke="#C79A1E" stroke-width="0.9"/></svg>
<svg class="abs" style="left:174px;top:46px" width="17" height="14" viewBox="0 0 17 14"><rect x="0.75" y="0.75" width="14.5" height="12" fill="#fff" stroke="#3F7FD6" stroke-width="1.5"/><rect x="1.5" y="1.5" width="2.8" height="10.5" fill="#3F7FD6"/><path d="M5.5 3.5h8M5.5 5.5h8M5.5 7.5h8M5.5 9.5h8" stroke="#8FB0E0" stroke-width="0.9"/><path d="M5 3.5h1.3M5 5.5h1.3M5 7.5h1.3" stroke="#B03030" stroke-width="1"/></svg>
<svg class="abs" style="left:202px;top:45px" width="19" height="18" viewBox="0 0 19 18"><rect x="0.5" y="0.5" width="12" height="12" fill="#fff" stroke="#C8D2DC"/><path d="M3 9V3M5.5 10V4M8 8V2M10.5 9V3" stroke="#5078B4" stroke-width="0.9"/><circle cx="8" cy="8" r="4.6" fill="#CFE6F8" fill-opacity="0.85" stroke="#7FB2E0" stroke-width="1.3"/><path d="M11.5 11.5l5 4.5" stroke="#D8B43C" stroke-width="2.2" stroke-linecap="round"/></svg>
<div class="abs" style="left:228px;top:42px;width:1px;height:21px;background:#808080;"></div><div class="abs" style="left:229px;top:42px;width:1px;height:21px;background:#EEECE6;"></div>
<svg class="abs" style="left:239px;top:45px" width="17" height="18" viewBox="0 0 17 18"><path d="M0.5 0.5h8l3 3v9.5h-11z" fill="#fff" stroke="#9AA0A8"/><path d="M2 4h6M2 6h7M2 8h5" stroke="#888" stroke-width="0.9"/><path d="M8.5 6h4v4h3.7v3.6h-3.7v4h-4v-4H5V10h3.5z" fill="#33D033" stroke="#1C8C1C" stroke-width="0.9"/></svg>
<svg class="abs" style="left:321px;top:45px" width="18" height="17" viewBox="0 0 18 17"><path d="M1.5 9.5l6.5-8 9 4.5-4.5 8.5z" fill="#F2C83C" stroke="#B8860B" stroke-width="1"/><path d="M1.5 9.5l1 2.5 10 3.5 .5-1" fill="#D9A520" stroke="#A67A0A" stroke-width="0.9"/><path d="M5 8l5-5" stroke="#FBE89A" stroke-width="1.2"/></svg>
<svg class="abs" style="left:348px;top:44px" width="19" height="18" viewBox="0 0 19 18"><path d="M3 8c0-1 3-2 6-2s6 1 6 2l-2 5.5c-1 2-3 3-5 3s-3.5-1.5-4-3z" fill="#F7DC50" stroke="#D2A81E" stroke-width="0.7"/><path d="M1 7.5c2-1.5 3.5-5.5 8-5.5s5.500 3.500 8 4.500c-2.500 2-5 1.300-8 1.300s-5.500 1.200-8-.3z" fill="#5BB4EC" stroke="#2E86C8" stroke-width="0.8"/><path d="M5 3.500c1.500-1.500 6-1.500 7.500 0" stroke="#9FD6F6" fill="none"/><circle cx="13.600" cy="12.500" r="4.300" fill="#D22814" stroke="#A01408" stroke-width="0.6"/><rect x="12" y="10.900" width="3.200" height="3.200" fill="#fff"/></svg>
<div class="abs" style="left:436px;top:40px;width:1px;height:25px;background:#808080;"></div><div class="abs" style="left:437px;top:40px;width:1px;height:25px;background:#EEECE6;"></div>
<div class="abs" style="left:440px;top:43px;width:3px;height:1px;background:#7a7a7a;"></div><div class="abs" style="left:440px;top:45px;width:3px;height:1px;background:#7a7a7a;"></div><div class="abs" style="left:440px;top:47px;width:3px;height:1px;background:#7a7a7a;"></div><div class="abs" style="left:440px;top:49px;width:3px;height:1px;background:#7a7a7a;"></div><div class="abs" style="left:440px;top:51px;width:3px;height:1px;background:#7a7a7a;"></div><div class="abs" style="left:440px;top:53px;width:3px;height:1px;background:#7a7a7a;"></div><div class="abs" style="left:440px;top:55px;width:3px;height:1px;background:#7a7a7a;"></div><div class="abs" style="left:440px;top:57px;width:3px;height:1px;background:#7a7a7a;"></div><div class="abs" style="left:440px;top:59px;width:3px;height:1px;background:#7a7a7a;"></div><div class="abs" style="left:440px;top:61px;width:3px;height:1px;background:#7a7a7a;"></div>
<svg class="abs" style="left:451px;top:45px" width="16" height="16" viewBox="0 0 16 16"><path d="M3.500 1v14M1 12.500h14M2 3l1.500-2 1.500 2M13 11l2 1.500-2 1.500" stroke="#555" stroke-width="1.100" fill="none"/><path d="M9.500 4v8M9.500 5h2M7.500 10.500h2" stroke="#2E9E2E" stroke-width="1.400" fill="none"/></svg>
<svg class="abs" style="left:475px;top:42px" width="23" height="21" shape-rendering="crispEdges"><rect width="23" height="21" fill="url(#chk)"/></svg><div class="abs" style="left:474px;top:41px;width:25px;height:23px;box-sizing:border-box;border:1px solid;border-color:#808080 #fff #fff #808080"></div>
<svg class="abs" style="left:479px;top:45px" width="16" height="16" viewBox="0 0 16 16"><path d="M3.500 1v14M1 12.500h14M2 3l1.500-2 1.500 2M13 11l2 1.500-2 1.500" stroke="#555" stroke-width="1.100" fill="none"/><path d="M9.500 0.500v12" stroke="#1C8C1C" stroke-width="1"/><rect x="7.300" y="2.500" width="4.400" height="7.500" fill="#33D033" stroke="#1C8C1C" stroke-width="0.800"/></svg>
<svg class="abs" style="left:507px;top:45px" width="16" height="16" viewBox="0 0 16 16"><path d="M3.500 1v14M1 12.500h14M2 3l1.500-2 1.500 2M13 11l2 1.500-2 1.500" stroke="#555" stroke-width="1.100" fill="none"/><path d="M3.500 10c1.500-6 6-8 10-1.500" stroke="#3FA03F" stroke-width="1.200" fill="none"/></svg>
<div class="abs" style="left:532px;top:42px;width:1px;height:21px;background:#808080;"></div><div class="abs" style="left:533px;top:42px;width:1px;height:21px;background:#EEECE6;"></div>
<svg class="abs" style="left:541px;top:44px" width="19" height="19" viewBox="0 0 19 19"><path d="M10.500 10.500l6 6" stroke="#E8C83C" stroke-width="2.600" stroke-linecap="round"/><circle cx="7" cy="6.500" r="5.300" fill="#CDE8FA" stroke="#3C82D2" stroke-width="1.300"/><path d="M7 3.500v6M4 6.500h6" stroke="#2C6CC8" stroke-width="1.700"/></svg>
<svg class="abs" style="left:569px;top:44px" width="19" height="19" viewBox="0 0 19 19"><path d="M10.500 10.500l6 6" stroke="#A8A8A8" stroke-width="2.200" stroke-linecap="round"/><circle cx="7" cy="6.500" r="5.300" fill="#F0F0F0" stroke="#B4B4B4" stroke-width="1.300"/><path d="M4 6.500h6" stroke="#A0A0A0" stroke-width="1.700"/></svg>
<div class="abs" style="left:596px;top:42px;width:1px;height:21px;background:#808080;"></div><div class="abs" style="left:597px;top:42px;width:1px;height:21px;background:#EEECE6;"></div>
<svg class="abs" style="left:603px;top:42px" width="23" height="21" shape-rendering="crispEdges"><rect width="23" height="21" fill="url(#chk)"/></svg><div class="abs" style="left:602px;top:41px;width:25px;height:23px;box-sizing:border-box;border:1px solid;border-color:#808080 #fff #fff #808080"></div>
<svg class="abs" style="left:607px;top:45px" width="16" height="16" viewBox="0 0 16 16"><path d="M3.500 1v14M1 12.500h14M2 3l1.500-2 1.500 2M13 11l2 1.500-2 1.500" stroke="#555" stroke-width="1.100" fill="none"/><path d="M8.500 4.500v7l4.500-3.500z" fill="none" stroke="#2E9E2E" stroke-width="1.200"/></svg>
<svg class="abs" style="left:631px;top:42px" width="23" height="21" shape-rendering="crispEdges"><rect width="23" height="21" fill="url(#chk)"/></svg><div class="abs" style="left:630px;top:41px;width:25px;height:23px;box-sizing:border-box;border:1px solid;border-color:#808080 #fff #fff #808080"></div>
<svg class="abs" style="left:635px;top:45px" width="16" height="16" viewBox="0 0 16 16"><path d="M3.500 1v14M1 12.500h14M2 3l1.500-2 1.500 2M13 11l2 1.500-2 1.500" stroke="#555" stroke-width="1.100" fill="none"/><path d="M9.500 2v10" stroke="#555" stroke-width="1.100"/><path d="M15 7.500h-4M13 5.500l-2.500 2 2.500 2" stroke="#C01E1E" stroke-width="1.100" fill="none"/></svg>
<div class="abs" style="left:660px;top:42px;width:1px;height:21px;background:#808080;"></div><div class="abs" style="left:661px;top:42px;width:1px;height:21px;background:#EEECE6;"></div>
<svg class="abs" style="left:671px;top:45px" width="17" height="18" viewBox="0 0 17 18"><path d="M3.500 0.500h5l3 3v8.500h-8z" fill="#fff" stroke="#9AA0A8"/><path d="M0.500 2.500h5l3 3v7.500h-8z" fill="#fff" stroke="#9AA0A8"/><path d="M2.500 5v5" stroke="#B03030" stroke-width="0.900"/><path d="M7.500 6h4v4h3.700v3.600h-3.700v4h-4v-4H4V10h3.500z" fill="#33D033" stroke="#1C8C1C" stroke-width="0.900"/></svg>
<svg class="abs" style="left:689px;top:52px" width="5" height="3" viewBox="0 0 5 3"><path d="M0 0H5L2.5 3Z" fill="#000"/></svg>
<svg class="abs" style="left:704px;top:44px" width="18" height="18" viewBox="0 0 18 18"><circle cx="9" cy="8.500" r="7.300" fill="#fff" stroke="#1E64BE" stroke-width="2.600"/><circle cx="9" cy="8.500" r="5.500" fill="#F4F8FC" stroke="#7FB0E8" stroke-width="0.600"/><path d="M9 4.500v4h3.500" stroke="#333" stroke-width="1.100" fill="none"/><path d="M9 8.500h3.500" stroke="#C02020" stroke-width="1"/></svg>
<svg class="abs" style="left:724px;top:52px" width="5" height="3" viewBox="0 0 5 3"><path d="M0 0H5L2.5 3Z" fill="#000"/></svg>
<svg class="abs" style="left:740px;top:46px" width="17" height="15" viewBox="0 0 17 15"><rect x="0.500" y="0.500" width="15.500" height="13.500" fill="#fff" stroke="#5A8CD2"/><rect x="1" y="1" width="14.500" height="2.500" fill="#3C78D2"/><path d="M1 8.500h14.500" stroke="#5A8CD2"/><path d="M2.500 7l3-1.500 3 .5 3-2 2.500.5" stroke="#B43C3C" stroke-width="1" fill="none"/><path d="M2.500 12l2.500-1.500 2.500 1.500 2.500-2 3 2" stroke="#2E8E5E" stroke-width="1" fill="none"/></svg>
<svg class="abs" style="left:759px;top:52px" width="5" height="3" viewBox="0 0 5 3"><path d="M0 0H5L2.5 3Z" fill="#000"/></svg>
<div class="abs" style="left:770px;top:40px;width:1px;height:26px;background:#808080;"></div><div class="abs" style="left:771px;top:40px;width:1px;height:26px;background:#EEECE6;"></div>
<svg class="abs" style="left:968px;top:44px" width="18" height="18" viewBox="0 0 18 18"><path d="M3 14.500l5-5.500" stroke="#4A74C8" stroke-width="2.600" stroke-linecap="round"/><circle cx="11" cy="6" r="4.300" fill="#D2DAF4" stroke="#4A6ED0" stroke-width="1.500"/></svg>
<svg class="abs" style="left:995px;top:43px" width="26" height="18" viewBox="0 0 26 18"><ellipse cx="16.500" cy="6.500" rx="6.300" ry="4.800" fill="#F2F2F2" stroke="#C4C4C4" stroke-width="0.700"/><path d="M19 10.500l1.500 3 1-3.500z" fill="#F2F2F2"/><ellipse cx="7.500" cy="11" rx="5" ry="3.800" fill="#F6F6F6" stroke="#C8C8C8" stroke-width="0.700"/><path d="M5 14l-.5 3 2.500-2.600z" fill="#F6F6F6"/></svg>
<div class="abs" style="left:2px;top:70px;width:3px;height:1px;background:#7a7a7a;"></div><div class="abs" style="left:2px;top:72px;width:3px;height:1px;background:#7a7a7a;"></div><div class="abs" style="left:2px;top:74px;width:3px;height:1px;background:#7a7a7a;"></div><div class="abs" style="left:2px;top:76px;width:3px;height:1px;background:#7a7a7a;"></div><div class="abs" style="left:2px;top:78px;width:3px;height:1px;background:#7a7a7a;"></div><div class="abs" style="left:2px;top:80px;width:3px;height:1px;background:#7a7a7a;"></div><div class="abs" style="left:2px;top:82px;width:3px;height:1px;background:#7a7a7a;"></div><div class="abs" style="left:2px;top:84px;width:3px;height:1px;background:#7a7a7a;"></div><div class="abs" style="left:2px;top:86px;width:3px;height:1px;background:#7a7a7a;"></div><div class="abs" style="left:2px;top:88px;width:3px;height:1px;background:#7a7a7a;"></div>
<svg class="abs" style="left:9px;top:69px" width="24" height="22" shape-rendering="crispEdges"><rect width="24" height="22" fill="url(#chk)"/></svg><div class="abs" style="left:8px;top:68px;width:26px;height:24px;box-sizing:border-box;border:1px solid;border-color:#808080 #fff #fff #808080"></div>
<svg class="abs" style="left:14px;top:72px" width="13" height="17" viewBox="0 0 13 17"><path d="M2 1.500v11.500l3-2.800 2.300 5.300 2-.9-2.300-5.100h4.200z" fill="#555" stroke="#444" stroke-width="0.500"/></svg>
<svg class="abs" style="left:40px;top:72px" width="17" height="17" viewBox="0 0 17 17"><path d="M8.500 1v6M8.500 10v6M1 8.500h6M10 8.500h6" stroke="#555" stroke-width="1.100"/></svg>
<div class="abs" style="left:65px;top:69px;width:1px;height:22px;background:#808080;"></div><div class="abs" style="left:66px;top:69px;width:1px;height:22px;background:#EEECE6;"></div>
<div class="abs" style="left:82px;top:74px;width:1px;height:13px;background:#555;"></div>
<div class="abs" style="left:105px;top:80px;width:12px;height:1px;background:#555;"></div>
<svg class="abs" style="left:131px;top:73px" width="16" height="15" viewBox="0 0 16 15"><path d="M1.500 13.500L14.500 1.500" stroke="#666" stroke-width="1.200"/></svg>
<svg class="abs" style="left:157px;top:71px" width="19" height="19" viewBox="0 0 19 19"><path d="M2 10.500l13-7M2 14.500l13-7M4 16l3-11M7.500 14l3-11M11 12l3-11" stroke="#555" stroke-width="1"/><text x="12.500" y="18" font-size="6.500" font-weight="bold" fill="#444" font-family="Liberation Sans,sans-serif">E</text></svg>
<svg class="abs" style="left:187px;top:71px" width="17" height="19" viewBox="0 0 17 19"><path d="M1 2.500h14M1 5.500h14M1 9.500h14M1 13.500h9" stroke="#555" stroke-width="1" stroke-dasharray="1 1"/><text x="11" y="18" font-size="6.500" font-weight="bold" fill="#444" font-family="Liberation Sans,sans-serif">F</text></svg>
<span class="t" style="left:218.5px;top:75.8px;font-size:11.5px;color:#666;font-weight:bold;transform:scaleX(1.0235);">A</span>
<svg class="abs" style="left:244px;top:73px" width="14" height="15" viewBox="0 0 14 15"><rect x="0.500" y="0.500" width="12.500" height="13" fill="none" stroke="#555" stroke-dasharray="1 1"/><path d="M3 3.500h7.500M6.700 3.500v8" stroke="#666" stroke-width="1.800"/></svg>
<svg class="abs" style="left:271px;top:73px" width="16" height="15" viewBox="0 0 16 15"><path d="M2 4l3.500-3.500 3.500 3.500z" fill="#555"/><path d="M14 11l-3.500 3.500-3.500-3.500z" fill="#555"/><path d="M4 7.500l2 2.500 4.500-5" stroke="#555" stroke-width="1.300" fill="none"/></svg>
<svg class="abs" style="left:289px;top:79px" width="5" height="3" viewBox="0 0 5 3"><path d="M0 0H5L2.5 3Z" fill="#000"/></svg>
<div class="abs" style="left:300px;top:68px;width:1px;height:24px;background:#808080;"></div><div class="abs" style="left:301px;top:68px;width:1px;height:24px;background:#EEECE6;"></div>
<div class="abs" style="left:304px;top:70px;width:3px;height:1px;background:#7a7a7a;"></div><div class="abs" style="left:304px;top:72px;width:3px;height:1px;background:#7a7a7a;"></div><div class="abs" style="left:304px;top:74px;width:3px;height:1px;background:#7a7a7a;"></div><div class="abs" style="left:304px;top:76px;width:3px;height:1px;background:#7a7a7a;"></div><div class="abs" style="left:304px;top:78px;width:3px;height:1px;background:#7a7a7a;"></div><div class="abs" style="left:304px;top:80px;width:3px;height:1px;background:#7a7a7a;"></div><div class="abs" style="left:304px;top:82px;width:3px;height:1px;background:#7a7a7a;"></div><div class="abs" style="left:304px;top:84px;width:3px;height:1px;background:#7a7a7a;"></div><div class="abs" style="left:304px;top:86px;width:3px;height:1px;background:#7a7a7a;"></div><div class="abs" style="left:304px;top:88px;width:3px;height:1px;background:#7a7a7a;"></div>
<svg class="abs" style="left:423px;top:69px" width="24" height="21" shape-rendering="crispEdges"><rect width="24" height="21" fill="url(#chk)"/></svg><div class="abs" style="left:422px;top:68px;width:26px;height:23px;box-sizing:border-box;border:1px solid;border-color:#808080 #fff #fff #808080"></div>
<div class="abs" style="left:561px;top:67px;width:1px;height:25px;background:#808080;"></div><div class="abs" style="left:562px;top:67px;width:1px;height:25px;background:#EEECE6;"></div>
<span class="t" style="left:20.0px;top:3.5px;font-size:11px;color:#fff;font-weight:bold;transform:scaleX(1.0670);">4521554: FxPro.com-Demo02 - Demo Account - [EURUSD,H1]</span>
<span class="t" style="left:25.5px;top:22.7px;font-size:11px;color:#000;transform:scaleX(0.8744);">File</span>
<span class="t" style="left:58.0px;top:22.7px;font-size:11px;color:#000;transform:scaleX(0.8881);">View</span>
<span class="t" style="left:95.5px;top:22.7px;font-size:11px;color:#000;transform:scaleX(1.0359);">Insert</span>
<span class="t" style="left:140.5px;top:22.7px;font-size:11px;color:#000;transform:scaleX(0.9722);">Charts</span>
<span class="t" style="left:189.0px;top:22.7px;font-size:11px;color:#000;transform:scaleX(0.9345);">Tools</span>
<span class="t" style="left:230.0px;top:22.7px;font-size:11px;color:#000;transform:scaleX(0.9584);">Window</span>
<span class="t" style="left:283.5px;top:22.7px;font-size:11px;color:#000;transform:scaleX(0.9061);">Help</span>
<div class="abs" style="left:0;top:39px;width:1024px;height:1px;background:#fff"></div>
<div class="abs" style="left:0;top:38px;width:1024px;height:1px;background:#808080"></div>
<div class="abs" style="left:0;top:66px;width:772px;height:1px;background:#fff"></div>
<div class="abs" style="left:0;top:65px;width:771px;height:1px;background:#808080"></div>
<span class="t" style="left:257.0px;top:46.7px;font-size:11px;color:#000;transform:scaleX(0.9778);">New Order</span>
<span class="t" style="left:369.8px;top:46.7px;font-size:11px;color:#000;transform:scaleX(0.9870);">AutoTrading</span>
<span class="t" style="left:315.5px;top:75.5px;font-size:10px;color:#444;transform:scaleX(0.9358);">M1</span>
<span class="t" style="left:343.5px;top:75.5px;font-size:10px;color:#444;transform:scaleX(0.9358);">M5</span>
<span class="t" style="left:369.8px;top:75.5px;font-size:10px;color:#444;transform:scaleX(0.8996);">M15</span>
<span class="t" style="left:397.8px;top:75.5px;font-size:10px;color:#444;transform:scaleX(0.9382);">M30</span>
<span class="t" style="left:428.5px;top:75.5px;font-size:10px;color:#444;transform:scaleX(0.9387);">H1</span>
<span class="t" style="left:455.2px;top:75.5px;font-size:10px;color:#444;transform:scaleX(0.9974);">H4</span>
<span class="t" style="left:484.8px;top:75.5px;font-size:10px;color:#444;transform:scaleX(0.9192);">D1</span>
<span class="t" style="left:511.0px;top:75.5px;font-size:10px;color:#444;transform:scaleX(0.9833);">W1</span>
<span class="t" style="left:538.2px;top:75.5px;font-size:10px;color:#444;transform:scaleX(0.9645);">MN</span>
<div class="abs" style="left:0px;top:694px;width:1024px;height:3px;background:#fff;"></div>
<div class="abs" style="left:0px;top:694px;width:1px;height:3px;background:#8a8f96;"></div>
<div class="abs" style="left:1px;top:694px;width:1px;height:3px;background:#404040;"></div>
<div class="abs" style="left:1022px;top:694px;width:2px;height:3px;background:#D4D0C8;"></div>
<div class="abs" style="left:0px;top:697px;width:1024px;height:1px;background:#000;"></div>
<div class="abs" style="left:1px;top:697px;width:1px;height:19px;background:#404040;"></div>
<div class="abs" style="left:86px;top:700px;width:1px;height:14px;background:#404040;"></div>
<div class="abs" style="left:174px;top:700px;width:1px;height:14px;background:#404040;"></div>
<div class="abs" style="left:262px;top:700px;width:1px;height:14px;background:#404040;"></div>
<div class="abs" style="left:350px;top:700px;width:1px;height:14px;background:#404040;"></div>
<span class="t" style="left:16.2px;top:700.5px;font-size:11.5px;color:#3a3a3a;transform:scaleX(0.8464);">EURUSD,H1</span>
<span class="t" style="left:97.0px;top:700.5px;font-size:11.5px;color:#3a3a3a;transform:scaleX(0.8769);">EURUSD,M30</span>
<span class="t" style="left:185.0px;top:700.5px;font-size:11.5px;color:#3a3a3a;transform:scaleX(0.8634);">EURUSD,M15</span>
<span class="t" style="left:271.0px;top:700.5px;font-size:11.5px;color:#3a3a3a;transform:scaleX(0.8666);">EURUSD,Daily</span>
<span class="t" style="left:361.0px;top:700.5px;font-size:11.5px;color:#3a3a3a;transform:scaleX(0.8701);">EURUSD,M30</span>
<div class="abs" style="left:438px;top:697px;width:80px;height:19px;background:#fff;box-sizing:border-box;border:1px solid #000;border-top:none;border-right-width:2px;border-bottom-width:2px"></div>
<span class="t" style="left:448.8px;top:700.5px;font-size:11.5px;color:#000;transform:scaleX(0.8389);">EURUSD,H1</span>
<svg class="abs" style="left:990px;top:702px" width="8" height="9" viewBox="0 0 8 9"><path d="M6 0.500v8L1.500 4.500z" fill="#A8A49C"/></svg>
<svg class="abs" style="left:1009px;top:702px" width="8" height="9" viewBox="0 0 8 9"><path d="M2 0.500v8L6.500 4.500z" fill="#A8A49C"/></svg>
<div class="abs" style="left:0px;top:717px;width:1024px;height:1px;background:#fff;"></div>
<div class="abs" style="left:344px;top:721px;width:1px;height:18px;background:#808080;"></div>
<div class="abs" style="left:345px;top:721px;width:1px;height:18px;background:#fff;"></div>
<div class="abs" style="left:453px;top:721px;width:1px;height:18px;background:#808080;"></div>
<div class="abs" style="left:454px;top:721px;width:1px;height:18px;background:#fff;"></div>
<div class="abs" style="left:553px;top:721px;width:1px;height:18px;background:#808080;"></div>
<div class="abs" style="left:554px;top:721px;width:1px;height:18px;background:#fff;"></div>
<div class="abs" style="left:626px;top:721px;width:1px;height:18px;background:#808080;"></div>
<div class="abs" style="left:627px;top:721px;width:1px;height:18px;background:#fff;"></div>
<div class="abs" style="left:697px;top:721px;width:1px;height:18px;background:#808080;"></div>
<div class="abs" style="left:698px;top:721px;width:1px;height:18px;background:#fff;"></div>
<div class="abs" style="left:766px;top:721px;width:1px;height:18px;background:#808080;"></div>
<div class="abs" style="left:767px;top:721px;width:1px;height:18px;background:#fff;"></div>
<div class="abs" style="left:837px;top:721px;width:1px;height:18px;background:#808080;"></div>
<div class="abs" style="left:838px;top:721px;width:1px;height:18px;background:#fff;"></div>
<div class="abs" style="left:903px;top:721px;width:1px;height:18px;background:#808080;"></div>
<div class="abs" style="left:904px;top:721px;width:1px;height:18px;background:#fff;"></div>
<span class="t" style="left:2.0px;top:724.9px;font-size:11px;color:#000;transform:scaleX(0.9441);">For Help, press F1</span>
<span class="t" style="left:350.0px;top:724.9px;font-size:11px;color:#000;transform:scaleX(0.9683);">Default</span>
<span class="t" style="left:458.8px;top:724.9px;font-size:11px;color:#000;transform:scaleX(1.0071);">2017.03.08 17:00</span>
<span class="t" style="left:559.5px;top:724.9px;font-size:11px;color:#000;transform:scaleX(1.0058);">O: 1.05529</span>
<span class="t" style="left:631.2px;top:724.9px;font-size:11px;color:#000;transform:scaleX(1.0079);">H: 1.05607</span>
<span class="t" style="left:702.5px;top:724.9px;font-size:11px;color:#000;transform:scaleX(0.9952);">L: 1.05520</span>
<span class="t" style="left:771.8px;top:724.9px;font-size:11px;color:#000;transform:scaleX(0.9986);">C: 1.05557</span>
<span class="t" style="left:843.0px;top:724.9px;font-size:11px;color:#000;transform:scaleX(0.9663);">V: 8783</span>
<span class="t" style="left:936.0px;top:724.9px;font-size:11px;color:#000;transform:scaleX(0.9667);">920/3 kb</span>
<svg class="abs" style="left:909px;top:723px" width="24" height="13" viewBox="0 0 24 13"><rect x="0" y="0" width="2" height="10.0" fill="#6E9A1E"/><rect x="0" y="10.0" width="2" height="3.0" fill="#0F5A8C"/><rect x="3" y="0" width="2" height="8.9" fill="#6E9A1E"/><rect x="3" y="8.9" width="2" height="4.1" fill="#0F5A8C"/><rect x="6" y="0" width="2" height="7.8" fill="#6E9A1E"/><rect x="6" y="7.8" width="2" height="5.2" fill="#0F5A8C"/><rect x="9" y="0" width="2" height="6.7" fill="#6E9A1E"/><rect x="9" y="6.7" width="2" height="6.3" fill="#0F5A8C"/><rect x="12" y="0" width="2" height="5.6" fill="#6E9A1E"/><rect x="12" y="5.6" width="2" height="7.4" fill="#0F5A8C"/><rect x="15" y="0" width="2" height="4.5" fill="#6E9A1E"/><rect x="15" y="4.5" width="2" height="8.5" fill="#0F5A8C"/><rect x="18" y="0" width="2" height="3.4" fill="#6E9A1E"/><rect x="18" y="3.4" width="2" height="9.6" fill="#0F5A8C"/><rect x="21" y="0" width="2" height="2.3" fill="#6E9A1E"/><rect x="21" y="2.3" width="2" height="10.7" fill="#0F5A8C"/></svg>
<div class="abs" style="left:0px;top:741px;width:1024px;height:1px;background:#fff;"></div>
<div class="abs" style="left:2px;top:744px;width:52px;height:21px;box-sizing:border-box;background:#D4D0C8;border:1px solid;border-color:#fff #404040 #404040 #fff;box-shadow:inset -1px -1px 0 #808080;"></div>
<svg class="abs" style="left:5px;top:747px" width="16" height="15" viewBox="0 0 16 15"><path d="M1.500 3c2-1.500 3.500-1 5 0l-1 4.500c-1.500-1-3-1.500-5 0z" fill="#E8502A"/><path d="M7.500 3.200c1.500 1 3.500 1.300 5.500 0l-1 4.500c-2 1.300-4 1-5.500 0z" fill="#6BB536"/><path d="M0.200 8.500c2-1.500 3.500-1 5 0l-1 4.500c-1.500-1-3-1.500-5 0z" fill="#3B7FD6"/><path d="M6.200 8.700c1.500 1 3.500 1.300 5.500 0l-1 4.500c-2 1.300-4 1-5.500 0z" fill="#F2C330"/></svg>
<span class="t" style="left:22.0px;top:749.1px;font-size:11.5px;color:#000;font-weight:bold;transform:scaleX(1.0686);">Start</span>
<div class="abs" style="left:61px;top:746px;width:1px;height:18px;background:#808080;"></div>
<div class="abs" style="left:62px;top:746px;width:1px;height:18px;background:#fff;"></div>
<svg class="abs" style="left:72px;top:747px" width="14" height="17" viewBox="0 0 14 17"><rect x="1.500" y="0.500" width="10.500" height="15.500" rx="1.500" fill="#BBD2F2" stroke="#6E96D8"/><path d="M3.500 4h6.500M3.500 7h6.500M3.500 10h6.500M3.500 13h4" stroke="#5A82C8" stroke-width="1.200"/><path d="M3 3.500h2v2h-2zM3 9.500h2v2h-2z" fill="#fff"/></svg>
<svg class="abs" style="left:94px;top:747px" width="16" height="16" viewBox="0 0 16 16"><g transform="scale(1.0)"><circle cx="8" cy="8" r="7.5" fill="#DB4437"/><path d="M8 8L1.5 4.2A7.5 7.5 0 0 0 8 15.5Z" fill="#0F9D58"/><path d="M8 8L8 15.5A7.5 7.5 0 0 0 14.5 4.2Z" fill="#FFCD40"/><path d="M8 8L1.5 4.2A7.5 7.5 0 0 1 14.5 4.2Z" fill="#DB4437"/><circle cx="8" cy="8" r="3.6" fill="#fff"/><circle cx="8" cy="8" r="2.8" fill="#4285F4"/></g></svg>
<svg class="abs" style="left:116px;top:747px" width="17" height="17" viewBox="0 0 17 17"><circle cx="8.500" cy="8.500" r="7.800" fill="#F08A1C"/><circle cx="9" cy="9" r="4.800" fill="#3C5ABE"/><path d="M2 5c3-4 9-4.500 12.500-.5c-3-1.500-5.500-.5-6.500 1.500c2.500 0 3.500 2 2.500 3.500c-3 1.500-5.500-.5-5-3.500c-1.500 1-2 3-1 5.500c-2.500-1.500-3.500-4-2.500-6.500z" fill="#F5B02C"/><path d="M1 8c0 5 4 8.500 8 8c-3-1-5.500-3.500-5.500-7z" fill="#E0541C"/></svg>
<svg class="abs" style="left:139px;top:747px" width="17" height="17" viewBox="0 0 17 17"><g transform="scale(1.0625)"><circle cx="8" cy="8" r="7.5" fill="#1E5FA8"/><path d="M2 9C3 3 11 2 14 6C12 5 9 5.5 8 8C10 8 12 9 12 11C9 14 4 13 2 9Z" fill="#5AA0E0"/><path d="M4 8.5L8 11.5L12.5 8V12.5H4Z" fill="#E8EEF6"/></g></svg>
<svg class="abs" style="left:162px;top:747px" width="17" height="17" viewBox="0 0 17 17"><rect x="1" y="2" width="14.500" height="13.500" rx="2" fill="#3F8EE0" stroke="#1E5FB4"/><path d="M3 12l4-5 2.500 2.500 3.500-5" stroke="#fff" stroke-width="1.800" fill="none"/><path d="M9 3h5v5z" fill="#fff"/></svg>
<svg class="abs" style="left:184px;top:747px" width="17" height="17" viewBox="0 0 17 17"><rect x="1" y="2" width="14" height="13.500" rx="2.500" fill="#4A96E6" stroke="#1E5FB4"/><rect x="4" y="4.500" width="7" height="8.500" fill="#fff"/><path d="M5.500 7h4M5.500 9h4M5.500 11h3" stroke="#3C78D2" stroke-width="0.900"/><path d="M10 3l4-1.500-1 4.500z" fill="#fff" stroke="#1E5FB4" stroke-width="0.600"/></svg>
<div class="abs" style="left:214px;top:746px;width:1px;height:18px;background:#808080;"></div>
<div class="abs" style="left:215px;top:746px;width:1px;height:18px;background:#fff;"></div>
<svg class="abs" style="left:223px;top:746px" width="155" height="17" shape-rendering="crispEdges"><rect width="155" height="17" fill="url(#chk)"/></svg>
<div class="abs" style="left:221px;top:744px;width:159px;height:21px;box-sizing:border-box;border:1px solid;border-color:#404040 #fff #fff #404040;box-shadow:inset 1px 1px 0 #808080"></div>
<svg class="abs" style="left:226px;top:748px" width="15" height="15" viewBox="0 0 15 15"><rect width="15" height="15" fill="#140A0A"/><text x="1.5" y="7" font-size="7" font-weight="bold" fill="#D21E28" font-family="Liberation Serif,serif">FX</text><text x="1" y="13.5" font-size="6.5" font-weight="bold" fill="#B4141E" font-family="Liberation Serif,serif">PRO</text></svg>
<span class="t" style="left:246.2px;top:749.7px;font-size:11.5px;color:#000;font-weight:bold;transform:scaleX(1.0229);">4521554: FxPro.com-...</span>
<div class="abs" style="left:384px;top:744px;width:160px;height:21px;box-sizing:border-box;background:#D4D0C8;border:1px solid;border-color:#fff #404040 #404040 #fff;box-shadow:inset -1px -1px 0 #808080;"></div>
<svg class="abs" style="left:389px;top:747px" width="15" height="15" viewBox="0 0 15 15"><g transform="scale(0.9375)"><circle cx="8" cy="8" r="7.5" fill="#DB4437"/><path d="M8 8L1.5 4.2A7.5 7.5 0 0 0 8 15.5Z" fill="#0F9D58"/><path d="M8 8L8 15.5A7.5 7.5 0 0 0 14.5 4.2Z" fill="#FFCD40"/><path d="M8 8L1.5 4.2A7.5 7.5 0 0 1 14.5 4.2Z" fill="#DB4437"/><circle cx="8" cy="8" r="3.6" fill="#fff"/><circle cx="8" cy="8" r="2.8" fill="#4285F4"/></g></svg>
<span class="t" style="left:408.0px;top:749.5px;font-size:11px;color:#000;transform:scaleX(0.9970);">Triangular moving avera...</span>
<div class="abs" style="left:547px;top:744px;width:160px;height:21px;box-sizing:border-box;background:#D4D0C8;border:1px solid;border-color:#fff #404040 #404040 #fff;box-shadow:inset -1px -1px 0 #808080;"></div>
<svg class="abs" style="left:551px;top:747px" width="16" height="16" viewBox="0 0 16 16"><g transform="scale(1.0)"><circle cx="8" cy="8" r="7.5" fill="#1E5FA8"/><path d="M2 9C3 3 11 2 14 6C12 5 9 5.5 8 8C10 8 12 9 12 11C9 14 4 13 2 9Z" fill="#5AA0E0"/><path d="M4 8.5L8 11.5L12.5 8V12.5H4Z" fill="#E8EEF6"/></g></svg>
<span class="t" style="left:570.8px;top:749.5px;font-size:11px;color:#000;transform:scaleX(0.9543);">Libero Mail - Mozilla Thun...</span>
<div class="abs" style="left:924px;top:744px;width:97px;height:21px;box-sizing:border-box;border:1px solid;border-color:#808080 #fff #fff #808080"></div>
<svg class="abs" style="left:928px;top:747px" width="14" height="17" viewBox="0 0 14 17"><path d="M7 0.500c2 1.500 4 2 6 2c0 6-1.500 10.500-6 13.500c-4.500-3-6-7.500-6-13.500c2 0 4-.5 6-2z" fill="#D42030" stroke="#8A8A8A" stroke-width="0.900"/><path d="M4.800 5.500l4.400 4.500M9.200 5.500l-4.400 4.500" stroke="#fff" stroke-width="1.700"/></svg>
<svg class="abs" style="left:945px;top:746px" width="15" height="18" viewBox="0 0 15 18"><rect x="6" y="1" width="8" height="7" fill="#1E3C96" stroke="#6E8CDC"/><rect x="1" y="6" width="9" height="7.500" fill="#8CBEF5" stroke="#4A78D2"/><rect x="3" y="14" width="6" height="2" fill="#7AA0E0"/><rect x="8" y="9" width="6" height="2" fill="#5A82D2"/></svg>
<svg class="abs" style="left:962px;top:746px" width="18" height="18" viewBox="0 0 18 18"><circle cx="7" cy="7.500" r="5.800" fill="#8C8C8C" stroke="#5A5A5A"/><circle cx="6.500" cy="7" r="2.800" fill="#C8C8C8"/><path d="M12 12c2-1.500 3-3.500 3-6" stroke="#7A96DC" stroke-width="1.200" fill="none"/><path d="M10 15c3.500-1 6-4 6.500-8" stroke="#9AB2EC" stroke-width="1" fill="none"/></svg>
<span class="t" style="left:988.7px;top:749.2px;font-size:11px;color:#000;transform:scaleX(0.9948);">9.03</span>
</div>
</body></html>
